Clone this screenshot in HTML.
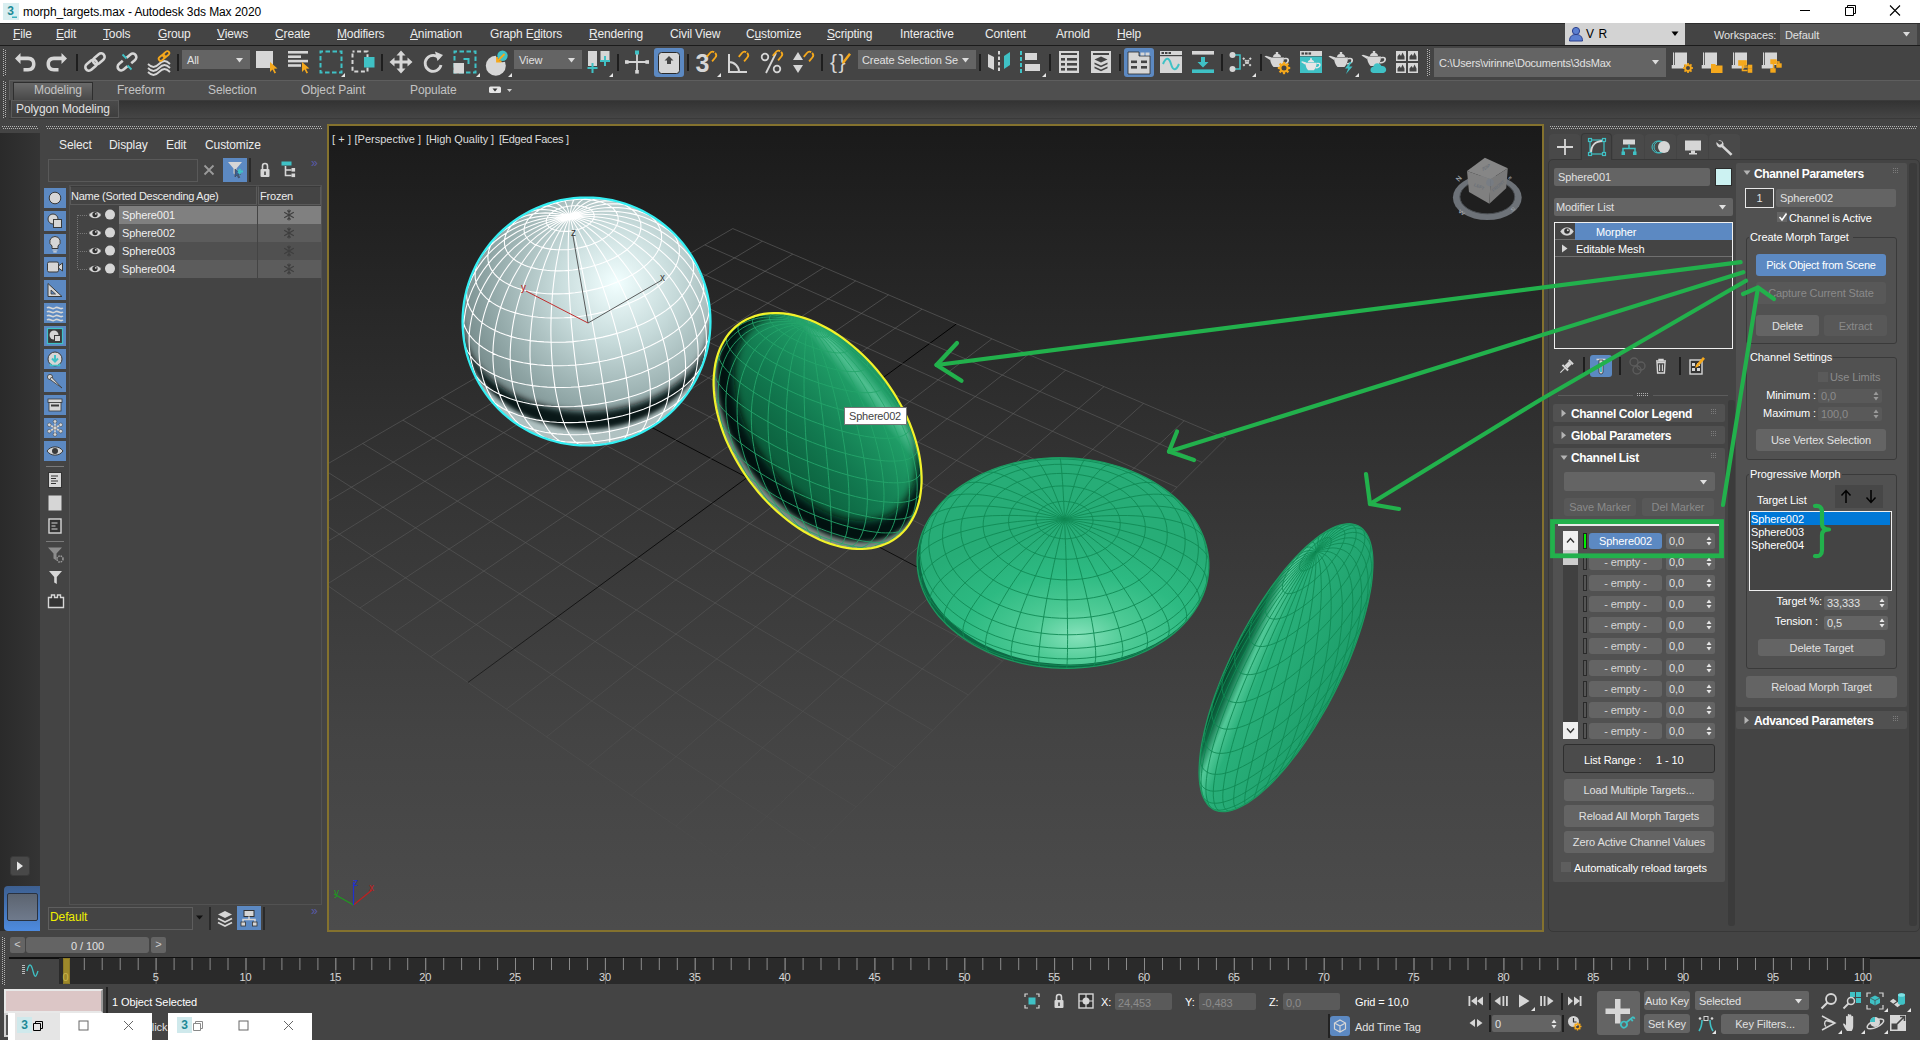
<!DOCTYPE html>
<html><head><meta charset="utf-8"><title>morph_targets.max - Autodesk 3ds Max 2020</title><style>
html,body{margin:0;padding:0;}
body{width:1920px;height:1040px;overflow:hidden;background:#444444;position:relative;font-family:"Liberation Sans",sans-serif;font-size:11px;color:#e1e1e1;letter-spacing:-0.1px;}
div,svg{position:absolute;box-sizing:border-box;}
svg{overflow:visible;}
svg text{font-family:"Liberation Sans",sans-serif;}
.btn{background:#646464;border-radius:3px;text-align:center;color:#e1e1e1;white-space:nowrap;}
.dis{color:#8c8c8c;}
.fld{background:#646464;border-radius:2px;}
.ro{background:#515151;border-radius:2px;}
</style></head><body>
<div style="left:0px;top:0px;width:1920px;height:23px;background:#ffffff;"></div>
<svg style="left:3px;top:3px;" width="16" height="17" viewBox="0 0 16 17"><rect x="0" y="0" width="16" height="17" fill="#d9eef0"/><text x="7.5" y="12" font-size="12" font-weight="bold" fill="#1e8a96" text-anchor="middle">3</text><rect x="9" y="13.5" width="5" height="1.5" fill="#3fb1bd"/></svg>
<div style="left:23px;top:3.5px;height:16px;line-height:16px;font-size:12px;color:#000;white-space:nowrap;letter-spacing:-0.1px;">morph_targets.max - Autodesk 3ds Max 2020</div>
<svg style="left:1795px;top:2px;" width="110" height="17" viewBox="0 0 110 17"><path d="M5 8.5H15" stroke="#000" stroke-width="1" fill="none"/><path d="M50.5 5.5h8v8h-8z M52.5 5.5v-2h8v8h-2" stroke="#000" stroke-width="1" fill="none"/><path d="M95 3.5l10 10M105 3.5l-10 10" stroke="#000" stroke-width="1.1" fill="none"/></svg>
<div style="left:0px;top:23px;width:1920px;height:23px;background:#444444;border-top:1px solid #2e2e2e;border-bottom:1.5px solid #1c1c1c;"></div>
<div style="left:13px;top:25.5px;height:16px;line-height:16px;font-size:12px;color:#ececec;white-space:nowrap;letter-spacing:-0.15px;"><u>F</u>ile</div>
<div style="left:56px;top:25.5px;height:16px;line-height:16px;font-size:12px;color:#ececec;white-space:nowrap;letter-spacing:-0.15px;"><u>E</u>dit</div>
<div style="left:103px;top:25.5px;height:16px;line-height:16px;font-size:12px;color:#ececec;white-space:nowrap;letter-spacing:-0.15px;"><u>T</u>ools</div>
<div style="left:158px;top:25.5px;height:16px;line-height:16px;font-size:12px;color:#ececec;white-space:nowrap;letter-spacing:-0.15px;"><u>G</u>roup</div>
<div style="left:217px;top:25.5px;height:16px;line-height:16px;font-size:12px;color:#ececec;white-space:nowrap;letter-spacing:-0.15px;"><u>V</u>iews</div>
<div style="left:275px;top:25.5px;height:16px;line-height:16px;font-size:12px;color:#ececec;white-space:nowrap;letter-spacing:-0.15px;"><u>C</u>reate</div>
<div style="left:337px;top:25.5px;height:16px;line-height:16px;font-size:12px;color:#ececec;white-space:nowrap;letter-spacing:-0.15px;"><u>M</u>odifiers</div>
<div style="left:410px;top:25.5px;height:16px;line-height:16px;font-size:12px;color:#ececec;white-space:nowrap;letter-spacing:-0.15px;"><u>A</u>nimation</div>
<div style="left:490px;top:25.5px;height:16px;line-height:16px;font-size:12px;color:#ececec;white-space:nowrap;letter-spacing:-0.15px;">Graph E<u>d</u>itors</div>
<div style="left:589px;top:25.5px;height:16px;line-height:16px;font-size:12px;color:#ececec;white-space:nowrap;letter-spacing:-0.15px;"><u>R</u>endering</div>
<div style="left:670px;top:25.5px;height:16px;line-height:16px;font-size:12px;color:#ececec;white-space:nowrap;letter-spacing:-0.15px;">Civil View</div>
<div style="left:746px;top:25.5px;height:16px;line-height:16px;font-size:12px;color:#ececec;white-space:nowrap;letter-spacing:-0.15px;">C<u>u</u>stomize</div>
<div style="left:827px;top:25.5px;height:16px;line-height:16px;font-size:12px;color:#ececec;white-space:nowrap;letter-spacing:-0.15px;"><u>S</u>cripting</div>
<div style="left:900px;top:25.5px;height:16px;line-height:16px;font-size:12px;color:#ececec;white-space:nowrap;letter-spacing:-0.15px;">Interactive</div>
<div style="left:985px;top:25.5px;height:16px;line-height:16px;font-size:12px;color:#ececec;white-space:nowrap;letter-spacing:-0.15px;">Content</div>
<div style="left:1056px;top:25.5px;height:16px;line-height:16px;font-size:12px;color:#ececec;white-space:nowrap;letter-spacing:-0.15px;">Arnold</div>
<div style="left:1117px;top:25.5px;height:16px;line-height:16px;font-size:12px;color:#ececec;white-space:nowrap;letter-spacing:-0.15px;"><u>H</u>elp</div>
<div style="left:1565px;top:23px;width:120px;height:22px;background:#d3d3d3;"></div>
<svg style="left:1568px;top:26px;" width="16" height="16" viewBox="0 0 16 16"><circle cx="8" cy="5" r="3.6" fill="#5b7fd0" stroke="#2b3f8c" stroke-width="1"/><path d="M1.5 15c0-5 3-6.5 6.5-6.5s6.5 1.5 6.5 6.5z" fill="#5b7fd0" stroke="#2b3f8c" stroke-width="1"/></svg>
<div style="left:1586px;top:26.0px;height:16px;line-height:16px;font-size:12px;color:#000;white-space:nowrap;letter-spacing:0.6px;">V R</div>
<svg style="left:1671px;top:31px;" width="8" height="6" viewBox="0 0 8 6"><path d="M0.5 0.5h7l-3.5 4.5z" fill="#000"/></svg>
<div style="left:1714px;top:26.5px;height:16px;line-height:16px;font-size:11px;color:#e1e1e1;white-space:nowrap;">Workspaces:</div>
<div style="left:1780px;top:24px;width:137px;height:21px;background:#5a5a5a;"></div>
<div style="left:1785px;top:26.5px;height:16px;line-height:16px;font-size:11px;color:#e1e1e1;white-space:nowrap;">Default</div>
<svg style="left:1903px;top:32px;" width="8" height="5" viewBox="0 0 8 5"><path d="M0 0h7l-3.5 4.5z" fill="#dcdcdc"/></svg>
<div style="left:3px;top:49px;width:3px;height:27px;background:linear-gradient(#b4b4b4 50%,transparent 50%) 0 0/1px 2px repeat-y,linear-gradient(#b4b4b4 50%,transparent 50%) 2px 1px/1px 2px repeat-y;"></div>
<svg style="left:11.0px;top:48.0px;" width="28" height="28" viewBox="-14.0 -14.0 28 28"><path d="M-10 -3.5 L-4.5 -9 V-5.5 H3 C8 -5.5 10.5 -2.5 10.5 2 C10.5 6.5 8 9.5 3 9.5 H-1.5 V6 H3 C5.5 6 7 4.5 7 2 C7 -0.5 5.5 -1.7 3 -1.7 H-4.5 V2 Z" fill="#d6d6d6"/></svg>
<svg style="left:43.0px;top:48.0px;" width="28" height="28" viewBox="-14.0 -14.0 28 28"><path d="M10 -3.5 L4.5 -9 V-5.5 H-3 C-8 -5.5 -10.5 -2.5 -10.5 2 C-10.5 6.5 -8 9.5 -3 9.5 H1.5 V6 H-3 C-5.5 6 -7 4.5 -7 2 C-7 -0.5 -5.5 -1.7 -3 -1.7 H4.5 V2 Z" fill="#d6d6d6"/></svg>
<div style="left:76px;top:54px;width:2px;height:17px;background:#1e1e1e;"></div>
<svg style="left:81.0px;top:48.0px;" width="28" height="28" viewBox="-14.0 -14.0 28 28"><g transform="rotate(-40)" fill="none" stroke="#d6d6d6" stroke-width="2.6"><rect x="-11.5" y="-3.6" width="13" height="7.2" rx="3.6"/><rect x="-1.5" y="-3.6" width="13" height="7.2" rx="3.6"/></g></svg>
<svg style="left:113.0px;top:48.0px;" width="28" height="28" viewBox="-14.0 -14.0 28 28"><g transform="rotate(-40)" fill="none" stroke="#d6d6d6" stroke-width="2.6"><path d="M-2.5 -3.6 H-7.5 a3.6 3.6 0 0 0 0 7.2 H-2.5"/><path d="M2.5 -3.6 H7.5 a3.6 3.6 0 0 1 0 7.2 H2.5"/></g><path d="M-4.5 -7.5l4 4M0.5 3.5l4 4" stroke="#3fc1c5" stroke-width="1.8"/></svg>
<svg style="left:145.0px;top:48.0px;" width="28" height="28" viewBox="-14.0 -14.0 28 28"><g fill="none" stroke="#d6d6d6" stroke-width="1.8"><path d="M-11 2c4 4 7 4 11 0s7 -4 11 0"/><path d="M-11 6c4 4 7 4 11 0s7 -4 11 0"/><path d="M-11 10c4 4 7 4 11 0s7 -4 11 0"/></g><g transform="translate(5,-6) scale(0.55)"><g transform="rotate(-40)" fill="none" stroke="#f5a81c" stroke-width="3.2"><rect x="-11.5" y="-3.6" width="13" height="7.2" rx="3.6"/><rect x="-1.5" y="-3.6" width="13" height="7.2" rx="3.6"/></g></g></svg>
<div style="left:177px;top:54px;width:2px;height:17px;background:#1e1e1e;"></div>
<div style="left:182px;top:50px;width:68px;height:19px;background:#646464;"></div>
<div style="left:187px;top:51.5px;height:16px;line-height:16px;font-size:11px;color:#e1e1e1;white-space:nowrap;">All</div>
<svg style="left:236px;top:57.5px;" width="8" height="5" viewBox="0 0 8 5"><path d="M0 0h7l-3.5 4.5z" fill="#dcdcdc"/></svg>
<svg style="left:252.0px;top:48.0px;" width="28" height="28" viewBox="-14.0 -14.0 28 28"><rect x="-10" y="-11" width="17" height="17" fill="#d6d6d6"/><path d="M4 0 L4 10 L6.5 7.5 L8.5 11.5 L10 10.7 L8 6.8 L11.5 6.5 Z" fill="#f5a81c"/></svg>
<svg style="left:284.0px;top:48.0px;" width="28" height="28" viewBox="-14.0 -14.0 28 28"><g fill="#d6d6d6"><rect x="-10" y="-11" width="20" height="2.6"/><rect x="-10" y="-6.6" width="13" height="2.6"/><rect x="-10" y="-2.2" width="20" height="2.6"/><rect x="-10" y="2.2" width="13" height="2.6"/></g><path d="M4 0 L4 10 L6.5 7.5 L8.5 11.5 L10 10.7 L8 6.8 L11.5 6.5 Z" fill="#f5a81c"/></svg>
<svg style="left:317.0px;top:48.0px;" width="28" height="28" viewBox="-14.0 -14.0 28 28"><rect x="-10.5" y="-10.5" width="21" height="21" fill="none" stroke="#3fc1c5" stroke-width="2" stroke-dasharray="4.5 2.5" stroke-dashoffset="2"/></svg>
<svg style="left:341px;top:73px;" width="4" height="4" viewBox="0 0 4 4"><path d="M4 0v4h-4z" fill="#e6e6e6"/></svg>
<svg style="left:349.0px;top:48.0px;" width="28" height="28" viewBox="-14.0 -14.0 28 28"><rect x="-10.5" y="-10.5" width="15" height="20" fill="none" stroke="#d6d6d6" stroke-width="2" stroke-dasharray="4 2.6" stroke-dashoffset="2"/><rect x="1" y="-5" width="10.5" height="10.5" fill="#3fc1c5"/></svg>
<div style="left:381px;top:54px;width:2px;height:17px;background:#1e1e1e;"></div>
<svg style="left:387.0px;top:48.0px;" width="28" height="28" viewBox="-14.0 -14.0 28 28"><path d="M0 -11.5l4.5 5h-3v5h5v-3l5 4.5l-5 4.5v-3h-5v5h3l-4.5 5l-4.5 -5h3v-5h-5v3l-5 -4.5l5 -4.5v3h5v-5h-3z" fill="#d6d6d6"/></svg>
<svg style="left:419.0px;top:48.0px;" width="28" height="28" viewBox="-14.0 -14.0 28 28"><path d="M6.5 -3.5A8 8 0 1 0 8 3" fill="none" stroke="#d6d6d6" stroke-width="2.8"/><path d="M2 -10.5l8 3.5l-5.5 6z" fill="#d6d6d6"/></svg>
<svg style="left:451.0px;top:48.0px;" width="28" height="28" viewBox="-14.0 -14.0 28 28"><rect x="-10.5" y="-10.5" width="21" height="21" fill="none" stroke="#3fc1c5" stroke-width="2" stroke-dasharray="4.5 2.5" stroke-dashoffset="2"/><rect x="-11.5" y="1" width="10.5" height="10.5" fill="#d6d6d6"/><path d="M-1.5 -3h5v5" fill="none" stroke="#3fc1c5" stroke-width="2"/></svg>
<svg style="left:476px;top:73px;" width="4" height="4" viewBox="0 0 4 4"><path d="M4 0v4h-4z" fill="#e6e6e6"/></svg>
<svg style="left:483.0px;top:48.0px;" width="28" height="28" viewBox="-14.0 -14.0 28 28"><circle cx="-1.200" cy="3.700" r="10" fill="#d6d6d6"/><circle cx="5.500" cy="-6.300" r="6.500" fill="#444"/><circle cx="5.500" cy="-6.300" r="5.200" fill="#3fc1c5"/><path d="M7.500 -8l-7.500 7.500m0 -4.500v4.500h4.500" stroke="#f5a81c" stroke-width="1.800" fill="none"/></svg>
<svg style="left:508px;top:73px;" width="4" height="4" viewBox="0 0 4 4"><path d="M4 0v4h-4z" fill="#e6e6e6"/></svg>
<div style="left:514px;top:50px;width:68px;height:19px;background:#646464;"></div>
<div style="left:519px;top:51.5px;height:16px;line-height:16px;font-size:11px;color:#e1e1e1;white-space:nowrap;">View</div>
<svg style="left:568px;top:57.5px;" width="8" height="5" viewBox="0 0 8 5"><path d="M0 0h7l-3.5 4.5z" fill="#dcdcdc"/></svg>
<svg style="left:585.0px;top:48.0px;" width="28" height="28" viewBox="-14.0 -14.0 28 28"><rect x="-11" y="-11" width="9" height="15" fill="#d6d6d6"/><rect x="1.5" y="-11" width="9" height="9" fill="#d6d6d6"/><path d="M-6.5 1v10M-11.5 6h10M6 -6v10M1 -1h10" stroke="#3fc1c5" stroke-width="2" fill="none"/></svg>
<svg style="left:609px;top:73px;" width="4" height="4" viewBox="0 0 4 4"><path d="M4 0v4h-4z" fill="#e6e6e6"/></svg>
<div style="left:617px;top:54px;width:2px;height:17px;background:#1e1e1e;"></div>
<svg style="left:623.0px;top:48.0px;" width="28" height="28" viewBox="-14.0 -14.0 28 28"><path d="M-11 0h22M0 -8v19" stroke="#d6d6d6" stroke-width="1.8"/><rect x="-2" y="-11.5" width="4" height="4" fill="#3fc1c5"/><rect x="-12" y="-1.8" width="3.6" height="3.6" fill="#d6d6d6"/><rect x="8.4" y="-1.8" width="3.6" height="3.6" fill="#d6d6d6"/><rect x="-1.8" y="8" width="3.6" height="3.6" fill="#d6d6d6"/></svg>
<div style="left:654px;top:48px;width:30px;height:29px;background:#5c89c2;border-radius:3px;"></div>
<svg style="left:655.0px;top:48.5px;" width="28" height="28" viewBox="-14.0 -14.0 28 28"><rect x="-10.5" y="-10.5" width="21" height="21" rx="3" fill="#d6d6d6" stroke="#2a2a2a" stroke-width="1"/><path d="M0 -7l4.5 4.5h-2.5v3.5h-4v-3.5h-2.5z" fill="#444"/></svg>
<div style="left:687px;top:54px;width:2px;height:17px;background:#1e1e1e;"></div>
<svg style="left:693.0px;top:48.0px;" width="28" height="28" viewBox="-14.0 -14.0 28 28"><text x="-4.5" y="9.5" font-size="25" font-weight="bold" fill="#d6d6d6" text-anchor="middle">3</text><g transform="translate(5,-6) rotate(40)" fill="none" stroke="#f5a81c" stroke-width="1.8"><path d="M-3.5 4v-5a3.5 3.5 0 0 1 7 0v5" stroke-dasharray="9.5 1.2 20"/></g></svg>
<svg style="left:717px;top:73px;" width="4" height="4" viewBox="0 0 4 4"><path d="M4 0v4h-4z" fill="#e6e6e6"/></svg>
<svg style="left:724.0px;top:48.0px;" width="28" height="28" viewBox="-14.0 -14.0 28 28"><path d="M-9 -8v18h18M-9 0a10 10 0 0 1 10 10" fill="none" stroke="#d6d6d6" stroke-width="2"/><g transform="translate(6,-6) rotate(40)" fill="none" stroke="#f5a81c" stroke-width="1.8"><path d="M-3.5 4v-5a3.5 3.5 0 0 1 7 0v5" stroke-dasharray="9.5 1.2 20"/></g></svg>
<svg style="left:757.0px;top:48.0px;" width="28" height="28" viewBox="-14.0 -14.0 28 28"><circle cx="-6" cy="-5" r="3.3" fill="none" stroke="#d6d6d6" stroke-width="1.8"/><circle cx="6" cy="7" r="3.3" fill="none" stroke="#d6d6d6" stroke-width="1.8"/><path d="M5 -9l-10 20" stroke="#d6d6d6" stroke-width="1.8"/><g transform="translate(7,-7) rotate(40)" fill="none" stroke="#f5a81c" stroke-width="1.8"><path d="M-3.5 4v-5a3.5 3.5 0 0 1 7 0v5" stroke-dasharray="9.5 1.2 20"/></g></svg>
<svg style="left:788.0px;top:48.0px;" width="28" height="28" viewBox="-14.0 -14.0 28 28"><path d="M-9 -2l5 -8l5 8zM-9 3l5 8l5 -8z" fill="#d6d6d6"/><g transform="translate(7,-6) rotate(40)" fill="none" stroke="#f5a81c" stroke-width="1.8"><path d="M-3.5 4v-5a3.5 3.5 0 0 1 7 0v5" stroke-dasharray="9.5 1.2 20"/></g></svg>
<div style="left:821px;top:54px;width:2px;height:17px;background:#1e1e1e;"></div>
<svg style="left:827.0px;top:48.0px;" width="28" height="28" viewBox="-14.0 -14.0 28 28"><text x="-2.5" y="7" font-size="21" fill="#d6d6d6" text-anchor="middle" letter-spacing="1.5">{}</text><path d="M1.500 -0.500l6.500 -8.500l2 1.600l-6.500 8.500l-2.600 1z" fill="#f5a81c"/></svg>
<div style="left:858px;top:50px;width:118px;height:19px;background:#646464;"></div>
<div style="left:862px;top:51.5px;height:16px;line-height:16px;font-size:11px;color:#e1e1e1;white-space:nowrap;">Create Selection Se</div>
<svg style="left:962px;top:57.5px;" width="8" height="5" viewBox="0 0 8 5"><path d="M0 0h7l-3.5 4.5z" fill="#dcdcdc"/></svg>
<div style="left:979px;top:54px;width:2px;height:17px;background:#1e1e1e;"></div>
<svg style="left:985.0px;top:48.0px;" width="28" height="28" viewBox="-14.0 -14.0 28 28"><path d="M-11 -8l6 3v13l-6 -3z" fill="#d6d6d6"/><path d="M11 -10l-6 4v13l6 -4z" fill="#3fc1c5"/><path d="M0 -11v22" stroke="#d6d6d6" stroke-width="2" stroke-dasharray="3.5 2"/></svg>
<svg style="left:1016.0px;top:48.0px;" width="28" height="28" viewBox="-14.0 -14.0 28 28"><path d="M-9 -11v22" stroke="#3fc1c5" stroke-width="2" stroke-dasharray="4 2"/><rect x="-5" y="-9" width="12" height="7" fill="#d6d6d6"/><rect x="-5" y="2" width="15" height="7" fill="#d6d6d6"/></svg>
<svg style="left:1042px;top:73px;" width="4" height="4" viewBox="0 0 4 4"><path d="M4 0v4h-4z" fill="#e6e6e6"/></svg>
<div style="left:1049px;top:54px;width:2px;height:17px;background:#1e1e1e;"></div>
<svg style="left:1055.0px;top:48.0px;" width="28" height="28" viewBox="-14.0 -14.0 28 28"><rect x="-10" y="-11" width="20" height="22" fill="#d6d6d6"/><g fill="#444"><rect x="-8" y="-9" width="16" height="2"/><rect x="-8" y="-4" width="4" height="2.6"/><rect x="-2" y="-4" width="10" height="2.6"/><rect x="-8" y="1" width="4" height="2.6"/><rect x="-2" y="1" width="10" height="2.6"/><rect x="-8" y="6" width="4" height="2.6"/><rect x="-2" y="6" width="10" height="2.6"/></g></svg>
<svg style="left:1087.0px;top:48.0px;" width="28" height="28" viewBox="-14.0 -14.0 28 28"><rect x="-10" y="-11" width="20" height="22" fill="#d6d6d6"/><g fill="#444"><rect x="-8" y="-9" width="16" height="2"/><path d="M0 -5.5l6.5 3l-6.5 3l-6.5 -3z"/><path d="M-6.5 0.5l6.5 3l6.5 -3l0 1.8l-6.5 3l-6.5 -3z"/><path d="M-6.5 4.5l6.5 3l6.5 -3l0 1.8l-6.5 3l-6.5 -3z"/></g></svg>
<div style="left:1119px;top:54px;width:2px;height:17px;background:#1e1e1e;"></div>
<div style="left:1124px;top:48px;width:30px;height:29px;background:#5c89c2;border-radius:3px;"></div>
<svg style="left:1125.0px;top:48.5px;" width="28" height="28" viewBox="-14.0 -14.0 28 28"><path d="M-11 -11h11v4h11v18h-22z" fill="#d6d6d6" stroke="#2a2a2a" stroke-width="0.8"/><rect x="1.5" y="-10.5" width="4" height="3" fill="#d6d6d6"/><rect x="6.5" y="-10.5" width="4" height="3" fill="#d6d6d6"/><g fill="#444"><rect x="-8" y="-2.5" width="6" height="2.6"/><rect x="2" y="-2.5" width="6" height="2.6"/><rect x="-8" y="3" width="6" height="2.6"/><rect x="2" y="3" width="6" height="2.6"/></g></svg>
<svg style="left:1157.0px;top:48.0px;" width="28" height="28" viewBox="-14.0 -14.0 28 28"><rect x="-11" y="-11" width="22" height="22" fill="#d6d6d6"/><rect x="-11" y="-7" width="22" height="1.2" fill="#444"/><g fill="#444"><rect x="-9.5" y="-10" width="2.5" height="2"/><rect x="-6" y="-10" width="2.5" height="2"/><rect x="-2.5" y="-10" width="2.5" height="2"/></g><path d="M-8 2c3 -7 6 -7 8 0s5 7 8 0" fill="none" stroke="#3fc1c5" stroke-width="2"/></svg>
<svg style="left:1189.0px;top:48.0px;" width="28" height="28" viewBox="-14.0 -14.0 28 28"><rect x="-11" y="-11" width="22" height="3.6" fill="#d6d6d6"/><rect x="-11" y="7.4" width="22" height="3.6" fill="#3fc1c5"/><path d="M-2 -5h4v5h3.5l-5.5 5.5l-5.5 -5.5h3.5z" fill="#3fc1c5"/></svg>
<div style="left:1221px;top:54px;width:2px;height:17px;background:#1e1e1e;"></div>
<svg style="left:1227.0px;top:48.0px;" width="28" height="28" viewBox="-14.0 -14.0 28 28"><g fill="none" stroke="#3fc1c5" stroke-width="1.6"><path d="M-6 -7h5v14h-5"/></g><path d="M2 -4l8 8M10 -4l-8 8" stroke="#d6d6d6" stroke-width="2" stroke-dasharray="2 1"/><circle cx="-8.5" cy="-7" r="3" fill="#d6d6d6"/><circle cx="-8.5" cy="7" r="3" fill="#d6d6d6"/></svg>
<svg style="left:1252px;top:73px;" width="4" height="4" viewBox="0 0 4 4"><path d="M4 0v4h-4z" fill="#e6e6e6"/></svg>
<div style="left:1260px;top:54px;width:2px;height:17px;background:#1e1e1e;"></div>
<svg style="left:1265.0px;top:48.0px;" width="28" height="28" viewBox="-14.0 -14.0 28 28"><g transform="translate(-2,-1) scale(1)" fill="#d6d6d6"><path d="M-7 -3.5h14c0 4 -1.5 7.5 -3.5 9.5h-7c-2 -2 -3.5 -5.5 -3.5 -9.5z"/><path d="M-4 -4c0 -2 2 -3.2 4 -3.2s4 1.2 4 3.2z"/><rect x="-1.2" y="-9" width="2.4" height="2"/><path d="M-7 -1l-5.5 -3.5l1.5 -0.8l5 1.5z"/><path d="M7 -3c4 -1 5.5 0.5 5 3s-3.5 4 -6.5 3.5l0.5 -1.6c2 0.2 4 -0.6 4.2 -2.2s-1 -1.8 -3.2 -1.2z"/></g><g transform="translate(5,6)"><g fill="#f5a81c"><circle r="3.6" fill="none" stroke="#f5a81c" stroke-width="2.2"/><rect x="-1.1" y="-6.2" width="2.2" height="2.6" transform="rotate(0)"/><rect x="-1.1" y="-6.2" width="2.2" height="2.6" transform="rotate(45)"/><rect x="-1.1" y="-6.2" width="2.2" height="2.6" transform="rotate(90)"/><rect x="-1.1" y="-6.2" width="2.2" height="2.6" transform="rotate(135)"/><rect x="-1.1" y="-6.2" width="2.2" height="2.6" transform="rotate(180)"/><rect x="-1.1" y="-6.2" width="2.2" height="2.6" transform="rotate(225)"/><rect x="-1.1" y="-6.2" width="2.2" height="2.6" transform="rotate(270)"/><rect x="-1.1" y="-6.2" width="2.2" height="2.6" transform="rotate(315)"/></g></g></svg>
<svg style="left:1297.0px;top:48.0px;" width="28" height="28" viewBox="-14.0 -14.0 28 28"><rect x="-11" y="-11" width="22" height="5" fill="#d6d6d6"/><g fill="#444"><rect x="-9.5" y="-9.6" width="2.6" height="2.2"/><rect x="-6" y="-9.6" width="2.6" height="2.2"/><rect x="-2.5" y="-9.6" width="2.6" height="2.2"/></g><rect x="-11" y="-5.5" width="22" height="16.5" fill="#3fc1c5"/><g transform="translate(0,3.5) scale(0.8)" fill="#e6e6e6"><path d="M-7 -3.5h14c0 4 -1.5 7.5 -3.5 9.5h-7c-2 -2 -3.5 -5.5 -3.5 -9.5z"/><path d="M-4 -4c0 -2 2 -3.2 4 -3.2s4 1.2 4 3.2z"/><rect x="-1.2" y="-9" width="2.4" height="2"/><path d="M-7 -1l-5.5 -3.5l1.5 -0.8l5 1.5z"/><path d="M7 -3c4 -1 5.5 0.5 5 3s-3.5 4 -6.5 3.5l0.5 -1.6c2 0.2 4 -0.6 4.2 -2.2s-1 -1.8 -3.2 -1.2z"/></g></svg>
<svg style="left:1329.0px;top:48.0px;" width="28" height="28" viewBox="-14.0 -14.0 28 28"><g transform="translate(-2,-1) scale(1)" fill="#d6d6d6"><path d="M-7 -3.5h14c0 4 -1.5 7.5 -3.5 9.5h-7c-2 -2 -3.5 -5.5 -3.5 -9.5z"/><path d="M-4 -4c0 -2 2 -3.2 4 -3.2s4 1.2 4 3.2z"/><rect x="-1.2" y="-9" width="2.4" height="2"/><path d="M-7 -1l-5.5 -3.5l1.5 -0.8l5 1.5z"/><path d="M7 -3c4 -1 5.5 0.5 5 3s-3.5 4 -6.5 3.5l0.5 -1.6c2 0.2 4 -0.6 4.2 -2.2s-1 -1.8 -3.2 -1.2z"/></g><path d="M7 0l-5 6.5h3.2l-2.2 5.5l6.5 -7.5h-3.4l2.6 -4.5z" fill="#3fc1c5"/></svg>
<svg style="left:1355px;top:73px;" width="4" height="4" viewBox="0 0 4 4"><path d="M4 0v4h-4z" fill="#e6e6e6"/></svg>
<svg style="left:1361.0px;top:48.0px;" width="28" height="28" viewBox="-14.0 -14.0 28 28"><g transform="translate(-1,-2) scale(1)" fill="#d6d6d6"><path d="M-7 -3.5h14c0 4 -1.5 7.5 -3.5 9.5h-7c-2 -2 -3.5 -5.5 -3.5 -9.5z"/><path d="M-4 -4c0 -2 2 -3.2 4 -3.2s4 1.2 4 3.2z"/><rect x="-1.2" y="-9" width="2.4" height="2"/><path d="M-7 -1l-5.5 -3.5l1.5 -0.8l5 1.5z"/><path d="M7 -3c4 -1 5.5 0.5 5 3s-3.5 4 -6.5 3.5l0.5 -1.6c2 0.2 4 -0.6 4.2 -2.2s-1 -1.8 -3.2 -1.2z"/></g><path d="M-2 11a3.2 3.2 0 0 1 0.3 -6.3a4.3 4.3 0 0 1 8.2 -0.6a3.5 3.5 0 0 1 2 6.9z" fill="#3fc1c5"/></svg>
<svg style="left:1393.0px;top:48.0px;" width="28" height="28" viewBox="-14.0 -14.0 28 28"><rect x="-11" y="-11" width="10" height="10" fill="#d6d6d6"/><path d="M-9.5 -2.5v-3l2 -2.5l1.5 2l1.5 -3.5l2 4v3z" fill="#444"/><rect x="-11" y="1" width="10" height="10" fill="#d6d6d6"/><path d="M-9.5 9.5v-3l2 -2.5l1.5 2l1.5 -3.5l2 4v3z" fill="#444"/><rect x="1" y="-11" width="10" height="10" fill="#d6d6d6"/><path d="M2.5 -2.5v-3l2 -2.5l1.5 2l1.5 -3.5l2 4v3z" fill="#444"/><rect x="1" y="1" width="10" height="10" fill="#d6d6d6"/><path d="M2.5 9.5v-3l2 -2.5l1.5 2l1.5 -3.5l2 4v3z" fill="#444"/></svg>
<div style="left:1427px;top:49px;width:3px;height:27px;background:linear-gradient(#b4b4b4 50%,transparent 50%) 0 0/1px 2px repeat-y,linear-gradient(#b4b4b4 50%,transparent 50%) 2px 1px/1px 2px repeat-y;"></div>
<div style="left:1434px;top:48px;width:232px;height:29px;background:#646464;"></div>
<div style="left:1439px;top:55.0px;height:16px;line-height:16px;font-size:11px;color:#e1e1e1;white-space:nowrap;letter-spacing:-0.2px;">C:\Users\virinne\Documents\3dsMax</div>
<svg style="left:1652px;top:60px;" width="8" height="5" viewBox="0 0 8 5"><path d="M0 0h7l-3.5 4.5z" fill="#dcdcdc"/></svg>
<svg style="left:1668.0px;top:48.0px;" width="28" height="28" viewBox="-14.0 -14.0 28 28"><path d="M-9 -9c0 -1 1 -1 1.2 0v12h10v3.5h-12.5v-3.5h1.3z" fill="#d6d6d6"/><path d="M-7 -9.5h12v12.5h-12z" fill="#d6d6d6"/><g transform="translate(6,6) scale(0.8)"><g fill="#f5a81c"><circle r="3.6" fill="none" stroke="#f5a81c" stroke-width="2.2"/><rect x="-1.1" y="-6.2" width="2.2" height="2.6" transform="rotate(0)"/><rect x="-1.1" y="-6.2" width="2.2" height="2.6" transform="rotate(45)"/><rect x="-1.1" y="-6.2" width="2.2" height="2.6" transform="rotate(90)"/><rect x="-1.1" y="-6.2" width="2.2" height="2.6" transform="rotate(135)"/><rect x="-1.1" y="-6.2" width="2.2" height="2.6" transform="rotate(180)"/><rect x="-1.1" y="-6.2" width="2.2" height="2.6" transform="rotate(225)"/><rect x="-1.1" y="-6.2" width="2.2" height="2.6" transform="rotate(270)"/><rect x="-1.1" y="-6.2" width="2.2" height="2.6" transform="rotate(315)"/></g></g></svg>
<svg style="left:1698.0px;top:48.0px;" width="28" height="28" viewBox="-14.0 -14.0 28 28"><path d="M-9 -9c0 -1 1 -1 1.2 0v12h10v3.5h-12.5v-3.5h1.3z" fill="#d6d6d6"/><path d="M-7 -9.5h12v12.5h-12z" fill="#d6d6d6"/><path d="M-1 2h4l1.5 1.5h6v7.5h-11.5z" fill="#f5a81c"/></svg>
<svg style="left:1728.0px;top:48.0px;" width="28" height="28" viewBox="-14.0 -14.0 28 28"><path d="M-9 -9c0 -1 1 -1 1.2 0v12h10v3.5h-12.5v-3.5h1.3z" fill="#d6d6d6"/><path d="M-7 -9.5h12v12.5h-12z" fill="#d6d6d6"/><g fill="none" stroke="#f5a81c" stroke-width="1.6"><rect x="-3" y="-1" width="7" height="4" fill="#f5a81c"/><path d="M0.5 3v5.5h5M0.5 5h5"/><rect x="6.5" y="3.5" width="3" height="2.5" fill="#f5a81c"/><rect x="6.5" y="7.5" width="3" height="2.5" fill="#f5a81c"/></g></svg>
<svg style="left:1758.0px;top:48.0px;" width="28" height="28" viewBox="-14.0 -14.0 28 28"><path d="M-9 -9c0 -1 1 -1 1.2 0v12h10v3.5h-12.5v-3.5h1.3z" fill="#d6d6d6"/><path d="M-7 -9.5h12v12.5h-12z" fill="#d6d6d6"/><g fill="#f5a81c" stroke="#f5a81c" stroke-width="1.4"><rect x="-1" y="-2" width="5" height="3.5"/><rect x="5" y="2" width="4" height="3"/><rect x="-1" y="7" width="4" height="3"/><path d="M1.5 1.5v5.5M4 0h3v2" fill="none"/></g></svg>
<div style="left:0px;top:79px;width:1920px;height:40px;background:#444;"></div>
<div style="left:3px;top:81px;width:3px;height:37px;background:linear-gradient(#b4b4b4 50%,transparent 50%) 0 0/1px 2px repeat-y,linear-gradient(#b4b4b4 50%,transparent 50%) 2px 1px/1px 2px repeat-y;"></div>
<div style="left:9px;top:80px;width:1911px;height:20px;background:#4f4f4f;border-top:1px solid #5e5e5e;border-left:1px solid #5e5e5e;"></div>
<div style="left:9px;top:100px;width:1911px;height:19px;background:linear-gradient(#333333,#454545);border-top:1px solid #3a3a3a;border-bottom:1px solid #3a3a3a;"></div>
<div style="left:13px;top:82px;width:80px;height:18px;background:linear-gradient(#6a6a6a,#484848);border:1px solid #2e2e2e;border-bottom:none;"></div>
<div style="left:34px;top:82.0px;height:16px;line-height:16px;font-size:12px;color:#c3c3c3;white-space:nowrap;letter-spacing:-0.1px;">Modeling</div>
<div style="left:117px;top:82.0px;height:16px;line-height:16px;font-size:12px;color:#c3c3c3;white-space:nowrap;letter-spacing:-0.1px;">Freeform</div>
<div style="left:208px;top:82.0px;height:16px;line-height:16px;font-size:12px;color:#c3c3c3;white-space:nowrap;letter-spacing:-0.1px;">Selection</div>
<div style="left:301px;top:82.0px;height:16px;line-height:16px;font-size:12px;color:#c3c3c3;white-space:nowrap;letter-spacing:-0.1px;">Object Paint</div>
<div style="left:410px;top:82.0px;height:16px;line-height:16px;font-size:12px;color:#c3c3c3;white-space:nowrap;letter-spacing:-0.1px;">Populate</div>
<svg style="left:489px;top:86px;" width="24" height="8" viewBox="0 0 24 8"><rect x="0" y="0.5" width="12" height="6.5" rx="1.5" fill="#e6e6e6"/><path d="M3.5 2.5h5l-2.5 3z" fill="#333"/><path d="M18 3h5l-2.5 3z" fill="#cfcfcf"/></svg>
<div style="left:11px;top:100px;width:108px;height:18px;background:linear-gradient(#4a4a4a,#3e3e3e);border:1px solid #5a5a5a;"></div>
<div style="left:16px;top:100.5px;height:16px;line-height:16px;font-size:12px;color:#e1e1e1;white-space:nowrap;letter-spacing:-0.1px;">Polygon Modeling</div>
<div style="left:2px;top:126px;width:36px;height:3px;background:linear-gradient(90deg,#b4b4b4 50%,transparent 50%) 0 0/2px 1px repeat-x,linear-gradient(90deg,#b4b4b4 50%,transparent 50%) 1px 2px/2px 1px repeat-x;"></div>
<div style="left:46px;top:126px;width:276px;height:3px;background:linear-gradient(90deg,#b4b4b4 50%,transparent 50%) 0 0/2px 1px repeat-x,linear-gradient(90deg,#b4b4b4 50%,transparent 50%) 1px 2px/2px 1px repeat-x;"></div>
<div style="left:1550px;top:126px;width:367px;height:3px;background:linear-gradient(90deg,#b4b4b4 50%,transparent 50%) 0 0/2px 1px repeat-x,linear-gradient(90deg,#b4b4b4 50%,transparent 50%) 1px 2px/2px 1px repeat-x;"></div>
<div style="left:0px;top:133px;width:40px;height:798px;background:linear-gradient(90deg,#2a2a2a,#343434);"></div>
<div style="left:10px;top:856px;width:20px;height:20px;background:#484848;border-radius:3px;border:1px solid #3a3a3a;"></div>
<svg style="left:16px;top:861px;" width="8" height="10" viewBox="0 0 8 10"><path d="M1 0.5l6 4.5l-6 4.5z" fill="#e6e6e6"/></svg>
<div style="left:4px;top:886px;width:36px;height:45px;background:linear-gradient(#3d5f90,#4d8be0);border-radius:4px 0 0 4px;"></div>
<div style="left:7px;top:893px;width:31px;height:28px;background:linear-gradient(#5c6470,#6f7a8c);border:1.5px solid #2a3240;border-radius:2px;"></div>
<div style="left:40px;top:133px;width:283px;height:804px;background:#444444;"></div>
<div style="left:59px;top:137.0px;height:16px;line-height:16px;font-size:12px;color:#ececec;white-space:nowrap;letter-spacing:-0.1px;">Select</div>
<div style="left:109px;top:137.0px;height:16px;line-height:16px;font-size:12px;color:#ececec;white-space:nowrap;letter-spacing:-0.1px;">Display</div>
<div style="left:166px;top:137.0px;height:16px;line-height:16px;font-size:12px;color:#ececec;white-space:nowrap;letter-spacing:-0.1px;">Edit</div>
<div style="left:205px;top:137.0px;height:16px;line-height:16px;font-size:12px;color:#ececec;white-space:nowrap;letter-spacing:-0.1px;">Customize</div>
<div style="left:48px;top:159px;width:150px;height:23px;border:1px solid #595959;background:#444;"></div>
<svg style="left:203px;top:164px;" width="12" height="12" viewBox="0 0 12 12"><path d="M1.5 1.5l9 9M10.5 1.5l-9 9" stroke="#9a9a9a" stroke-width="1.8"/></svg>
<div style="left:223px;top:158px;width:24px;height:24px;background:#5c89c2;"></div>
<svg style="left:226px;top:160px;" width="20" height="20" viewBox="0 0 20 20"><path d="M2 2h14l-5.5 6.5v7l-3 -2v-5z" fill="#d6d6d6"/><path d="M9 9l0 8l2 -2l1.5 3l1.2 -0.6l-1.4 -3l2.7 -0.2z" fill="#3b5f94" stroke="#444" stroke-width="0.6"/><path d="M17 11.5h-5m0 0l2.5 -2.5m-2.5 2.5l2.5 2.5" stroke="#3fc1c5" stroke-width="1.8" fill="none"/></svg>
<div style="left:249px;top:158px;width:2px;height:24px;background:#2a2a2a;"></div>
<svg style="left:259px;top:161px;" width="12" height="18" viewBox="0 0 12 18"><rect x="1.5" y="8" width="9" height="8" rx="1" fill="#d6d6d6"/><path d="M3.5 8v-3a2.5 2.5 0 0 1 5 0v3" fill="none" stroke="#d6d6d6" stroke-width="1.6"/><rect x="5.2" y="10.5" width="1.6" height="3.5" fill="#444"/></svg>
<svg style="left:281px;top:160px;" width="16" height="18" viewBox="0 0 16 18"><rect x="0.5" y="1.5" width="10" height="4" fill="#3fc1c5"/><path d="M4.5 6v9.5h6M4.5 10h6" stroke="#d6d6d6" stroke-width="1.6" fill="none"/><rect x="10.5" y="8" width="3.6" height="3.6" fill="#d6d6d6"/><rect x="10.5" y="13.5" width="3.6" height="3.6" fill="#d6d6d6"/></svg>
<div style="left:311px;top:154.5px;height:16px;line-height:16px;font-size:12px;color:#5a5aa8;white-space:nowrap;">»</div>
<div style="left:44px;top:188px;width:22px;height:20px;background:#5c89c2;"></div>
<div style="left:44px;top:211px;width:22px;height:20px;background:#5c89c2;"></div>
<div style="left:44px;top:234px;width:22px;height:20px;background:#5c89c2;"></div>
<div style="left:44px;top:257px;width:22px;height:20px;background:#5c89c2;"></div>
<div style="left:44px;top:280px;width:22px;height:20px;background:#5c89c2;"></div>
<div style="left:44px;top:303px;width:22px;height:20px;background:#5c89c2;"></div>
<div style="left:44px;top:326px;width:22px;height:20px;background:#5c89c2;"></div>
<div style="left:44px;top:349px;width:22px;height:20px;background:#5c89c2;"></div>
<div style="left:44px;top:372px;width:22px;height:20px;background:#5c89c2;"></div>
<div style="left:44px;top:395px;width:22px;height:20px;background:#5c89c2;"></div>
<div style="left:44px;top:418px;width:22px;height:20px;background:#5c89c2;"></div>
<div style="left:44px;top:441px;width:22px;height:20px;background:#5c89c2;"></div>
<svg style="left:44px;top:188px;" width="22" height="20" viewBox="0 0 22 20"><circle cx="11" cy="10" r="5.8" fill="#d6d6d6" stroke="#3a3a3a" stroke-width="1"/></svg>
<svg style="left:44px;top:211px;" width="22" height="20" viewBox="0 0 22 20"><circle cx="9" cy="8" r="5" fill="#d6d6d6" stroke="#3a3a3a" stroke-width="1"/><rect x="9.5" y="8.5" width="8" height="8" fill="#d6d6d6" stroke="#3a3a3a" stroke-width="1"/></svg>
<svg style="left:44px;top:234px;" width="22" height="20" viewBox="0 0 22 20"><path d="M11 2.5a5.2 5.2 0 0 1 3 9.5v2.5h-6v-2.5a5.2 5.2 0 0 1 3 -9.5z" fill="#d6d6d6" stroke="#3a3a3a" stroke-width="1"/><path d="M8.5 16h5M9.3 17.8h3.4" stroke="#d6d6d6" stroke-width="1.2"/></svg>
<svg style="left:44px;top:257px;" width="22" height="20" viewBox="0 0 22 20"><rect x="3.5" y="5" width="11" height="10" rx="1.5" fill="#d6d6d6" stroke="#3a3a3a" stroke-width="1"/><path d="M14.5 9l4 -3v8l-4 -3z" fill="#d6d6d6" stroke="#3a3a3a" stroke-width="1"/></svg>
<svg style="left:44px;top:280px;" width="22" height="20" viewBox="0 0 22 20"><path d="M4 3.5v13h14z" fill="#d6d6d6" stroke="#3a3a3a" stroke-width="1"/><path d="M7 10v4h4.5z" fill="#5c89c2" stroke="#3a3a3a" stroke-width="0.8"/></svg>
<svg style="left:44px;top:303px;" width="22" height="20" viewBox="0 0 22 20"><g fill="none" stroke="#d6d6d6" stroke-width="1.6"><path d="M3 5c3 -2.5 5 2.5 8 0s5 2.500 8 0"/><path d="M3 9c3 -2.5 5 2.5 8 0s5 2.500 8 0"/><path d="M3 13c3 -2.5 5 2.5 8 0s5 2.500 8 0"/><path d="M3 17c3 -2.5 5 2.5 8 0s5 2.500 8 0"/></g></svg>
<svg style="left:44px;top:326px;" width="22" height="20" viewBox="0 0 22 20"><rect x="3.5" y="2.500" width="15" height="15" fill="#3a3a3a" stroke="#3fc1c5" stroke-width="1.2"/><circle cx="10" cy="9" r="4.500" fill="#d6d6d6"/><rect x="10.5" y="9.500" width="6" height="6" fill="#d6d6d6" stroke="#3a3a3a" stroke-width="1"/></svg>
<svg style="left:44px;top:349px;" width="22" height="20" viewBox="0 0 22 20"><circle cx="11" cy="10" r="7" fill="#d6d6d6" stroke="#3a3a3a" stroke-width="1"/><path d="M11 6v6m-3 -2.500l3 3l3 -3" stroke="#3fc1c5" stroke-width="2" fill="none"/><path d="M6.500 14.500v2h9v-2" stroke="#3fc1c5" stroke-width="1.6" fill="none"/></svg>
<svg style="left:44px;top:372px;" width="22" height="20" viewBox="0 0 22 20"><circle cx="6" cy="5" r="2.600" fill="#d6d6d6" stroke="#3a3a3a" stroke-width="0.8"/><path d="M7.500 5l10.500 11l-12 -8.500z" fill="#d6d6d6" stroke="#3a3a3a" stroke-width="0.8"/></svg>
<svg style="left:44px;top:395px;" width="22" height="20" viewBox="0 0 22 20"><rect x="4" y="4" width="14" height="3.500" fill="#d6d6d6" stroke="#3a3a3a" stroke-width="0.8"/><rect x="5" y="7.500" width="12" height="8.500" fill="#d6d6d6" stroke="#3a3a3a" stroke-width="0.8"/><rect x="7" y="9.500" width="8" height="2" fill="#3a3a3a"/></svg>
<svg style="left:44px;top:418px;" width="22" height="20" viewBox="0 0 22 20"><g stroke="#d6d6d6" stroke-width="1.600"><path d="M11 3v14M5 6.500l12 7M17 6.500l-12 7"/></g><g fill="#d6d6d6" stroke="#3a3a3a" stroke-width="0.5"><circle cx="11" cy="3.500" r="1.800"/><circle cx="11" cy="16.500" r="1.800"/><circle cx="5.300" cy="6.800" r="1.800"/><circle cx="16.700" cy="6.800" r="1.800"/><circle cx="5.300" cy="13.200" r="1.800"/><circle cx="16.700" cy="13.200" r="1.800"/><circle cx="11" cy="10" r="2"/></g></svg>
<svg style="left:44px;top:441px;" width="22" height="20" viewBox="0 0 22 20"><path d="M3 10c3.500 -5.500 12.500 -5.500 16 0c-3.500 5.500 -12.500 5.500 -16 0z" fill="#d6d6d6" stroke="#3a3a3a" stroke-width="1"/><circle cx="11" cy="10" r="3" fill="#3a3a3a"/></svg>
<div style="left:46px;top:466px;width:18px;height:1px;background:#7a7a7a;"></div>
<svg style="left:48px;top:472px;" width="14" height="16" viewBox="0 0 14 16"><rect x="0.500" y="0.500" width="13" height="15" fill="#d6d6d6" stroke="#333" stroke-width="1"/><path d="M3 4h7M3 6.500h5M3 9h7M3 11.500h5" stroke="#333" stroke-width="1.200"/></svg>
<svg style="left:48px;top:495px;" width="14" height="16" viewBox="0 0 14 16"><rect x="0.500" y="0.500" width="13" height="15" fill="#d6d6d6"/></svg>
<svg style="left:48px;top:518px;" width="14" height="16" viewBox="0 0 14 16"><rect x="1" y="1" width="12" height="14" fill="#333" stroke="#d6d6d6" stroke-width="1.400"/><path d="M3.500 5h6M3.500 8h4M3.500 11h6" stroke="#d6d6d6" stroke-width="1.200"/></svg>
<div style="left:46px;top:541px;width:18px;height:1px;background:#7a7a7a;"></div>
<svg style="left:47px;top:546px;" width="18" height="18" viewBox="0 0 18 18"><path d="M1 1.500h14l-5.500 6v7l-3 -2v-5z" fill="#8c8c8c"/><circle cx="13" cy="13" r="3" fill="none" stroke="#9a9a9a" stroke-width="1.500" stroke-dasharray="1.5 0.9"/></svg>
<svg style="left:47px;top:569px;" width="18" height="18" viewBox="0 0 18 18"><path d="M2 2h13l-5.200 6v7l-2.600 -1.500v-5.500z" fill="#d6d6d6"/></svg>
<svg style="left:47px;top:593px;" width="18" height="16" viewBox="0 0 18 16"><path d="M1.500 14.500v-10h3v-2.500h3v2.500h3v-2.500h3v2.500h3v10z" fill="#333" stroke="#d6d6d6" stroke-width="1.400"/></svg>
<div style="left:69px;top:185px;width:253px;height:720px;border:1px solid #525252;background:#444;"></div>
<div style="left:70px;top:186px;width:187px;height:19px;border:1px solid #5a5a5a;border-top-color:#3a3a3a;background:#444;"></div>
<div style="left:258px;top:186px;width:63px;height:19px;border:1px solid #5a5a5a;border-top-color:#3a3a3a;background:#444;"></div>
<div style="left:71px;top:187.5px;height:16px;line-height:16px;font-size:11px;color:#ececec;white-space:nowrap;letter-spacing:-0.28px;">Name (Sorted Descending Age)</div>
<div style="left:260px;top:187.5px;height:16px;line-height:16px;font-size:11px;color:#ececec;white-space:nowrap;letter-spacing:-0.2px;">Frozen</div>
<div style="left:77px;top:215px;width:1px;height:54px;background-image:linear-gradient(#777 50%,transparent 50%);background-size:1px 2px;"></div>
<div style="left:119px;top:206px;width:138px;height:18px;background:#808080;"></div>
<div style="left:258px;top:206px;width:63px;height:18px;background:#808080;"></div>
<div style="left:78px;top:215px;width:9px;height:1px;background-image:linear-gradient(90deg,#777 50%,transparent 50%);background-size:2px 1px;"></div>
<svg style="left:88px;top:210px;" width="14" height="10" viewBox="0 0 14 10"><path d="M0.500 5c3 -5 10 -5 13 0c-3 5 -10 5 -13 0z" fill="#d6d6d6" stroke="#2e2e2e" stroke-width="0.800"/><circle cx="7" cy="4.600" r="2.600" fill="#2e2e2e"/><circle cx="7.800" cy="3.800" r="0.900" fill="#d6d6d6"/></svg>
<svg style="left:104px;top:209px;" width="12" height="12" viewBox="0 0 12 12"><circle cx="6" cy="5.600" r="5" fill="#d6d6d6"/></svg>
<div style="left:122px;top:207.0px;height:16px;line-height:16px;font-size:11px;color:#f0f0f0;white-space:nowrap;letter-spacing:-0.1px;">Sphere001</div>
<svg style="left:283px;top:209px;" width="12" height="12" viewBox="0 0 12 12"><g stroke="#3e3e3e" stroke-width="1.100"><path d="M6 0.500v11M1.200 3.200l9.600 5.600M10.800 3.200l-9.600 5.600"/><path d="M4.300 1.500l1.700 1.500l1.700 -1.500M4.300 10.500l1.700 -1.500l1.700 1.500" fill="none"/></g></svg>
<div style="left:119px;top:224px;width:138px;height:18px;background:#5c5c5c;"></div>
<div style="left:258px;top:224px;width:63px;height:18px;background:#5c5c5c;"></div>
<div style="left:78px;top:233px;width:9px;height:1px;background-image:linear-gradient(90deg,#777 50%,transparent 50%);background-size:2px 1px;"></div>
<svg style="left:88px;top:228px;" width="14" height="10" viewBox="0 0 14 10"><path d="M0.500 5c3 -5 10 -5 13 0c-3 5 -10 5 -13 0z" fill="#d6d6d6" stroke="#2e2e2e" stroke-width="0.800"/><circle cx="7" cy="4.600" r="2.600" fill="#2e2e2e"/><circle cx="7.800" cy="3.800" r="0.900" fill="#d6d6d6"/></svg>
<svg style="left:104px;top:227px;" width="12" height="12" viewBox="0 0 12 12"><circle cx="6" cy="5.600" r="5" fill="#d6d6d6"/></svg>
<div style="left:122px;top:225.0px;height:16px;line-height:16px;font-size:11px;color:#f0f0f0;white-space:nowrap;letter-spacing:-0.1px;">Sphere002</div>
<svg style="left:283px;top:227px;" width="12" height="12" viewBox="0 0 12 12"><g stroke="#3e3e3e" stroke-width="1.100"><path d="M6 0.500v11M1.200 3.200l9.600 5.600M10.800 3.200l-9.600 5.600"/><path d="M4.300 1.500l1.700 1.500l1.700 -1.500M4.300 10.500l1.700 -1.500l1.700 1.500" fill="none"/></g></svg>
<div style="left:119px;top:242px;width:138px;height:18px;background:#505050;"></div>
<div style="left:258px;top:242px;width:63px;height:18px;background:#505050;"></div>
<div style="left:78px;top:251px;width:9px;height:1px;background-image:linear-gradient(90deg,#777 50%,transparent 50%);background-size:2px 1px;"></div>
<svg style="left:88px;top:246px;" width="14" height="10" viewBox="0 0 14 10"><path d="M0.500 5c3 -5 10 -5 13 0c-3 5 -10 5 -13 0z" fill="#d6d6d6" stroke="#2e2e2e" stroke-width="0.800"/><circle cx="7" cy="4.600" r="2.600" fill="#2e2e2e"/><circle cx="7.800" cy="3.800" r="0.900" fill="#d6d6d6"/></svg>
<svg style="left:104px;top:245px;" width="12" height="12" viewBox="0 0 12 12"><circle cx="6" cy="5.600" r="5" fill="#d6d6d6"/></svg>
<div style="left:122px;top:243.0px;height:16px;line-height:16px;font-size:11px;color:#f0f0f0;white-space:nowrap;letter-spacing:-0.1px;">Sphere003</div>
<svg style="left:283px;top:245px;" width="12" height="12" viewBox="0 0 12 12"><g stroke="#3e3e3e" stroke-width="1.100"><path d="M6 0.500v11M1.200 3.200l9.600 5.600M10.800 3.200l-9.600 5.600"/><path d="M4.300 1.500l1.700 1.500l1.700 -1.500M4.300 10.500l1.700 -1.500l1.700 1.500" fill="none"/></g></svg>
<div style="left:119px;top:260px;width:138px;height:18px;background:#5c5c5c;"></div>
<div style="left:258px;top:260px;width:63px;height:18px;background:#5c5c5c;"></div>
<div style="left:78px;top:269px;width:9px;height:1px;background-image:linear-gradient(90deg,#777 50%,transparent 50%);background-size:2px 1px;"></div>
<svg style="left:88px;top:264px;" width="14" height="10" viewBox="0 0 14 10"><path d="M0.500 5c3 -5 10 -5 13 0c-3 5 -10 5 -13 0z" fill="#d6d6d6" stroke="#2e2e2e" stroke-width="0.800"/><circle cx="7" cy="4.600" r="2.600" fill="#2e2e2e"/><circle cx="7.800" cy="3.800" r="0.900" fill="#d6d6d6"/></svg>
<svg style="left:104px;top:263px;" width="12" height="12" viewBox="0 0 12 12"><circle cx="6" cy="5.600" r="5" fill="#d6d6d6"/></svg>
<div style="left:122px;top:261.0px;height:16px;line-height:16px;font-size:11px;color:#f0f0f0;white-space:nowrap;letter-spacing:-0.1px;">Sphere004</div>
<svg style="left:283px;top:263px;" width="12" height="12" viewBox="0 0 12 12"><g stroke="#3e3e3e" stroke-width="1.100"><path d="M6 0.500v11M1.200 3.200l9.600 5.600M10.800 3.200l-9.600 5.600"/><path d="M4.300 1.500l1.700 1.500l1.700 -1.500M4.300 10.500l1.700 -1.500l1.700 1.500" fill="none"/></g></svg>
<div style="left:48px;top:907px;width:145px;height:23px;border:1px solid #5e5e5e;background:#444;"></div>
<div style="left:50px;top:909.0px;height:16px;line-height:16px;font-size:12px;color:#f0f000;white-space:nowrap;">Default</div>
<svg style="left:196px;top:915px;" width="8" height="5" viewBox="0 0 8 5"><path d="M0 0.500h7l-3.500 4z" fill="#111"/></svg>
<div style="left:209px;top:907px;width:2px;height:23px;background:#2a2a2a;"></div>
<svg style="left:216px;top:909px;" width="18" height="20" viewBox="0 0 18 20"><path d="M9 2l7 3.500l-7 3.500l-7 -3.500z" fill="#d6d6d6"/><path d="M2 9.500l7 3.500l7 -3.500M2 13.500l7 3.500l7 -3.500" fill="none" stroke="#d6d6d6" stroke-width="1.800"/></svg>
<div style="left:237px;top:906px;width:24px;height:24px;background:#5c89c2;"></div>
<svg style="left:239px;top:908px;" width="20" height="20" viewBox="0 0 20 20"><rect x="5" y="2.500" width="10" height="6" fill="#d6d6d6" stroke="#333" stroke-width="1"/><path d="M10 8.500v3M4 15v-3.500h12v3.500" fill="none" stroke="#d6d6d6" stroke-width="1.600"/><rect x="2" y="14" width="4.500" height="4" fill="#d6d6d6" stroke="#333" stroke-width="0.800"/><rect x="13.500" y="14" width="4.500" height="4" fill="#d6d6d6" stroke="#333" stroke-width="0.800"/></svg>
<div style="left:263px;top:907px;width:2px;height:23px;background:#2a2a2a;"></div>
<div style="left:311px;top:903.0px;height:16px;line-height:16px;font-size:12px;color:#5a5aa8;white-space:nowrap;">»</div>
<svg style="left:0px;top:0px;z-index:1;" width="1920" height="1040" viewBox="0 0 1920 1040"><defs>
<linearGradient id="vbg" x1="0" y1="0" x2="0" y2="1"><stop offset="0" stop-color="#1a1a1a"/><stop offset="0.25" stop-color="#292929"/><stop offset="0.515" stop-color="#383838"/><stop offset="0.764" stop-color="#444444"/><stop offset="1" stop-color="#4c4c4c"/></linearGradient>
<radialGradient id="g1" gradientUnits="userSpaceOnUse" cx="616" cy="283" r="215"><stop offset="0" stop-color="#f2ffff"/><stop offset="0.28" stop-color="#c6dada"/><stop offset="0.6" stop-color="#8fa5a5"/><stop offset="1" stop-color="#4c5e5e"/></radialGradient>
<radialGradient id="g1b" gradientUnits="userSpaceOnUse" cx="0" cy="0" r="160" gradientTransform="translate(586 310) scale(1 0.9)"><stop offset="0.6" stop-color="#0a1010" stop-opacity="0"/><stop offset="0.7" stop-color="#0a1010" stop-opacity="0.55"/><stop offset="0.785" stop-color="#050a0a" stop-opacity="0.95"/><stop offset="0.835" stop-color="#050a0a" stop-opacity="0.9"/><stop offset="0.875" stop-color="#b4c6c6" stop-opacity="0.9"/><stop offset="1" stop-color="#b4c6c6" stop-opacity="0.9"/></radialGradient>
<linearGradient id="g2" gradientUnits="userSpaceOnUse" x1="877" y1="381" x2="758" y2="481"><stop offset="0" stop-color="#1f9c66"/><stop offset="0.07" stop-color="#4fbf90"/><stop offset="0.15" stop-color="#1f9c66"/><stop offset="0.5" stop-color="#127a50"/><stop offset="0.85" stop-color="#0b5e3c"/><stop offset="1" stop-color="#084a2f"/></linearGradient>
<radialGradient id="g3" gradientUnits="userSpaceOnUse" cx="1075" cy="640" r="190" gradientTransform="translate(0 288) scale(1 0.55)"><stop offset="0" stop-color="#86e2bb"/><stop offset="0.25" stop-color="#4fcb96"/><stop offset="0.6" stop-color="#2dba82"/><stop offset="1" stop-color="#27ad77"/></radialGradient>
<linearGradient id="g4" gradientUnits="userSpaceOnUse" x1="1238" y1="647" x2="1334" y2="688"><stop offset="0" stop-color="#084a2e"/><stop offset="0.07" stop-color="#0e6a44"/><stop offset="0.17" stop-color="#52c998"/><stop offset="0.3" stop-color="#29b07a"/><stop offset="1" stop-color="#1e9f6b"/></linearGradient>
<linearGradient id="gfade" gradientUnits="userSpaceOnUse" x1="0" y1="300" x2="0" y2="900"><stop offset="0" stop-color="#fff"/><stop offset="0.45" stop-color="#bbb"/><stop offset="1" stop-color="#000"/></linearGradient><mask id="gmask" maskUnits="userSpaceOnUse" x="300" y="100" width="1300" height="900"><rect x="300" y="100" width="1300" height="900" fill="url(#gfade)"/></mask>
<filter id="bl3" x="-20%" y="-20%" width="140%" height="140%"><feGaussianBlur stdDeviation="3"/></filter><filter id="bl4" x="-20%" y="-20%" width="140%" height="140%"><feGaussianBlur stdDeviation="4.5"/></filter><filter id="bl2" x="-20%" y="-20%" width="140%" height="140%"><feGaussianBlur stdDeviation="2"/></filter>
</defs><rect x="327" y="124" width="1217" height="808" fill="#84722e"/><rect x="329" y="126" width="1213" height="804" fill="url(#vbg)"/><clipPath id="vclip"><rect x="329" y="126" width="1213" height="804"/></clipPath><g clip-path="url(#vclip)"><g stroke-width="1" mask="url(#gmask)"><line x1="770.9" y1="891.6" x2="231.8" y2="519.5" stroke="#6a6a6a" stroke-opacity="0.55"/><line x1="770.9" y1="891.6" x2="1226.0" y2="438.5" stroke="#6a6a6a" stroke-opacity="0.55"/><line x1="814.6" y1="848.1" x2="277.2" y2="493.1" stroke="#6a6a6a" stroke-opacity="0.55"/><line x1="722.5" y1="858.2" x2="1184.2" y2="420.7" stroke="#6a6a6a" stroke-opacity="0.55"/><line x1="856.0" y1="806.9" x2="320.8" y2="467.8" stroke="#6a6a6a" stroke-opacity="0.55"/><line x1="675.9" y1="826.1" x2="1143.5" y2="403.4" stroke="#6a6a6a" stroke-opacity="0.55"/><line x1="895.4" y1="767.7" x2="362.7" y2="443.5" stroke="#6a6a6a" stroke-opacity="0.55"/><line x1="631.2" y1="795.2" x2="1104.0" y2="386.6" stroke="#6a6a6a" stroke-opacity="0.55"/><line x1="932.8" y1="730.4" x2="402.9" y2="420.2" stroke="#6a6a6a" stroke-opacity="0.55"/><line x1="588.1" y1="765.4" x2="1065.6" y2="370.3" stroke="#6a6a6a" stroke-opacity="0.55"/><line x1="968.5" y1="695.0" x2="441.6" y2="397.7" stroke="#6a6a6a" stroke-opacity="0.55"/><line x1="546.5" y1="736.8" x2="1028.3" y2="354.4" stroke="#6a6a6a" stroke-opacity="0.55"/><line x1="1002.4" y1="661.1" x2="478.8" y2="376.1" stroke="#6a6a6a" stroke-opacity="0.55"/><line x1="506.5" y1="709.1" x2="991.9" y2="338.9" stroke="#6a6a6a" stroke-opacity="0.55"/><line x1="1034.8" y1="628.9" x2="514.7" y2="355.3" stroke="#000000" stroke-opacity="1"/><line x1="467.9" y1="682.5" x2="956.5" y2="323.8" stroke="#000000" stroke-opacity="1"/><line x1="1065.8" y1="598.0" x2="549.2" y2="335.2" stroke="#6a6a6a" stroke-opacity="0.55"/><line x1="430.7" y1="656.8" x2="922.0" y2="309.2" stroke="#6a6a6a" stroke-opacity="0.55"/><line x1="1095.4" y1="568.5" x2="582.6" y2="315.9" stroke="#6a6a6a" stroke-opacity="0.55"/><line x1="394.7" y1="631.9" x2="888.5" y2="294.9" stroke="#6a6a6a" stroke-opacity="0.55"/><line x1="1123.8" y1="540.3" x2="614.7" y2="297.2" stroke="#6a6a6a" stroke-opacity="0.55"/><line x1="359.9" y1="607.9" x2="855.7" y2="280.9" stroke="#6a6a6a" stroke-opacity="0.55"/><line x1="1150.9" y1="513.3" x2="645.8" y2="279.2" stroke="#6a6a6a" stroke-opacity="0.55"/><line x1="326.3" y1="584.7" x2="823.9" y2="267.4" stroke="#6a6a6a" stroke-opacity="0.55"/><line x1="1177.0" y1="487.3" x2="675.8" y2="261.8" stroke="#6a6a6a" stroke-opacity="0.55"/><line x1="293.8" y1="562.3" x2="792.8" y2="254.1" stroke="#6a6a6a" stroke-opacity="0.55"/><line x1="1202.0" y1="462.4" x2="704.8" y2="244.9" stroke="#6a6a6a" stroke-opacity="0.55"/><line x1="262.3" y1="540.5" x2="762.4" y2="241.2" stroke="#6a6a6a" stroke-opacity="0.55"/><line x1="1226.0" y1="438.5" x2="732.8" y2="228.6" stroke="#6a6a6a" stroke-opacity="0.55"/><line x1="231.8" y1="519.5" x2="732.8" y2="228.6" stroke="#6a6a6a" stroke-opacity="0.55"/></g><clipPath id="cp1"><path d="M586.5 197.5L593.0 197.7L599.5 198.2L605.9 199.0L612.3 200.2L618.6 201.7L624.8 203.6L630.9 205.7L636.9 208.2L642.8 211.0L648.5 214.1L654.0 217.5L659.4 221.2L664.5 225.1L669.5 229.4L674.2 233.8L678.6 238.5L682.9 243.5L686.8 248.6L690.5 254.0L693.9 259.5L697.0 265.2L699.8 271.1L702.3 277.1L704.4 283.2L706.3 289.4L707.8 295.7L709.0 302.1L709.8 308.5L710.3 315.0L710.5 321.5L710.3 328.0L709.8 334.5L709.0 340.9L707.8 347.3L706.3 353.6L704.4 359.8L702.3 365.9L699.8 371.9L697.0 377.8L693.9 383.5L690.5 389.0L686.8 394.4L682.9 399.5L678.6 404.5L674.2 409.2L669.5 413.6L664.5 417.9L659.4 421.8L654.0 425.5L648.5 428.9L642.8 432.0L636.9 434.8L630.9 437.3L624.8 439.4L618.6 441.3L612.3 442.8L605.9 444.0L599.5 444.8L593.0 445.3L586.5 445.5L580.0 445.3L573.5 444.8L567.1 444.0L560.7 442.8L554.4 441.3L548.2 439.4L542.1 437.3L536.1 434.8L530.2 432.0L524.5 428.9L519.0 425.5L513.6 421.8L508.5 417.9L503.5 413.6L498.8 409.2L494.4 404.5L490.1 399.5L486.2 394.4L482.5 389.0L479.1 383.5L476.0 377.8L473.2 371.9L470.7 365.9L468.6 359.8L466.7 353.6L465.2 347.3L464.0 340.9L463.2 334.5L462.7 328.0L462.5 321.5L462.7 315.0L463.2 308.5L464.0 302.1L465.2 295.7L466.7 289.4L468.6 283.2L470.7 277.1L473.2 271.1L476.0 265.2L479.1 259.5L482.5 254.0L486.2 248.6L490.1 243.5L494.4 238.5L498.8 233.8L503.5 229.4L508.5 225.1L513.6 221.2L519.0 217.5L524.5 214.1L530.2 211.0L536.1 208.2L542.1 205.7L548.2 203.6L554.4 201.7L560.7 200.2L567.1 199.0L573.5 198.2L580.0 197.7Z"/></clipPath><path d="M586.5 197.5L593.0 197.7L599.5 198.2L605.9 199.0L612.3 200.2L618.6 201.7L624.8 203.6L630.9 205.7L636.9 208.2L642.8 211.0L648.5 214.1L654.0 217.5L659.4 221.2L664.5 225.1L669.5 229.4L674.2 233.8L678.6 238.5L682.9 243.5L686.8 248.6L690.5 254.0L693.9 259.5L697.0 265.2L699.8 271.1L702.3 277.1L704.4 283.2L706.3 289.4L707.8 295.7L709.0 302.1L709.8 308.5L710.3 315.0L710.5 321.5L710.3 328.0L709.8 334.5L709.0 340.9L707.8 347.3L706.3 353.6L704.4 359.8L702.3 365.9L699.8 371.9L697.0 377.8L693.9 383.5L690.5 389.0L686.8 394.4L682.9 399.5L678.6 404.5L674.2 409.2L669.5 413.6L664.5 417.9L659.4 421.8L654.0 425.5L648.5 428.9L642.8 432.0L636.9 434.8L630.9 437.3L624.8 439.4L618.6 441.3L612.3 442.8L605.9 444.0L599.5 444.8L593.0 445.3L586.5 445.5L580.0 445.3L573.5 444.8L567.1 444.0L560.7 442.8L554.4 441.3L548.2 439.4L542.1 437.3L536.1 434.8L530.2 432.0L524.5 428.9L519.0 425.5L513.6 421.8L508.5 417.9L503.5 413.6L498.8 409.2L494.4 404.5L490.1 399.5L486.2 394.4L482.5 389.0L479.1 383.5L476.0 377.8L473.2 371.9L470.7 365.9L468.6 359.8L466.7 353.6L465.2 347.3L464.0 340.9L463.2 334.5L462.7 328.0L462.5 321.5L462.7 315.0L463.2 308.5L464.0 302.1L465.2 295.7L466.7 289.4L468.6 283.2L470.7 277.1L473.2 271.1L476.0 265.2L479.1 259.5L482.5 254.0L486.2 248.6L490.1 243.5L494.4 238.5L498.8 233.8L503.5 229.4L508.5 225.1L513.6 221.2L519.0 217.5L524.5 214.1L530.2 211.0L536.1 208.2L542.1 205.7L548.2 203.6L554.4 201.7L560.7 200.2L567.1 199.0L573.5 198.2L580.0 197.7Z" fill="url(#g1)"/><g clip-path="url(#cp1)"><g filter="url(#bl3)"><path fill="#060c0c" fill-opacity="0.93" d="M462 321.500A124.500 90 0 0 0 711 321.500L750 321.500V480H430V321.500Z"/></g><g filter="url(#bl2)"><path fill="#b8caca" fill-opacity="0.95" d="M460 321.500A126.500 108 0 0 0 713 321.500L750 321.500V480H430V321.500Z"/></g></g><path d="M569.9 216.5L574.8 212.8L579.7 209.6L584.7 206.9L589.7 204.6L594.7 202.9L599.7 201.6L604.5 200.9L609.4 200.7L614.1 201.0L618.7 201.8M569.9 216.5L573.4 212.6L577.1 209.0L580.7 206.0L584.4 203.5L588.1 201.5L591.8 200.0L595.5 199.0L599.1 198.5L602.7 198.6M569.9 216.5L572.0 212.4L574.1 208.8L576.3 205.7L578.6 203.0L580.9 200.9L583.2 199.3L585.5 198.2L587.8 197.6M569.9 216.5L570.4 212.5L571.0 208.9L571.7 205.8L572.4 203.2L573.2 201.1L574.1 199.6L575.0 198.5L575.9 198.0M569.9 216.5L568.8 212.7L567.9 209.3L567.0 206.4L566.2 204.1L565.5 202.2L564.9 200.8L564.3 199.9L563.9 199.6M569.9 216.5L567.3 213.1L564.8 210.1L562.4 207.5L560.1 205.5L558.0 204.0L555.9 202.9L554.0 202.4L552.2 202.4M569.9 216.5L565.9 213.6L562.0 211.1L558.1 209.1L554.5 207.5L550.9 206.5L547.5 205.9L544.3 205.9L541.2 206.3M569.9 216.5L564.6 214.2L559.4 212.3L554.3 210.9L549.4 210.0L544.6 209.6L540.0 209.6L535.6 210.1L531.5 211.1L527.5 212.6M569.9 216.5L563.5 214.9L557.3 213.8L551.1 213.1L545.2 212.9L539.4 213.2L533.8 213.9L528.4 215.1L523.3 216.7L518.4 218.8L513.8 221.3L509.6 224.2M569.9 216.5L562.7 215.7L555.6 215.4L548.7 215.5L541.9 216.1L535.3 217.1L528.9 218.5L522.8 220.5L516.9 222.8L511.4 225.6L506.1 228.7L501.2 232.3L496.7 236.3L492.6 240.6M569.9 216.5L562.1 216.6L554.5 217.1L547.0 218.0L539.7 219.4L532.6 221.2L525.7 223.5L519.1 226.1L512.7 229.2L506.7 232.7L501.0 236.5L495.7 240.7L490.8 245.3L486.2 250.2L482.1 255.4L478.5 260.9L475.3 266.6M569.9 216.5L561.9 217.4L554.0 218.7L546.3 220.5L538.7 222.7L531.3 225.4L524.2 228.4L517.3 231.8L510.8 235.7L504.5 239.8L498.7 244.4L493.1 249.3L488.0 254.4L483.3 259.9L479.1 265.6L475.3 271.6L472.0 277.8L469.2 284.2L466.8 290.7L465.0 297.4L463.7 304.1M569.9 216.5L561.9 218.2L554.1 220.4L546.4 223.0L538.9 226.0L531.6 229.4L524.5 233.2L517.7 237.4L511.2 241.9L505.0 246.8L499.2 252.0L493.7 257.5L488.6 263.3L484.0 269.3L479.8 275.6L476.0 282.0L472.7 288.6L469.9 295.4L467.6 302.3L465.8 309.2L464.6 316.2L463.8 323.3L463.6 330.3L463.9 337.3L464.7 344.2L466.1 351.0M569.9 216.5L562.3 219.0L554.8 221.9L547.5 225.2L540.4 229.0L533.4 233.1L526.7 237.6L520.2 242.5L514.0 247.7L508.1 253.3L502.5 259.1L497.4 265.2L492.5 271.5L488.1 278.1L484.2 284.8L480.6 291.7L477.5 298.7L474.9 305.9L472.7 313.0L471.1 320.3L469.9 327.5L469.2 334.7L469.1 341.8L469.4 348.9L470.3 355.8L471.6 362.6L473.4 369.2L475.7 375.6L478.5 381.8L481.8 387.8M569.9 216.5L563.0 219.7L556.1 223.2L549.5 227.3L542.9 231.7L536.6 236.4L530.5 241.6L524.6 247.1L519.0 252.9L513.7 259.0L508.6 265.4L503.9 272.0L499.6 278.9L495.7 285.9L492.1 293.0L488.9 300.3L486.2 307.7L483.9 315.1L482.0 322.6L480.6 330.0L479.6 337.5L479.1 344.8L479.0 352.1L479.4 359.2L480.3 366.2L481.6 372.9L483.3 379.5L485.5 385.8L488.2 391.8L491.2 397.5L494.7 402.9L498.6 408.0L502.8 412.7L507.4 417.0M569.9 216.5L563.9 220.2L558.0 224.4L552.2 228.9L546.6 233.9L541.1 239.2L535.9 244.9L530.8 250.9L526.0 257.2L521.5 263.8L517.2 270.7L513.2 277.7L509.6 284.9L506.3 292.3L503.3 299.9L500.6 307.5L498.4 315.2L496.5 322.9L495.0 330.6L493.9 338.2L493.2 345.8L492.9 353.3L493.0 360.6L493.5 367.8L494.3 374.8L495.6 381.5L497.3 388.0L499.4 394.2L501.8 400.1L504.6 405.7L507.7 410.9L511.2 415.7L515.0 420.1L519.1 424.1L523.5 427.7L528.2 430.8M569.9 216.5L565.0 220.7L560.3 225.2L555.7 230.2L551.2 235.6L546.8 241.3L542.6 247.4L538.6 253.8L534.8 260.5L531.3 267.5L527.9 274.7L524.9 282.0L522.0 289.6L519.5 297.3L517.3 305.1L515.3 312.9L513.6 320.8L512.3 328.8L511.3 336.6L510.6 344.4L510.2 352.1L510.2 359.7L510.4 367.1L511.0 374.4L512.0 381.4L513.2 388.1L514.8 394.5L516.6 400.7L518.8 406.5L521.3 411.9L524.0 417.0L527.0 421.6L530.3 425.8L533.8 429.6L537.5 432.9L541.4 435.7L545.6 438.1L549.9 439.9M569.9 216.5L566.4 220.9L563.0 225.8L559.7 231.0L556.5 236.7L553.4 242.7L550.5 249.1L547.7 255.7L545.1 262.6L542.7 269.8L540.4 277.3L538.4 284.9L536.5 292.6L534.9 300.5L533.5 308.5L532.3 316.5L531.4 324.5L530.7 332.6L530.2 340.6L530.0 348.5L530.0 356.3L530.3 363.9L530.8 371.4L531.5 378.6L532.5 385.6L533.7 392.4L535.1 398.8L536.7 404.9L538.6 410.6L540.7 416.0L542.9 420.9L545.4 425.4L548.0 429.5L550.8 433.1L553.8 436.3L556.8 438.9L560.0 441.1L563.4 442.7L566.8 443.8M569.9 216.5L567.9 221.1L565.9 226.0L564.1 231.4L562.3 237.2L560.6 243.3L559.1 249.7L557.7 256.5L556.4 263.6L555.2 270.8L554.2 278.4L553.3 286.0L552.5 293.9L551.9 301.9L551.4 309.9L551.1 318.0L550.9 326.1L550.9 334.2L551.1 342.2L551.4 350.2L551.8 358.0L552.4 365.7L553.1 373.2L554.0 380.4L555.0 387.4L556.2 394.2L557.5 400.6L558.9 406.6L560.4 412.4L562.0 417.7L563.8 422.6L565.6 427.1L567.6 431.1L569.6 434.6L571.7 437.7L573.8 440.3L576.0 442.4L578.3 443.9L580.5 444.9L582.8 445.4M569.9 216.5L569.4 221.0L569.0 225.9L568.7 231.3L568.4 237.0L568.3 243.1L568.2 249.5L568.2 256.2L568.3 263.2L568.4 270.4L568.6 277.9L568.9 285.6L569.3 293.4L569.8 301.3L570.3 309.3L570.9 317.4L571.5 325.5L572.3 333.6L573.0 341.6L573.9 349.5L574.8 357.3L575.7 365.0L576.7 372.4L577.7 379.7L578.8 386.7L579.9 393.4L581.0 399.9L582.2 405.9L583.4 411.7L584.6 417.0L585.8 421.9L587.0 426.4L588.2 430.5L589.3 434.0L590.5 437.1L591.7 439.7L592.8 441.8L593.9 443.4L595.0 444.5L596.1 445.0M569.9 216.5L571.0 220.8L572.2 225.5L573.4 230.6L574.7 236.1L576.0 242.0L577.4 248.2L578.8 254.8L580.3 261.6L581.8 268.6L583.3 275.9L584.8 283.4L586.3 291.1L587.9 298.9L589.4 306.8L590.9 314.7L592.4 322.7L593.8 330.7L595.3 338.6L596.7 346.4L598.0 354.2L599.3 361.8L600.6 369.2L601.8 376.5L602.9 383.5L603.9 390.2L604.9 396.6L605.8 402.8L606.6 408.5L607.4 413.9L608.0 418.9L608.6 423.5L609.0 427.7L609.4 431.4L609.6 434.6L609.8 437.3L609.8 439.6L609.8 441.3L609.7 442.5L609.4 443.2M569.9 216.5L572.5 220.4L575.2 224.8L578.0 229.5L580.7 234.7L583.6 240.2L586.4 246.1L589.2 252.3L592.0 258.8L594.8 265.5L597.6 272.5L600.3 279.7L602.9 287.1L605.5 294.7L608.0 302.3L610.4 310.0L612.7 317.8L614.9 325.6L616.9 333.4L618.9 341.1L620.7 348.8L622.3 356.3L623.8 363.7L625.2 370.9L626.3 377.9L627.3 384.6L628.2 391.1L628.8 397.3L629.3 403.1L629.6 408.6L629.7 413.7L629.6 418.5L629.3 422.8L628.9 426.7L628.2 430.1L627.4 433.1L626.4 435.6L625.3 437.6L623.9 439.1L622.5 440.1M569.9 216.5L573.9 219.9L578.1 223.8L582.2 228.0L586.4 232.7L590.6 237.7L594.8 243.1L598.9 248.8L603.0 254.9L607.0 261.2L610.9 267.8L614.7 274.6L618.4 281.6L622.0 288.8L625.4 296.1L628.6 303.6L631.7 311.1L634.5 318.6L637.2 326.2L639.6 333.8L641.8 341.3L643.8 348.7L645.5 356.0L647.0 363.1L648.2 370.1L649.2 376.8L649.9 383.4L650.3 389.6L650.4 395.6L650.3 401.2L649.9 406.6L649.2 411.5L648.3 416.1L647.1 420.2L645.6 424.0L643.9 427.2L641.9 430.1L639.7 432.5L637.3 434.4L634.6 435.8M569.9 216.5L575.2 219.3L580.6 222.5L586.0 226.1L591.5 230.2L596.9 234.6L602.2 239.4L607.5 244.6L612.7 250.1L617.8 255.8L622.8 261.9L627.6 268.2L632.2 274.8L636.6 281.6L640.9 288.5L644.8 295.5L648.6 302.7L652.0 310.0L655.2 317.3L658.1 324.6L660.7 331.9L663.0 339.2L664.9 346.4L666.5 353.5L667.8 360.4L668.7 367.2L669.3 373.8L669.5 380.2L669.3 386.3L668.8 392.1L668.0 397.6L666.8 402.9L665.2 407.7L663.3 412.2L661.1 416.3L658.6 420.0L655.7 423.3L652.6 426.1L649.2 428.5M569.9 216.5L576.3 218.6L582.8 221.0L589.3 224.0L595.7 227.3L602.2 231.0L608.5 235.1L614.8 239.6L621.0 244.5L627.0 249.7L632.8 255.1L638.4 260.9L643.8 266.9L649.0 273.2L653.9 279.6L658.5 286.3L662.8 293.1L666.8 300.0L670.4 307.0L673.7 314.1L676.6 321.2L679.1 328.3L681.2 335.4L682.9 342.4L684.2 349.3L685.1 356.1L685.5 362.8L685.6 369.2L685.2 375.5L684.4 381.6L683.1 387.4L681.5 392.9L679.4 398.1L677.0 402.9L674.1 407.5L670.9 411.6L667.3 415.4M569.9 216.5L577.1 217.8L584.4 219.5L591.7 221.6L599.0 224.1L606.2 227.1L613.4 230.5L620.4 234.2L627.3 238.4L634.0 242.9L640.5 247.7L646.8 252.8L652.8 258.3L658.5 264.0L663.9 270.0L669.0 276.1L673.8 282.5L678.1 289.0L682.1 295.7L685.7 302.5L688.8 309.4L691.5 316.3L693.7 323.2L695.5 330.2L696.9 337.1L697.7 343.9L698.1 350.7L698.0 357.3L697.4 363.7L696.4 370.0L694.8 376.1L692.8 381.9L690.4 387.5L687.5 392.8L684.2 397.8M569.9 216.5L577.7 216.9L585.5 217.8L593.4 219.1L601.2 220.8L608.9 223.0L616.6 225.6L624.1 228.6L631.5 232.0L638.7 235.8L645.6 239.9L652.3 244.4L658.7 249.2L664.8 254.4L670.6 259.8L676.0 265.5L681.1 271.4L685.7 277.6L689.9 283.9L693.6 290.4L696.9 297.0L699.8 303.7L702.1 310.5L703.9 317.4L705.3 324.3L706.1 331.1L706.4 337.9L706.2 344.7L705.5 351.3L704.3 357.9L702.6 364.2L700.4 370.4M569.9 216.5L577.9 216.1L586.0 216.1L594.1 216.6L602.2 217.5L610.2 218.8L618.1 220.6L625.8 222.9L633.4 225.5L640.8 228.6L648.0 232.0L654.9 235.9L661.5 240.1L667.7 244.7L673.7 249.5L679.2 254.7L684.4 260.2L689.1 266.0L693.4 272.0L697.3 278.1L700.7 284.5L703.5 291.1L705.9 297.7L707.8 304.5L709.1 311.4L710.0 318.2L710.3 325.1L710.0 332.0M569.9 216.5L577.9 215.3L585.9 214.5L594.0 214.1L602.0 214.2L609.9 214.8L617.7 215.8L625.5 217.3L633.0 219.2L640.3 221.6L647.4 224.4L654.3 227.6L660.9 231.2L667.1 235.2L673.0 239.6L678.5 244.3L683.7 249.4L688.4 254.7L692.6 260.4L696.5 266.3L699.8 272.4L702.7 278.8L705.1 285.3M569.9 216.5L577.5 214.5L585.2 212.9L592.9 211.8L600.5 211.2L608.1 211.1L615.6 211.4L623.0 212.2L630.2 213.4L637.3 215.1L644.1 217.3L650.6 219.9L656.9 223.0L662.9 226.5L668.6 230.4L673.9 234.6L678.9 239.3L683.4 244.3L687.5 249.6M569.9 216.5L576.9 213.8L583.9 211.6L590.9 209.8L597.9 208.5L604.9 207.7L611.8 207.4L618.6 207.6L625.2 208.3L631.7 209.4L638.0 211.0L644.0 213.1L649.9 215.7L655.4 218.7L660.7 222.2M569.9 216.5L575.9 213.3L582.0 210.5L588.2 208.1L594.3 206.3L600.4 205.0L606.4 204.1L612.3 203.8L618.2 203.9L623.9 204.6L629.4 205.8L634.8 207.4L639.9 209.6M584.7 206.9L583.5 206.5L582.1 206.3L580.7 206.0L579.3 205.9L577.8 205.7L576.3 205.7L574.8 205.7L573.3 205.7L571.7 205.8L570.1 206.0L568.6 206.2L567.0 206.4L565.4 206.8L563.9 207.1L562.4 207.5L561.0 208.0L559.5 208.5L558.1 209.1L556.8 209.6L555.5 210.3L554.3 210.9L553.2 211.6L552.1 212.4L551.1 213.1L550.2 213.9L549.4 214.7L548.7 215.5L548.0 216.3L547.5 217.2L547.0 218.0L546.7 218.8L546.4 219.7L546.3 220.5L546.2 221.3L546.3 222.2L546.4 223.0L546.7 223.7L547.1 224.5L547.5 225.2L548.1 225.9L548.7 226.6L549.5 227.3L550.3 227.9L551.2 228.4L552.2 228.9L553.3 229.4L554.4 229.8L555.7 230.2L556.9 230.5L558.3 230.8L559.7 231.0L561.1 231.2L562.6 231.3L564.1 231.4L565.6 231.4L567.1 231.4L568.7 231.3L570.3 231.1L571.8 230.9L573.4 230.6L574.9 230.3L576.5 229.9L578.0 229.5L579.4 229.1L580.9 228.6L582.2 228.0L583.6 227.4L584.8 226.8L586.0 226.1L587.2 225.4L588.3 224.7L589.3 224.0L590.2 223.2L591.0 222.4L591.7 221.6L592.4 220.8L592.9 219.9L593.4 219.1L593.7 218.2L594.0 217.4L594.1 216.6L594.2 215.7L594.1 214.9L594.0 214.1L593.7 213.3L593.3 212.6L592.9 211.8L592.3 211.1L591.7 210.5L590.9 209.8L590.1 209.2L589.2 208.7L588.2 208.1L587.1 207.7L585.9 207.2L584.7 206.9M599.7 201.6L597.2 201.0L594.5 200.4L591.8 200.0L589.0 199.6L586.1 199.4L583.2 199.3L580.2 199.3L577.1 199.4L574.1 199.6L571.0 199.9L567.9 200.3L564.9 200.8L561.8 201.4L558.8 202.1L555.9 202.9L553.0 203.8L550.2 204.8L547.5 205.9L544.9 207.1L542.4 208.3L540.0 209.6L537.8 211.0L535.7 212.4L533.8 213.9L532.0 215.4L530.3 217.0L528.9 218.5L527.6 220.2L526.6 221.8L525.7 223.5L525.0 225.1L524.5 226.8L524.2 228.4L524.1 230.0L524.2 231.6L524.5 233.2L525.0 234.7L525.8 236.2L526.7 237.6L527.7 239.0L529.0 240.4L530.5 241.6L532.1 242.8L533.9 243.9L535.9 244.9L538.0 245.8L540.2 246.7L542.6 247.4L545.1 248.1L547.7 248.6L550.5 249.1L553.3 249.4L556.2 249.6L559.1 249.7L562.1 249.8L565.1 249.7L568.2 249.5L571.3 249.2L574.3 248.7L577.4 248.2L580.4 247.6L583.4 246.9L586.4 246.1L589.3 245.2L592.1 244.2L594.8 243.1L597.4 241.9L599.9 240.7L602.2 239.4L604.5 238.0L606.6 236.6L608.5 235.1L610.3 233.6L611.9 232.1L613.4 230.5L614.6 228.9L615.7 227.2L616.6 225.6L617.3 223.9L617.8 222.3L618.1 220.6L618.2 219.0L618.1 217.4L617.7 215.8L617.2 214.3L616.5 212.8L615.6 211.4L614.5 210.0L613.3 208.7L611.8 207.4L610.2 206.2L608.4 205.1L606.4 204.1L604.3 203.2L602.0 202.3L599.7 201.6M614.1 201.0L610.4 200.0L606.6 199.2L602.7 198.6L598.6 198.1M534.6 208.9L531.0 210.7L527.5 212.6L524.3 214.6L521.2 216.6L518.4 218.8L515.8 221.0L513.5 223.2L511.4 225.6L509.5 227.9L508.0 230.3L506.7 232.7L505.7 235.1L505.0 237.5L504.5 239.8L504.4 242.2L504.6 244.5L505.0 246.8L505.8 249.0L506.8 251.2L508.1 253.3L509.7 255.3L511.5 257.2L513.7 259.0L516.0 260.7L518.6 262.3L521.5 263.8L524.5 265.2L527.8 266.4L531.3 267.5L534.9 268.4L538.7 269.2L542.7 269.8L546.7 270.3L550.9 270.7L555.2 270.8L559.5 270.9L564.0 270.7L568.4 270.4L572.9 270.0L577.3 269.4L581.8 268.6L586.2 267.7L590.5 266.7L594.8 265.5L599.0 264.2L603.0 262.8L607.0 261.2L610.8 259.5L614.4 257.7L617.8 255.8L621.1 253.9L624.1 251.8L627.0 249.7L629.5 247.4L631.9 245.2L634.0 242.9L635.8 240.5L637.4 238.1L638.7 235.8L639.7 233.4L640.4 231.0L640.8 228.6L640.9 226.2L640.8 223.9L640.3 221.6L639.6 219.4L638.6 217.2L637.3 215.1L635.7 213.1L633.8 211.2L631.7 209.4L629.3 207.7L626.7 206.1L623.9 204.6L620.8 203.3L617.5 202.0L614.1 201.0M499.4 233.3L496.7 236.3L494.4 239.2L492.4 242.3L490.8 245.3L489.5 248.4L488.6 251.4L488.0 254.4L487.9 257.4L488.1 260.4L488.6 263.3L489.6 266.1L490.9 268.9L492.5 271.5L494.6 274.1L496.9 276.5L499.6 278.9L502.6 281.0L506.0 283.1L509.6 284.9L513.5 286.7L517.6 288.2L522.0 289.6L526.7 290.8L531.5 291.8L536.5 292.6L541.7 293.2L547.0 293.7L552.5 293.9L558.0 293.9L563.6 293.7L569.3 293.4L575.0 292.8L580.7 292.0L586.3 291.1L591.9 289.9L597.5 288.6L602.9 287.1L608.2 285.4L613.4 283.6L618.4 281.6L623.2 279.5L627.8 277.2L632.2 274.8L636.4 272.3L640.2 269.6L643.8 266.9L647.1 264.1L650.1 261.2L652.8 258.3L655.1 255.3L657.1 252.3L658.7 249.2L660.0 246.2L660.9 243.1L661.5 240.1L661.6 237.1L661.4 234.1L660.9 231.2L659.9 228.4L658.6 225.7L656.9 223.0L654.9 220.4L652.6 218.0L649.9 215.7L646.9 213.5L643.5 211.5L639.9 209.6M480.4 257.3L478.5 260.9L477.0 264.5L475.9 268.0L475.3 271.6L475.1 275.1L475.3 278.6L476.0 282.0L477.1 285.4L478.6 288.6L480.6 291.7L483.0 294.7L485.8 297.6L488.9 300.3L492.5 302.9L496.4 305.3L500.6 307.5L505.2 309.5L510.1 311.3L515.3 312.9L520.7 314.3L526.4 315.5L532.3 316.5L538.4 317.2L544.7 317.7L551.1 318.0L557.6 318.0L564.2 317.8L570.9 317.4L577.6 316.7L584.2 315.8L590.9 314.7L597.5 313.4L604.0 311.8L610.4 310.0L616.6 308.1L622.7 305.9L628.6 303.6L634.3 301.1L639.7 298.4L644.8 295.5L649.7 292.6L654.3 289.5L658.5 286.3L662.4 283.0L665.9 279.6L669.0 276.1L671.8 272.6L674.1 269.1L676.0 265.5L677.5 261.9L678.6 258.3L679.2 254.7L679.4 251.2L679.2 247.7L678.5 244.3L677.4 241.0L675.9 237.8L673.9 234.6L671.5 231.6L668.8 228.8M467.5 286.7L466.8 290.7L466.6 294.6L466.9 298.5L467.6 302.3L468.9 306.0L470.6 309.6L472.7 313.0L475.4 316.4L478.5 319.6L482.0 322.6L485.9 325.4L490.3 328.1L495.0 330.6L500.1 332.8L505.5 334.8L511.3 336.6L517.3 338.2L523.7 339.5L530.2 340.6L537.0 341.4L544.0 341.9L551.1 342.2L558.3 342.3L565.6 342.1L573.0 341.6L580.5 340.8L587.9 339.8L595.3 338.6L602.6 337.1L609.8 335.4L616.9 333.4L623.9 331.2L630.6 328.8L637.2 326.2L643.5 323.4L649.5 320.4L655.2 317.3L660.6 314.0L665.7 310.6L670.4 307.0L674.7 303.3L678.6 299.6L682.1 295.7L685.1 291.8L687.7 287.9L689.9 283.9L691.5 279.9L692.7 275.9L693.4 272.0L693.7 268.0L693.4 264.2L692.6 260.4L691.4 256.7L689.7 253.1L687.5 249.6M462.7 315.1L463.0 319.2L463.8 323.3L465.1 327.2L466.9 331.0L469.2 334.7L472.0 338.2L475.3 341.6L479.1 344.8L483.2 347.8L487.9 350.7L492.9 353.3L498.3 355.7L504.1 357.8L510.2 359.7L516.6 361.4L523.3 362.8L530.3 363.9L537.5 364.8L544.8 365.4L552.4 365.7L560.1 365.7L567.9 365.5L575.7 365.0L583.6 364.2L591.5 363.1L599.3 361.8L607.1 360.2L614.8 358.4L622.3 356.3L629.7 354.0L636.9 351.4L643.8 348.7L650.5 345.7L656.9 342.5L663.0 339.2L668.7 335.7L674.1 332.1L679.1 328.3L683.7 324.4L687.8 320.4L691.5 316.3L694.7 312.2L697.5 308.0L699.8 303.7L701.5 299.5L702.8 295.3L703.5 291.1L703.8 286.9L703.5 282.8L702.7 278.8L701.4 274.9M464.7 344.2L466.0 348.2L467.9 352.1L470.3 355.8L473.1 359.4L476.4 362.9L480.3 366.2L484.5 369.2L489.2 372.1L494.3 374.8L499.9 377.2L505.7 379.4L512.0 381.4L518.5 383.0L525.4 384.5L532.5 385.6L539.8 386.5L547.3 387.1L555.0 387.4L562.9 387.5L570.8 387.2L578.8 386.7L586.9 385.9L594.9 384.8L602.9 383.5L610.8 381.9L618.6 380.0L626.3 377.9L633.8 375.5L641.2 372.9L648.2 370.1L655.1 367.1L661.6 363.8L667.8 360.4L673.6 356.9L679.1 353.1L684.2 349.3L688.9 345.3L693.1 341.2L696.9 337.1L700.2 332.9L703.0 328.6L705.3 324.3L707.1 320.0L708.4 315.6L709.1 311.4L709.4 307.1L709.1 302.9M473.4 372.0L475.7 375.6L478.5 379.2L481.8 382.6L485.5 385.8L489.7 388.8L494.3 391.6L499.4 394.2L504.8 396.6L510.5 398.8L516.6 400.7L523.1 402.3L529.8 403.7L536.7 404.9L543.9 405.7L551.3 406.3L558.9 406.6L566.6 406.7L574.4 406.5L582.2 405.9L590.1 405.1L598.0 404.1L605.8 402.8L613.6 401.2L621.3 399.3L628.8 397.3L636.2 394.9L643.4 392.4L650.3 389.6L657.0 386.7L663.4 383.5L669.5 380.2L675.2 376.7L680.6 373.0L685.6 369.2L690.1 365.3L694.3 361.3L698.0 357.3L701.2 353.1L704.0 348.9L706.2 344.7L708.0 340.5L709.3 336.2L710.0 332.0M488.1 396.7L491.2 399.9L494.7 402.9L498.6 405.8L503.0 408.4L507.7 410.9L512.8 413.1L518.3 415.2L524.0 417.0L530.1 418.5L536.4 419.9L542.9 420.9L549.7 421.7L556.7 422.3L563.8 422.6L571.0 422.6L578.4 422.4L585.8 421.9L593.2 421.2L600.6 420.2L608.0 418.9L615.3 417.4L622.6 415.7L629.7 413.7L636.6 411.6L643.4 409.2L649.9 406.6L656.2 403.8L662.2 400.8L668.0 397.6L673.4 394.3L678.4 390.9L683.1 387.4L687.4 383.7L691.3 379.9L694.8 376.1L697.9 372.2L700.5 368.2L702.6 364.2L704.3 360.2M507.4 417.0L510.9 419.5L514.9 421.9L519.1 424.1L523.7 426.2L528.6 428.0L533.8 429.6L539.2 431.0L544.9 432.2L550.8 433.1L556.9 433.9L563.2 434.4L569.6 434.6L576.1 434.7L582.7 434.5L589.3 434.0L596.0 433.4L602.7 432.5L609.4 431.4L616.0 430.0L622.5 428.5L628.9 426.7L635.1 424.7L641.2 422.6L647.1 420.2L652.7 417.7L658.2 415.0L663.3 412.2L668.2 409.2L672.7 406.1L677.0 402.9L680.9 399.6L684.4 396.2L687.5 392.8L690.2 389.3M537.0 435.1L541.2 436.7L545.6 438.1L550.2 439.3L555.0 440.3L560.0 441.1L565.2 441.7L570.6 442.1L576.0 442.4L581.5 442.4L587.2 442.2L592.8 441.8L598.5 441.3L604.2 440.5L609.8 439.6L615.5 438.4L621.0 437.1L626.4 435.6L631.7 433.9L636.9 432.1L641.9 430.1L646.7 427.9L651.3 425.7L655.7 423.3L659.9 420.7L663.7 418.1L667.3 415.4L670.6 412.6M578.6 445.2L582.8 445.4L587.2 445.4L591.6 445.3L596.1 445.0L600.5 444.6L605.0 444.0L609.4 443.2L613.8 442.3L618.2 441.3L622.5 440.1L626.6 438.8L630.7 437.3L634.6 435.8" fill="none" stroke="#ffffff" stroke-width="1.1" clip-path="url(#cp1)"/><path d="M586.5 197.5L593.0 197.7L599.5 198.2L605.9 199.0L612.3 200.2L618.6 201.7L624.8 203.6L630.9 205.7L636.9 208.2L642.8 211.0L648.5 214.1L654.0 217.5L659.4 221.2L664.5 225.1L669.5 229.4L674.2 233.8L678.6 238.5L682.9 243.5L686.8 248.6L690.5 254.0L693.9 259.5L697.0 265.2L699.8 271.1L702.3 277.1L704.4 283.2L706.3 289.4L707.8 295.7L709.0 302.1L709.8 308.5L710.3 315.0L710.5 321.5L710.3 328.0L709.8 334.5L709.0 340.9L707.8 347.3L706.3 353.6L704.4 359.8L702.3 365.9L699.8 371.9L697.0 377.8L693.9 383.5L690.5 389.0L686.8 394.4L682.9 399.5L678.6 404.5L674.2 409.2L669.5 413.6L664.5 417.9L659.4 421.8L654.0 425.5L648.5 428.9L642.8 432.0L636.9 434.8L630.9 437.3L624.8 439.4L618.6 441.3L612.3 442.8L605.9 444.0L599.5 444.8L593.0 445.3L586.5 445.5L580.0 445.3L573.5 444.8L567.1 444.0L560.7 442.8L554.4 441.3L548.2 439.4L542.1 437.3L536.1 434.8L530.2 432.0L524.5 428.9L519.0 425.5L513.6 421.8L508.5 417.9L503.5 413.6L498.8 409.2L494.4 404.5L490.1 399.5L486.2 394.4L482.5 389.0L479.1 383.5L476.0 377.8L473.2 371.9L470.7 365.9L468.6 359.8L466.7 353.6L465.2 347.3L464.0 340.9L463.2 334.5L462.7 328.0L462.5 321.5L462.7 315.0L463.2 308.5L464.0 302.1L465.2 295.7L466.7 289.4L468.6 283.2L470.7 277.1L473.2 271.1L476.0 265.2L479.1 259.5L482.5 254.0L486.2 248.6L490.1 243.5L494.4 238.5L498.8 233.8L503.5 229.4L508.5 225.1L513.6 221.2L519.0 217.5L524.5 214.1L530.2 211.0L536.1 208.2L542.1 205.7L548.2 203.6L554.4 201.7L560.7 200.2L567.1 199.0L573.5 198.2L580.0 197.7Z" fill="none" stroke="#33eef2" stroke-width="2.2"/><g stroke-width="0.9" fill="none"><path d="M588 323L573 236" stroke="#4a4a4a"/><path d="M588 323L662 280" stroke="#4a4a4a"/><path d="M588 323L526 291" stroke="#c01818"/></g><text x="571" y="236" font-size="10" fill="#333">z</text><text x="660" y="281" font-size="10" fill="#444">x</text><text x="521" y="291" font-size="10" fill="#c01818">y</text><clipPath id="cp2"><path d="M749.6 481.1L745.6 475.4L741.8 469.6L738.2 463.8L734.8 457.8L731.6 451.7L728.6 445.6L725.9 439.5L723.5 433.3L721.3 427.1L719.4 421.0L717.7 414.8L716.3 408.7L715.2 402.7L714.4 396.7L713.9 390.9L713.6 385.1L713.6 379.5L714.0 374.0L714.6 368.7L715.4 363.5L716.6 358.6L718.0 353.8L719.7 349.2L721.7 344.9L724.0 340.8L726.5 336.9L729.2 333.3L732.2 330.0L735.4 326.9L738.9 324.2L742.5 321.7L746.4 319.5L750.5 317.7L754.7 316.1L759.1 314.9L763.7 313.9L768.5 313.3L773.3 313.0L778.3 313.1L783.4 313.4L788.6 314.1L793.9 315.1L799.2 316.5L804.6 318.1L810.0 320.0L815.4 322.3L820.9 324.9L826.3 327.7L831.7 330.8L837.1 334.2L842.4 337.9L847.7 341.8L852.8 346.0L857.9 350.4L862.9 355.0L867.7 359.8L872.4 364.8L877.0 370.0L881.3 375.4L885.6 380.9L889.6 386.6L893.4 392.4L897.0 398.2L900.4 404.2L903.6 410.3L906.6 416.4L909.3 422.5L911.7 428.7L913.9 434.9L915.8 441.0L917.5 447.2L918.9 453.3L920.0 459.3L920.8 465.3L921.3 471.1L921.6 476.9L921.6 482.5L921.2 488.0L920.6 493.3L919.8 498.5L918.6 503.4L917.2 508.2L915.5 512.8L913.5 517.1L911.2 521.2L908.7 525.1L906.0 528.7L903.0 532.0L899.8 535.1L896.3 537.8L892.7 540.3L888.8 542.5L884.7 544.3L880.5 545.9L876.1 547.1L871.5 548.1L866.7 548.7L861.9 549.0L856.9 548.9L851.8 548.6L846.6 547.9L841.3 546.9L836.0 545.5L830.6 543.9L825.2 542.0L819.8 539.7L814.3 537.1L808.9 534.3L803.5 531.2L798.1 527.8L792.8 524.1L787.5 520.2L782.4 516.0L777.3 511.6L772.3 507.0L767.5 502.2L762.8 497.2L758.2 492.0L753.9 486.6Z"/></clipPath><path d="M749.6 481.1L745.6 475.4L741.8 469.6L738.2 463.8L734.8 457.8L731.6 451.7L728.6 445.6L725.9 439.5L723.5 433.3L721.3 427.1L719.4 421.0L717.7 414.8L716.3 408.7L715.2 402.7L714.4 396.7L713.9 390.9L713.6 385.1L713.6 379.5L714.0 374.0L714.6 368.7L715.4 363.5L716.6 358.6L718.0 353.8L719.7 349.2L721.7 344.9L724.0 340.8L726.5 336.9L729.2 333.3L732.2 330.0L735.4 326.9L738.9 324.2L742.5 321.7L746.4 319.5L750.5 317.7L754.7 316.1L759.1 314.9L763.7 313.9L768.5 313.3L773.3 313.0L778.3 313.1L783.4 313.4L788.6 314.1L793.9 315.1L799.2 316.5L804.6 318.1L810.0 320.0L815.4 322.3L820.9 324.9L826.3 327.7L831.7 330.8L837.1 334.2L842.4 337.9L847.7 341.8L852.8 346.0L857.9 350.4L862.9 355.0L867.7 359.8L872.4 364.8L877.0 370.0L881.3 375.4L885.6 380.9L889.6 386.6L893.4 392.4L897.0 398.2L900.4 404.2L903.6 410.3L906.6 416.4L909.3 422.5L911.7 428.7L913.9 434.9L915.8 441.0L917.5 447.2L918.9 453.3L920.0 459.3L920.8 465.3L921.3 471.1L921.6 476.9L921.6 482.5L921.2 488.0L920.6 493.3L919.8 498.5L918.6 503.4L917.2 508.2L915.5 512.8L913.5 517.1L911.2 521.2L908.7 525.1L906.0 528.7L903.0 532.0L899.8 535.1L896.3 537.8L892.7 540.3L888.8 542.5L884.7 544.3L880.5 545.9L876.1 547.1L871.5 548.1L866.7 548.7L861.9 549.0L856.9 548.9L851.8 548.6L846.6 547.9L841.3 546.9L836.0 545.5L830.6 543.9L825.2 542.0L819.8 539.7L814.3 537.1L808.9 534.3L803.5 531.2L798.1 527.8L792.8 524.1L787.5 520.2L782.4 516.0L777.3 511.6L772.3 507.0L767.5 502.2L762.8 497.2L758.2 492.0L753.9 486.6Z" fill="url(#g2)"/><g clip-path="url(#cp2)"><g filter="url(#bl4)"><path fill-rule="evenodd" fill="#020c07" fill-opacity="0.95" d="M417.6 31H1217.6V831H417.6ZM765.8 461.1L762.3 456.1L758.9 451.0L755.7 445.8L752.7 440.6L749.9 435.2L747.3 429.9L744.9 424.5L742.8 419.0L740.9 413.6L739.2 408.2L737.7 402.8L736.5 397.4L735.5 392.1L734.8 386.9L734.3 381.7L734.1 376.6L734.1 371.7L734.4 366.9L734.9 362.2L735.7 357.6L736.7 353.3L738.0 349.0L739.5 345.0L741.2 341.2L743.2 337.6L745.4 334.2L747.8 331.0L750.4 328.1L753.3 325.4L756.3 323.0L759.5 320.8L763.0 318.9L766.5 317.3L770.3 315.9L774.2 314.8L778.2 314.0L782.4 313.4L786.6 313.2L791.0 313.2L795.5 313.6L800.1 314.2L804.7 315.0L809.4 316.2L814.1 317.6L818.9 319.4L823.7 321.3L828.5 323.6L833.3 326.1L838.0 328.8L842.8 331.8L847.4 335.1L852.1 338.5L856.6 342.2L861.1 346.0L865.4 350.1L869.7 354.3L873.8 358.8L877.8 363.3L881.7 368.1L885.4 372.9L888.9 377.9L892.3 383.0L895.5 388.2L898.5 393.4L901.3 398.8L903.9 404.1L906.3 409.5L908.4 415.0L910.3 420.4L912.0 425.8L913.5 431.2L914.7 436.6L915.7 441.9L916.4 447.1L916.9 452.3L917.1 457.4L917.1 462.3L916.8 467.1L916.3 471.8L915.5 476.4L914.5 480.7L913.2 485.0L911.7 489.0L910.0 492.8L908.0 496.4L905.8 499.8L903.4 503.0L900.8 505.9L897.9 508.6L894.9 511.0L891.7 513.2L888.2 515.1L884.7 516.7L880.9 518.1L877.0 519.2L873.0 520.0L868.8 520.6L864.6 520.8L860.2 520.8L855.7 520.4L851.1 519.8L846.5 519.0L841.8 517.8L837.1 516.4L832.3 514.6L827.5 512.7L822.7 510.4L817.9 507.9L813.2 505.2L808.4 502.2L803.8 498.9L799.1 495.5L794.6 491.8L790.1 488.0L785.8 483.9L781.5 479.7L777.4 475.2L773.4 470.7L769.5 465.9Z"/></g><g filter="url(#bl2)"><path fill-rule="evenodd" fill="#8c9c94" fill-opacity="0.9" d="M417.6 31H1217.6V831H417.6ZM752.6 474.1L748.6 468.4L744.8 462.6L741.2 456.8L737.8 450.8L734.6 444.7L731.6 438.6L728.9 432.5L726.5 426.3L724.3 420.1L722.4 414.0L720.7 407.8L719.3 401.7L718.2 395.7L717.4 389.7L716.9 383.9L716.6 378.1L716.6 372.5L717.0 367.0L717.6 361.7L718.4 356.5L719.6 351.6L721.0 346.8L722.7 342.2L724.7 337.9L727.0 333.8L729.5 329.9L732.2 326.3L735.2 323.0L738.4 319.9L741.9 317.2L745.5 314.7L749.4 312.5L753.5 310.7L757.7 309.1L762.1 307.9L766.7 306.9L771.5 306.3L776.3 306.0L781.3 306.1L786.4 306.4L791.6 307.1L796.9 308.1L802.2 309.5L807.6 311.1L813.0 313.0L818.4 315.3L823.9 317.9L829.3 320.7L834.7 323.8L840.1 327.2L845.4 330.9L850.7 334.8L855.8 339.0L860.9 343.4L865.9 348.0L870.7 352.8L875.4 357.8L880.0 363.0L884.3 368.4L888.6 373.9L892.6 379.6L896.4 385.4L900.0 391.2L903.4 397.2L906.6 403.3L909.6 409.4L912.3 415.5L914.7 421.7L916.9 427.9L918.8 434.0L920.5 440.2L921.9 446.3L923.0 452.3L923.8 458.3L924.3 464.1L924.6 469.9L924.6 475.5L924.2 481.0L923.6 486.3L922.8 491.5L921.6 496.4L920.2 501.2L918.5 505.8L916.5 510.1L914.2 514.2L911.7 518.1L909.0 521.7L906.0 525.0L902.8 528.1L899.3 530.8L895.7 533.3L891.8 535.5L887.7 537.3L883.5 538.9L879.1 540.1L874.5 541.1L869.7 541.7L864.9 542.0L859.9 541.9L854.8 541.6L849.6 540.9L844.3 539.9L839.0 538.5L833.6 536.9L828.2 535.0L822.8 532.7L817.3 530.1L811.9 527.3L806.5 524.2L801.1 520.8L795.8 517.1L790.5 513.2L785.4 509.0L780.3 504.6L775.3 500.0L770.5 495.2L765.8 490.2L761.2 485.0L756.9 479.6Z"/></g></g><path d="M808.5 325.0L810.5 323.8L812.5 323.1L814.5 322.9L816.6 323.1L818.6 323.8M808.5 325.0L809.2 323.3L809.9 322.0L810.6 321.2L811.4 320.8M808.5 325.0L807.9 322.8L807.3 321.0L806.7 319.7L806.2 318.8M808.5 325.0L806.6 322.4L804.7 320.2L802.8 318.5L801.0 317.2L799.3 316.5M808.5 325.0L805.3 322.1L802.2 319.6L799.1 317.6L796.2 316.1L793.3 315.0M808.5 325.0L804.2 321.9L800.0 319.2L795.9 317.1L791.8 315.4L787.8 314.2L784.0 313.5M808.5 325.0L803.3 321.8L798.1 319.2L793.1 316.9L788.1 315.2L783.2 314.0L778.5 313.3L774.0 313.0M808.5 325.0L802.6 321.9L796.7 319.3L790.9 317.2L785.2 315.6L779.6 314.4L774.2 313.8L769.0 313.6L764.0 314.0L759.3 314.8M808.5 325.0L802.0 322.1L795.6 319.7L789.3 317.8L783.2 316.4L777.1 315.5L771.3 315.0L765.6 315.1L760.1 315.6L754.9 316.6L750.0 318.2L745.4 320.2L741.0 322.7M808.5 325.0L801.8 322.5L795.1 320.4L788.6 318.8L782.1 317.7L775.8 317.1L769.7 316.9L763.8 317.3L758.2 318.1L752.8 319.5L747.6 321.2L742.8 323.5L738.3 326.2L734.1 329.4L730.3 333.0L726.8 337.1L723.8 341.5L721.1 346.3L718.9 351.5M808.5 325.0L801.8 322.9L795.1 321.3L788.6 320.1L782.1 319.4L775.9 319.2L769.8 319.5L763.9 320.3L758.2 321.5L752.8 323.2L747.6 325.3L742.8 327.9L738.3 331.0L734.1 334.5L730.3 338.3L726.8 342.6L723.8 347.3L721.1 352.3L718.9 357.7L717.1 363.4L715.7 369.3L714.7 375.5L714.2 382.0L714.1 388.7L714.5 395.5L715.3 402.6L716.6 409.7L718.3 416.9M808.5 325.0L802.0 323.4L795.7 322.3L789.4 321.7L783.2 321.5L777.1 321.8L771.3 322.6L765.6 323.8L760.2 325.5L755.0 327.6L750.1 330.2L745.4 333.2L741.1 336.7L737.1 340.5L733.4 344.7L730.1 349.3L727.2 354.3L724.7 359.5L722.6 365.1L720.8 371.0L719.5 377.1L718.6 383.4L718.1 390.0L718.1 396.7L718.5 403.6L719.3 410.6L720.5 417.7L722.2 424.8L724.2 432.0L726.7 439.1L729.5 446.2L732.7 453.3L736.3 460.3L740.2 467.1L744.5 473.8M808.5 325.0L802.6 324.0L796.7 323.5L790.9 323.5L785.2 323.9L779.6 324.7L774.3 326.1L769.1 327.8L764.1 330.1L759.3 332.7L754.8 335.8L750.6 339.2L746.6 343.1L742.9 347.4L739.6 352.0L736.6 356.9L734.0 362.2L731.7 367.7L729.7 373.5L728.2 379.6L727.0 385.9L726.3 392.4L725.9 399.0L725.9 405.8L726.3 412.7L727.1 419.7L728.2 426.7L729.8 433.7L731.7 440.8L734.0 447.7L736.7 454.7L739.7 461.5L743.1 468.1L746.7 474.7L750.7 481.0L754.9 487.1L759.4 493.0L764.2 498.6L769.2 504.0M808.5 325.0L803.3 324.7L798.1 324.8L793.1 325.4L788.1 326.4L783.3 327.9L778.6 329.8L774.1 332.2L769.7 335.0L765.6 338.1L761.7 341.7L758.0 345.7L754.6 350.0L751.4 354.7L748.6 359.7L746.0 365.0L743.8 370.6L741.8 376.5L740.2 382.6L738.9 388.9L737.9 395.4L737.3 402.0L737.1 408.7L737.2 415.6L737.6 422.5L738.3 429.5L739.4 436.4L740.9 443.3L742.7 450.2L744.7 457.0L747.1 463.7L749.8 470.3L752.8 476.6L756.1 482.8L759.6 488.8L763.4 494.5L767.4 499.9L771.7 505.1L776.1 509.9L780.7 514.4L785.5 518.5M808.5 325.0L804.2 325.3L800.0 326.1L795.9 327.4L791.8 329.0L787.9 331.2L784.1 333.7L780.4 336.7L776.9 340.0L773.6 343.8L770.4 347.9L767.5 352.4L764.8 357.2L762.3 362.3L760.0 367.8L758.0 373.5L756.2 379.4L754.7 385.6L753.5 392.0L752.5 398.5L751.8 405.2L751.4 411.9L751.3 418.8L751.5 425.7L751.9 432.6L752.7 439.6L753.7 446.5L755.0 453.3L756.5 460.0L758.4 466.6L760.4 473.1L762.7 479.4L765.3 485.4L768.1 491.3L771.0 496.8L774.2 502.1L777.6 507.1L781.1 511.8L784.8 516.1L788.7 520.0L792.6 523.6L796.7 526.8M808.5 325.0L805.3 326.0L802.2 327.4L799.2 329.3L796.2 331.6L793.3 334.4L790.5 337.6L787.9 341.1L785.4 345.1L783.0 349.4L780.7 354.0L778.6 359.0L776.7 364.3L775.0 369.9L773.4 375.8L772.0 381.8L770.8 388.1L769.9 394.6L769.1 401.3L768.5 408.0L768.2 414.9L768.0 421.8L768.1 428.8L768.4 435.8L768.8 442.7L769.5 449.6L770.5 456.4L771.6 463.2L772.9 469.7L774.4 476.2L776.0 482.4L777.9 488.4L779.9 494.1L782.1 499.6L784.5 504.8L786.9 509.7L789.6 514.2L792.3 518.4L795.1 522.2L798.1 525.6L801.1 528.7L804.2 531.2L807.3 533.4M808.5 325.0L806.6 326.6L804.7 328.7L802.8 331.2L801.1 334.1L799.4 337.5L797.7 341.2L796.2 345.4L794.7 349.9L793.4 354.7L792.1 359.9L791.0 365.4L790.0 371.1L789.1 377.2L788.3 383.4L787.6 389.8L787.1 396.5L786.7 403.3L786.4 410.1L786.3 417.1L786.3 424.2L786.4 431.2L786.7 438.3L787.1 445.4L787.6 452.3L788.3 459.2L789.1 466.0L790.0 472.6L791.0 479.0L792.1 485.3L793.4 491.3L794.7 497.0L796.2 502.5L797.7 507.6L799.3 512.5L801.1 516.9L802.8 521.0L804.7 524.8L806.6 528.1L808.5 531.0L810.5 533.5L812.5 535.5L814.5 537.1M808.5 325.0L807.9 327.2L807.3 329.8L806.7 332.9L806.2 336.4L805.8 340.3L805.4 344.6L805.0 349.3L804.7 354.3L804.5 359.6L804.3 365.3L804.1 371.2L804.1 377.4L804.0 383.8L804.1 390.4L804.2 397.2L804.3 404.1L804.6 411.1L804.8 418.3L805.2 425.5L805.5 432.7L806.0 439.9L806.4 447.0L807.0 454.1L807.5 461.1L808.2 468.0L808.8 474.7L809.5 481.2L810.2 487.5L811.0 493.6L811.8 499.4L812.6 504.9L813.4 510.1L814.3 514.9L815.2 519.4L816.0 523.5L816.9 527.3L817.8 530.6L818.7 533.4L819.6 535.9L820.4 537.9L821.3 539.4L822.1 540.5L823.0 541.1M808.5 325.0L809.2 327.7L809.9 330.8L810.7 334.4L811.5 338.4L812.3 342.8L813.1 347.5L814.0 352.6L814.9 358.1L815.7 363.9L816.6 369.9L817.5 376.2L818.4 382.8L819.3 389.5L820.2 396.4L821.1 403.5L821.9 410.7L822.8 418.0L823.6 425.3L824.4 432.7L825.2 440.1L825.9 447.4L826.6 454.6L827.2 461.8L827.9 468.8L828.4 475.6L829.0 482.3L829.4 488.7L829.9 494.9L830.2 500.8L830.5 506.5L830.8 511.8L831.0 516.7L831.2 521.3L831.3 525.5L831.3 529.3L831.3 532.7L831.2 535.6L831.1 538.1L830.9 540.1L830.6 541.7L830.3 542.8L829.9 543.4L829.5 543.5M808.5 325.0L810.5 328.1L812.5 331.6L814.6 335.6L816.6 340.0L818.7 344.8L820.7 349.9L822.8 355.4L824.8 361.2L826.8 367.3L828.8 373.7L830.7 380.3L832.5 387.1L834.3 394.2L836.0 401.4L837.6 408.7L839.2 416.1L840.6 423.6L842.0 431.1L843.2 438.6L844.4 446.0L845.4 453.4L846.3 460.8L847.1 467.9L847.8 475.0L848.3 481.8L848.7 488.4L849.0 494.8L849.1 500.9L849.1 506.7L848.9 512.2L848.7 517.3L848.3 522.1L847.7 526.4L847.1 530.4L846.3 533.9L845.4 537.0L844.3 539.7L843.2 541.9L841.9 543.6L840.6 544.8L839.1 545.5L837.5 545.8M808.5 325.0L811.7 328.4L815.0 332.2L818.2 336.5L821.5 341.2L824.7 346.2L827.9 351.6L831.1 357.4L834.2 363.4L837.2 369.8L840.2 376.4L843.0 383.3L845.8 390.3L848.4 397.6L850.9 404.9L853.2 412.4L855.4 420.0L857.5 427.6L859.3 435.2L861.0 442.8L862.5 450.4L863.8 457.9L864.9 465.2L865.8 472.4L866.5 479.5L867.0 486.3L867.3 492.9L867.4 499.2L867.2 505.3L866.8 511.0L866.3 516.3L865.5 521.4L864.5 526.0L863.3 530.2L861.9 534.0L860.4 537.3L858.6 540.2L856.7 542.7L854.6 544.6L852.3 546.1L849.9 547.0L847.4 547.5L844.7 547.5M808.5 325.0L812.8 328.6L817.2 332.6L821.5 337.0L825.9 341.8L830.1 347.1L834.4 352.6L838.6 358.5L842.6 364.8L846.6 371.3L850.4 378.0L854.2 385.0L857.7 392.2L861.1 399.5L864.3 407.0L867.3 414.6L870.0 422.3L872.6 430.0L874.9 437.7L877.0 445.3L878.8 452.9L880.4 460.4L881.7 467.8L882.7 475.1L883.4 482.1L883.9 488.9L884.0 495.5L883.9 501.8L883.5 507.8L882.8 513.5L881.9 518.8L880.6 523.7L879.1 528.3L877.4 532.4L875.3 536.1L873.1 539.3L870.6 542.1L867.8 544.4L864.9 546.2L861.7 547.5L858.4 548.4L854.9 548.7M808.5 325.0L813.8 328.6L819.1 332.7L824.3 337.1L829.6 342.0L834.8 347.3L839.9 352.9L844.9 358.8L849.8 365.1L854.6 371.6L859.2 378.4L863.6 385.5L867.8 392.7L871.9 400.0L875.7 407.6L879.2 415.2L882.5 422.8L885.5 430.6L888.2 438.3L890.6 446.0L892.7 453.6L894.4 461.1L895.9 468.5L897.0 475.7L897.7 482.8L898.2 489.6L898.2 496.2L898.0 502.5L897.4 508.5L896.4 514.1L895.1 519.4L893.5 524.3L891.6 528.8L889.3 532.9L886.7 536.6L883.9 539.8L880.7 542.6L877.3 544.8L873.6 546.6L869.7 547.9L865.5 548.7M808.5 325.0L814.5 328.5L820.5 332.5L826.5 336.9L832.5 341.7L838.4 346.9L844.2 352.4L849.9 358.3L855.4 364.4L860.8 370.9L866.0 377.6L871.0 384.6L875.8 391.7L880.3 399.1L884.6 406.5L888.6 414.1L892.2 421.7L895.6 429.4L898.6 437.1L901.2 444.7L903.5 452.3L905.5 459.8L907.0 467.2L908.2 474.4L909.0 481.5L909.4 488.3L909.4 494.9L909.0 501.2L908.3 507.2L907.1 512.9L905.5 518.2L903.6 523.1L901.3 527.7L898.7 531.9L895.7 535.6L892.3 538.8L888.7 541.6L884.7 544.0L880.5 545.8M808.5 325.0L815.0 328.3L821.5 332.1L828.0 336.3L834.5 340.8L840.9 345.8L847.2 351.1L853.3 356.8L859.3 362.8L865.1 369.1L870.8 375.6L876.2 382.4L881.3 389.4L886.2 396.6L890.7 403.9L895.0 411.4L898.9 418.9L902.5 426.5L905.7 434.1L908.6 441.6L911.0 449.2L913.1 456.6L914.7 464.0L916.0 471.2L916.8 478.2L917.2 485.0L917.1 491.6L916.6 498.0L915.7 504.0L914.4 509.8L912.7 515.2L910.6 520.2L908.0 524.9L905.1 529.1L901.8 533.0L898.2 536.4M808.5 325.0L815.3 328.0L822.0 331.4L828.8 335.3L835.5 339.5L842.1 344.2L848.7 349.2L855.1 354.6L861.3 360.3L867.3 366.3L873.2 372.6L878.8 379.1L884.1 385.9L889.1 392.8L893.9 399.9L898.3 407.2L902.4 414.5L906.1 421.9L909.4 429.4L912.3 436.8L914.8 444.3L917.0 451.7L918.6 459.0L919.9 466.1L920.7 473.1L921.1 480.0L921.0 486.6L920.5 493.0L919.6 499.1L918.2 505.0M808.5 325.0L815.3 327.5L822.0 330.5L828.8 334.0L835.5 337.8L842.1 342.0L848.7 346.6L855.0 351.6L861.3 356.9L867.3 362.6L873.2 368.5L878.7 374.7L884.1 381.1L889.1 387.8L893.9 394.6L898.3 401.6L902.3 408.7L906.0 415.9L909.4 423.2L912.3 430.5L914.8 437.8M808.5 325.0L815.0 327.0L821.5 329.5L828.0 332.4L834.5 335.7L840.9 339.4L847.1 343.6L853.3 348.1L859.3 352.9L865.1 358.1L870.7 363.6L876.1 369.4L881.3 375.4L886.1 381.7M808.5 325.0L814.5 326.4L820.5 328.3L826.5 330.6L832.5 333.4L838.4 336.5L844.2 340.1L849.8 344.0L855.4 348.4L860.8 353.0M808.5 325.0L813.8 325.8L819.0 327.0L824.3 328.7L829.5 330.8L834.7 333.4L839.8 336.3L844.8 339.7M808.5 325.0L812.8 325.1L817.2 325.7L821.5 326.7L825.8 328.2L830.1 330.1L834.3 332.4M808.5 325.0L811.7 324.5L815.0 324.4L818.2 324.8L821.4 325.6L824.7 326.9M814.5 322.9L813.3 322.3L812.0 321.7L810.6 321.2L809.3 320.6L808.0 320.1L806.7 319.7L805.4 319.2L804.1 318.8L802.8 318.5L801.5 318.1L800.3 317.8L799.1 317.6L798.0 317.4L796.9 317.2L795.9 317.1L794.9 317.0L793.9 316.9L793.1 316.9L792.2 317.0L791.5 317.1L790.9 317.2L790.3 317.4L789.8 317.6L789.3 317.8L789.0 318.1L788.7 318.5L788.6 318.8L788.5 319.2L788.5 319.7L788.6 320.1L788.7 320.6L789.0 321.1L789.4 321.7L789.8 322.3L790.3 322.9L790.9 323.5L791.5 324.1L792.3 324.7L793.1 325.4L793.9 326.0L794.9 326.7L795.9 327.4L796.9 328.0L798.0 328.7L799.2 329.3L800.4 330.0L801.6 330.6L802.8 331.2L804.1 331.8L805.4 332.4L806.7 332.9L808.0 333.4L809.4 333.9L810.7 334.4L812.0 334.8L813.3 335.2L814.6 335.6L815.8 335.9L817.0 336.2L818.2 336.5L819.4 336.7L820.5 336.9L821.5 337.0L822.5 337.1L823.5 337.1L824.3 337.1L825.1 337.1L825.9 337.0L826.5 336.9L827.1 336.7L827.6 336.5L828.0 336.3L828.4 336.0L828.6 335.6L828.8 335.3L828.9 334.9L828.9 334.4L828.8 334.0L828.6 333.5L828.4 332.9L828.0 332.4L827.6 331.8L827.1 331.2L826.5 330.6L825.8 330.0L825.1 329.3L824.3 328.7L823.4 328.0L822.5 327.4L821.5 326.7L820.4 326.1L819.3 325.4L818.2 324.8L817.0 324.1L815.8 323.5L814.5 322.9M784.0 313.5L782.1 313.3L780.2 313.3L778.5 313.3L777.0 313.3L775.5 313.5L774.2 313.8L773.1 314.1L772.1 314.5L771.3 315.0L770.6 315.6L770.1 316.2L769.7 316.9L769.6 317.7L769.6 318.6L769.8 319.5L770.1 320.5L770.6 321.5L771.3 322.6L772.1 323.7L773.1 324.9L774.3 326.1L775.6 327.3L777.0 328.5L778.6 329.8L780.3 331.1L782.1 332.4L784.1 333.7L786.1 335.0L788.3 336.3L790.5 337.6L792.9 338.8L795.3 340.0L797.7 341.2L800.2 342.4L802.8 343.5L805.4 344.6L807.9 345.6L810.5 346.6L813.1 347.5L815.7 348.4L818.2 349.2L820.7 349.9L823.2 350.5L825.6 351.1L827.9 351.6L830.2 352.0L832.3 352.4L834.4 352.6L836.3 352.8L838.2 352.9L839.9 352.9L841.5 352.8L842.9 352.6L844.2 352.4L845.3 352.1L846.3 351.6L847.2 351.1L847.8 350.6L848.3 349.9L848.7 349.2L848.8 348.4L848.8 347.6L848.7 346.6L848.3 345.7L847.8 344.6L847.1 343.6L846.3 342.4L845.3 341.3L844.2 340.1L842.9 338.8L841.4 337.6L839.8 336.3L838.1 335.0L836.3 333.7L834.3 332.4L832.3 331.1M759.3 314.8L757.6 315.3L756.2 315.9L754.9 316.6L754.0 317.5L753.2 318.4L752.8 319.5L752.5 320.6L752.5 321.8L752.8 323.2L753.3 324.6L754.0 326.1L755.0 327.6L756.2 329.3L757.6 331.0L759.3 332.7L761.2 334.5L763.3 336.3L765.6 338.1L768.1 340.0L770.7 341.9L773.6 343.8L776.6 345.7L779.7 347.5L783.0 349.4L786.3 351.2L789.8 353.0L793.4 354.7L797.0 356.4L800.7 358.0L804.5 359.6L808.2 361.1L812.0 362.5L815.7 363.9L819.5 365.1L823.2 366.2L826.8 367.3L830.4 368.2L833.8 369.1L837.2 369.8L840.5 370.4L843.6 370.9L846.6 371.3L849.4 371.5L852.1 371.6L854.6 371.6L856.9 371.5L859.0 371.3L860.8 370.9L862.5 370.4L863.9 369.8L865.1 369.1L866.1 368.3L866.8 367.3L867.3 366.3L867.6 365.1L867.6 363.9L867.3 362.6L866.8 361.2L866.1 359.7L865.1 358.1L863.9 356.5L862.5 354.8L860.8 353.0M741.0 322.7L739.8 323.7L738.9 324.9L738.3 326.2L738.0 327.7L738.0 329.3L738.3 331.0L738.9 332.8L739.8 334.7L741.1 336.7L742.6 338.7L744.5 340.9L746.6 343.1L749.0 345.4L751.7 347.7L754.6 350.0L757.8 352.4L761.1 354.8L764.8 357.2L768.6 359.6L772.5 362.0L776.7 364.3L781.0 366.6L785.4 368.9L790.0 371.1L794.6 373.3L799.3 375.4L804.1 377.4L808.8 379.3L813.6 381.1L818.4 382.8L823.2 384.3L827.9 385.8L832.5 387.1L837.0 388.3L841.5 389.4L845.8 390.3L849.9 391.1L853.9 391.7L857.7 392.2L861.3 392.5L864.7 392.7L867.8 392.7L870.8 392.5L873.4 392.2L875.8 391.7L877.9 391.1L879.8 390.4L881.3 389.4L882.5 388.4L883.5 387.2L884.1 385.9L884.4 384.4L884.4 382.8L884.1 381.1L883.4 379.3L882.5 377.4L881.3 375.4L879.7 373.4M727.5 335.5L726.8 337.1L726.5 338.8L726.5 340.6L726.8 342.6L727.6 344.7L728.7 347.0L730.1 349.3L732.0 351.8L734.1 354.3L736.6 356.9L739.4 359.6L742.6 362.3L746.0 365.0L749.7 367.8L753.7 370.7L758.0 373.5L762.4 376.3L767.1 379.1L772.0 381.8L777.1 384.6L782.3 387.2L787.6 389.8L793.1 392.4L798.6 394.8L804.2 397.2L809.8 399.4L815.5 401.5L821.1 403.5L826.7 405.4L832.2 407.1L837.6 408.7L843.0 410.1L848.2 411.3L853.2 412.4L858.1 413.3L862.8 414.1L867.3 414.6L871.5 415.0L875.5 415.2L879.2 415.2L882.6 415.0L885.7 414.6L888.6 414.1L891.1 413.3L893.2 412.4L895.0 411.4L896.5 410.1L897.6 408.7L898.3 407.2L898.7 405.4L898.6 403.6L898.3 401.6L897.5 399.5L896.4 397.2M718.9 351.5L718.5 353.4L718.5 355.5L718.9 357.7L719.7 360.0L720.9 362.5L722.6 365.1L724.6 367.8L727.0 370.6L729.7 373.5L732.9 376.5L736.4 379.5L740.2 382.6L744.3 385.7L748.8 388.8L753.5 392.0L758.4 395.1L763.7 398.2L769.1 401.3L774.7 404.3L780.5 407.3L786.4 410.1L792.5 413.0L798.6 415.7L804.8 418.3L811.1 420.8L817.3 423.1L823.6 425.3L829.8 427.4L835.9 429.3L842.0 431.1L847.9 432.6L853.7 434.0L859.3 435.2L864.7 436.2L869.9 437.0L874.9 437.7L879.6 438.1L884.0 438.3L888.2 438.3L892.0 438.1L895.5 437.7L898.6 437.1L901.3 436.3L903.7 435.3L905.7 434.1L907.4 432.7L908.6 431.1L909.4 429.4L909.8 427.5L909.8 425.4L909.4 423.2L908.5 420.8M714.3 371.0L714.3 373.2L714.7 375.5L715.6 378.0L716.9 380.7L718.6 383.4L720.8 386.3L723.3 389.3L726.3 392.4L729.6 395.5L733.3 398.7L737.3 402.0L741.7 405.3L746.4 408.6L751.4 411.9L756.7 415.2L762.2 418.5L768.0 421.8L774.0 425.0L780.1 428.2L786.4 431.2L792.8 434.2L799.4 437.1L806.0 439.9L812.6 442.5L819.2 445.0L825.9 447.4L832.5 449.6L839.0 451.6L845.4 453.4L851.7 455.1L857.9 456.6L863.8 457.9L869.6 458.9L875.1 459.8L880.4 460.4L885.4 460.9L890.1 461.1L894.4 461.1L898.5 460.9L902.2 460.5L905.5 459.8L908.4 459.0L911.0 457.9L913.1 456.6L914.8 455.2L916.1 453.5L917.0 451.7L917.4 449.6L917.4 447.4M714.1 393.1L714.5 395.5L715.4 398.1L716.7 400.8L718.5 403.6L720.7 406.5L723.3 409.6L726.3 412.7L729.7 415.9L733.4 419.2L737.6 422.5L742.1 425.9L746.8 429.3L751.9 432.6L757.3 436.0L763.0 439.4L768.8 442.7L774.9 446.0L781.2 449.2L787.6 452.3L794.2 455.4L800.8 458.3L807.5 461.1L814.3 463.8L821.1 466.4L827.9 468.8L834.6 471.0L841.2 473.1L847.8 475.0L854.2 476.7L860.4 478.2L866.5 479.5L872.4 480.6L878.0 481.4L883.4 482.1L888.5 482.6L893.3 482.8L897.7 482.8L901.9 482.6L905.6 482.1L909.0 481.5L912.0 480.6L914.6 479.5L916.8 478.2L918.5 476.7L919.8 475.0L920.7 473.1L921.2 471.1M718.3 416.9L719.1 419.4L720.4 422.0L722.2 424.8L724.3 427.7L726.9 430.7L729.8 433.7L733.1 436.9L736.8 440.1L740.9 443.3L745.3 446.6L750.0 450.0L755.0 453.3L760.3 456.6L765.8 459.9L771.6 463.2L777.5 466.4L783.7 469.5L790.0 472.6L796.4 475.6L802.9 478.5L809.5 481.2L816.1 483.9L822.8 486.4L829.4 488.7L836.0 490.9L842.5 493.0L849.0 494.8L855.3 496.5L861.4 497.9L867.4 499.2L873.1 500.3L878.6 501.2L883.9 501.8L888.9 502.2L893.6 502.5L898.0 502.5L902.0 502.3L905.7 501.8L909.0 501.2L912.0 500.3L914.5 499.3L916.6 498.0L918.4 496.5L919.6 494.9L920.5 493.0M727.9 443.6L729.5 446.2L731.5 449.0L733.9 451.8L736.7 454.7L739.8 457.6L743.3 460.6L747.1 463.7L751.3 466.8L755.7 469.9L760.4 473.1L765.4 476.2L770.6 479.3L776.0 482.4L781.7 485.4L787.4 488.4L793.4 491.3L799.4 494.1L805.6 496.8L811.8 499.4L818.0 501.9L824.3 504.2L830.5 506.5L836.8 508.5L842.9 510.4L848.9 512.2L854.9 513.8L860.7 515.1L866.3 516.3L871.7 517.4L876.9 518.2L881.9 518.8L886.6 519.2L891.0 519.4L895.1 519.4L898.9 519.2L902.4 518.8L905.5 518.2L908.3 517.4L910.7 516.4L912.7 515.2L914.3 513.8L915.5 512.2M740.2 467.1L742.1 469.5L744.2 472.1L746.7 474.7L749.5 477.3L752.7 480.1L756.1 482.8L759.8 485.6L763.8 488.4L768.1 491.3L772.5 494.1L777.2 496.9L782.1 499.6L787.2 502.4L792.4 505.0L797.7 507.6L803.2 510.2L808.7 512.6L814.3 514.9L819.9 517.2L825.5 519.3L831.2 521.3L836.8 523.2L842.3 524.9L847.7 526.4L853.1 527.9L858.3 529.1L863.3 530.2L868.2 531.1L872.9 531.8L877.4 532.4L881.6 532.8L885.6 532.9L889.3 532.9L892.7 532.8L895.8 532.4L898.7 531.9L901.1 531.1L903.3 530.2L905.1 529.1L906.6 527.9M757.3 490.8L759.4 493.0L761.9 495.3L764.5 497.6L767.4 499.9L770.6 502.3L774.0 504.7L777.6 507.1L781.4 509.5L785.4 511.9L789.6 514.2L793.9 516.5L798.3 518.8L802.8 521.0L807.5 523.2L812.2 525.3L816.9 527.3L821.7 529.2L826.5 531.0L831.3 532.7L836.0 534.2L840.7 535.7L845.4 537.0L849.9 538.2L854.3 539.3L858.6 540.2L862.8 541.0L866.8 541.6L870.6 542.1L874.2 542.4L877.5 542.6L880.7 542.6L883.6 542.4L886.3 542.1L888.7 541.6L890.8 541.0L892.6 540.3M776.3 510.7L778.4 512.6L780.7 514.4L783.2 516.3L785.8 518.2L788.7 520.0L791.7 521.9L794.8 523.8L798.1 525.6L801.5 527.5L804.9 529.2L808.5 531.0L812.1 532.7L815.8 534.3L819.6 535.9L823.3 537.4L827.1 538.8L830.9 540.1L834.6 541.4L838.3 542.5L841.9 543.6L845.5 544.5L849.0 545.3L852.3 546.1L855.6 546.7L858.7 547.2L861.7 547.5L864.5 547.8L867.2 547.9L869.7 547.9L872.0 547.8L874.1 547.5M805.1 532.1L807.3 533.4L809.7 534.7L812.1 535.9L814.5 537.1L817.0 538.3L819.6 539.4L822.1 540.5L824.7 541.5L827.3 542.5L829.9 543.4L832.5 544.2L835.0 545.0L837.5 545.8L840.0 546.4L842.4 547.0L844.7 547.5L847.0 547.9L849.1 548.2" fill="none" stroke="#25a56b" stroke-width="0.9" clip-path="url(#cp2)"/><path d="M749.6 481.1L745.6 475.4L741.8 469.6L738.2 463.8L734.8 457.8L731.6 451.7L728.6 445.6L725.9 439.5L723.5 433.3L721.3 427.1L719.4 421.0L717.7 414.8L716.3 408.7L715.2 402.7L714.4 396.7L713.9 390.9L713.6 385.1L713.6 379.5L714.0 374.0L714.6 368.7L715.4 363.5L716.6 358.6L718.0 353.8L719.7 349.2L721.7 344.9L724.0 340.8L726.5 336.9L729.2 333.3L732.2 330.0L735.4 326.9L738.9 324.2L742.5 321.7L746.4 319.5L750.5 317.7L754.7 316.1L759.1 314.9L763.7 313.9L768.5 313.3L773.3 313.0L778.3 313.1L783.4 313.4L788.6 314.1L793.9 315.1L799.2 316.5L804.6 318.1L810.0 320.0L815.4 322.3L820.9 324.9L826.3 327.7L831.7 330.8L837.1 334.2L842.4 337.9L847.7 341.8L852.8 346.0L857.9 350.4L862.9 355.0L867.7 359.8L872.4 364.8L877.0 370.0L881.3 375.4L885.6 380.9L889.6 386.6L893.4 392.4L897.0 398.2L900.4 404.2L903.6 410.3L906.6 416.4L909.3 422.5L911.7 428.7L913.9 434.9L915.8 441.0L917.5 447.2L918.9 453.3L920.0 459.3L920.8 465.3L921.3 471.1L921.6 476.9L921.6 482.5L921.2 488.0L920.6 493.3L919.8 498.5L918.6 503.4L917.2 508.2L915.5 512.8L913.5 517.1L911.2 521.2L908.7 525.1L906.0 528.7L903.0 532.0L899.8 535.1L896.3 537.8L892.7 540.3L888.8 542.5L884.7 544.3L880.5 545.9L876.1 547.1L871.5 548.1L866.7 548.7L861.9 549.0L856.9 548.9L851.8 548.6L846.6 547.9L841.3 546.9L836.0 545.5L830.6 543.9L825.2 542.0L819.8 539.7L814.3 537.1L808.9 534.3L803.5 531.2L798.1 527.8L792.8 524.1L787.5 520.2L782.4 516.0L777.3 511.6L772.3 507.0L767.5 502.2L762.8 497.2L758.2 492.0L753.9 486.6Z" fill="none" stroke="#f2f22a" stroke-width="2.2"/><clipPath id="cp3"><path d="M1059.3 668.2L1051.7 667.8L1044.1 667.1L1036.5 666.2L1029.1 664.9L1021.7 663.3L1014.4 661.5L1007.3 659.4L1000.3 657.1L993.5 654.5L986.9 651.6L980.4 648.5L974.3 645.2L968.3 641.6L962.6 637.8L957.2 633.8L952.1 629.6L947.3 625.3L942.8 620.7L938.6 616.0L934.8 611.2L931.3 606.2L928.2 601.2L925.5 596.0L923.1 590.7L921.1 585.3L919.5 579.9L918.3 574.4L917.5 568.9L917.1 563.4L917.1 557.9L917.5 552.4L918.3 546.9L919.5 541.5L921.0 536.1L923.0 530.8L925.4 525.6L928.1 520.5L931.2 515.5L934.7 510.7L938.5 506.0L942.6 501.4L947.1 497.0L951.9 492.8L957.0 488.8L962.4 485.0L968.1 481.4L974.0 478.0L980.2 474.9L986.6 472.0L993.2 469.3L1000.0 466.9L1007.0 464.8L1014.1 462.9L1021.4 461.3L1028.8 460.0L1036.3 459.0L1043.8 458.3L1051.4 457.8L1059.0 457.6L1066.7 457.8L1074.3 458.2L1081.9 458.9L1089.5 459.8L1096.9 461.1L1104.3 462.7L1111.6 464.5L1118.7 466.6L1125.7 468.9L1132.5 471.5L1139.1 474.4L1145.6 477.5L1151.7 480.8L1157.7 484.4L1163.4 488.2L1168.8 492.2L1173.9 496.4L1178.7 500.7L1183.2 505.3L1187.4 510.0L1191.2 514.8L1194.7 519.8L1197.8 524.8L1200.5 530.0L1202.9 535.3L1204.9 540.7L1206.5 546.1L1207.7 551.6L1208.5 557.1L1208.9 562.6L1208.9 568.1L1208.5 573.6L1207.7 579.1L1206.5 584.5L1205.0 589.9L1203.0 595.2L1200.6 600.4L1197.9 605.5L1194.8 610.5L1191.3 615.3L1187.5 620.0L1183.4 624.6L1178.9 629.0L1174.1 633.2L1169.0 637.2L1163.6 641.0L1157.9 644.6L1152.0 648.0L1145.8 651.1L1139.4 654.0L1132.8 656.7L1126.0 659.1L1119.0 661.2L1111.9 663.1L1104.6 664.7L1097.2 666.0L1089.7 667.0L1082.2 667.7L1074.6 668.2L1067.0 668.4Z"/></clipPath><path d="M1059.3 668.2L1051.7 667.8L1044.1 667.1L1036.5 666.2L1029.1 664.9L1021.7 663.3L1014.4 661.5L1007.3 659.4L1000.3 657.1L993.5 654.5L986.9 651.6L980.4 648.5L974.3 645.2L968.3 641.6L962.6 637.8L957.2 633.8L952.1 629.6L947.3 625.3L942.8 620.7L938.6 616.0L934.8 611.2L931.3 606.2L928.2 601.2L925.5 596.0L923.1 590.7L921.1 585.3L919.5 579.9L918.3 574.4L917.5 568.9L917.1 563.4L917.1 557.9L917.5 552.4L918.3 546.9L919.5 541.5L921.0 536.1L923.0 530.8L925.4 525.6L928.1 520.5L931.2 515.5L934.7 510.7L938.5 506.0L942.6 501.4L947.1 497.0L951.9 492.8L957.0 488.8L962.4 485.0L968.1 481.4L974.0 478.0L980.2 474.9L986.6 472.0L993.2 469.3L1000.0 466.9L1007.0 464.8L1014.1 462.9L1021.4 461.3L1028.8 460.0L1036.3 459.0L1043.8 458.3L1051.4 457.8L1059.0 457.6L1066.7 457.8L1074.3 458.2L1081.9 458.9L1089.5 459.8L1096.9 461.1L1104.3 462.7L1111.6 464.5L1118.7 466.6L1125.7 468.9L1132.5 471.5L1139.1 474.4L1145.6 477.5L1151.7 480.8L1157.7 484.4L1163.4 488.2L1168.8 492.2L1173.9 496.4L1178.7 500.7L1183.2 505.3L1187.4 510.0L1191.2 514.8L1194.7 519.8L1197.8 524.8L1200.5 530.0L1202.9 535.3L1204.9 540.7L1206.5 546.1L1207.7 551.6L1208.5 557.1L1208.9 562.6L1208.9 568.1L1208.5 573.6L1207.7 579.1L1206.5 584.5L1205.0 589.9L1203.0 595.2L1200.6 600.4L1197.9 605.5L1194.8 610.5L1191.3 615.3L1187.5 620.0L1183.4 624.6L1178.9 629.0L1174.1 633.2L1169.0 637.2L1163.6 641.0L1157.9 644.6L1152.0 648.0L1145.8 651.1L1139.4 654.0L1132.8 656.7L1126.0 659.1L1119.0 661.2L1111.9 663.1L1104.6 664.7L1097.2 666.0L1089.7 667.0L1082.2 667.7L1074.6 668.2L1067.0 668.4Z" fill="#0c6a44"/><g clip-path="url(#cp3)"><path d="M1059.3 668.2L1051.7 667.8L1044.1 667.1L1036.5 666.2L1029.1 664.9L1021.7 663.3L1014.4 661.5L1007.3 659.4L1000.3 657.1L993.5 654.5L986.9 651.6L980.4 648.5L974.3 645.2L968.3 641.6L962.6 637.8L957.2 633.8L952.1 629.6L947.3 625.3L942.8 620.7L938.6 616.0L934.8 611.2L931.3 606.2L928.2 601.2L925.5 596.0L923.1 590.7L921.1 585.3L919.5 579.9L918.3 574.4L917.5 568.9L917.1 563.4L917.1 557.9L917.5 552.4L918.3 546.9L919.5 541.5L921.0 536.1L923.0 530.8L925.4 525.6L928.1 520.5L931.2 515.5L934.7 510.7L938.5 506.0L942.6 501.4L947.1 497.0L951.9 492.8L957.0 488.8L962.4 485.0L968.1 481.4L974.0 478.0L980.2 474.9L986.6 472.0L993.2 469.3L1000.0 466.9L1007.0 464.8L1014.1 462.9L1021.4 461.3L1028.8 460.0L1036.3 459.0L1043.8 458.3L1051.4 457.8L1059.0 457.6L1066.7 457.8L1074.3 458.2L1081.9 458.9L1089.5 459.8L1096.9 461.1L1104.3 462.7L1111.6 464.5L1118.7 466.6L1125.7 468.9L1132.5 471.5L1139.1 474.4L1145.6 477.5L1151.7 480.8L1157.7 484.4L1163.4 488.2L1168.8 492.2L1173.9 496.4L1178.7 500.7L1183.2 505.3L1187.4 510.0L1191.2 514.8L1194.7 519.8L1197.8 524.8L1200.5 530.0L1202.9 535.3L1204.9 540.7L1206.5 546.1L1207.7 551.6L1208.5 557.1L1208.9 562.6L1208.9 568.1L1208.5 573.6L1207.7 579.1L1206.5 584.5L1205.0 589.9L1203.0 595.2L1200.6 600.4L1197.9 605.5L1194.8 610.5L1191.3 615.3L1187.5 620.0L1183.4 624.6L1178.9 629.0L1174.1 633.2L1169.0 637.2L1163.6 641.0L1157.9 644.6L1152.0 648.0L1145.8 651.1L1139.4 654.0L1132.8 656.7L1126.0 659.1L1119.0 661.2L1111.9 663.1L1104.6 664.7L1097.2 666.0L1089.7 667.0L1082.2 667.7L1074.6 668.2L1067.0 668.4Z" fill="url(#g3)" transform="translate(3 -4)"/></g><path d="M1064.5 519.3L1071.1 514.9L1077.6 510.8L1084.0 506.9L1090.4 503.2L1096.6 499.8L1102.7 496.7L1108.7 493.8L1114.4 491.2L1119.9 489.0L1125.2 487.1L1130.2 485.5L1134.9 484.2L1139.3 483.2L1143.4 482.6L1147.1 482.4L1150.5 482.5L1153.5 482.9L1156.1 483.7M1064.5 519.3L1069.6 514.1L1074.6 509.2L1079.6 504.6L1084.5 500.1L1089.4 496.0L1094.1 492.1L1098.6 488.5L1103.1 485.3L1107.3 482.4L1111.4 479.8L1115.2 477.6L1118.9 475.7L1122.3 474.3L1125.4 473.2L1128.3 472.5L1130.9 472.1L1133.2 472.2L1135.2 472.7M1064.5 519.3L1067.9 513.6L1071.3 508.1L1074.6 502.8L1077.9 497.8L1081.1 493.1L1084.3 488.7L1087.3 484.6L1090.3 480.8L1093.1 477.4L1095.8 474.4L1098.3 471.7L1100.7 469.5L1103.0 467.6L1105.1 466.1L1107.0 465.1L1108.7 464.5L1110.2 464.2M1064.5 519.3L1066.1 513.2L1067.7 507.4L1069.2 501.8L1070.8 496.4L1072.2 491.4L1073.7 486.6L1075.1 482.2L1076.4 478.1L1077.7 474.4L1079.0 471.1L1080.1 468.1L1081.2 465.6L1082.2 463.5L1083.2 461.8L1084.0 460.5L1084.8 459.7L1085.4 459.3M1064.5 519.3L1064.2 513.1L1064.0 507.1L1063.7 501.4L1063.4 495.9L1063.1 490.8L1062.8 485.9L1062.5 481.4L1062.2 477.2L1061.9 473.4L1061.6 469.9L1061.3 466.9L1061.0 464.3L1060.8 462.1L1060.5 460.3L1060.3 459.0L1060.0 458.1L1059.8 457.7M1064.5 519.3L1062.4 513.2L1060.2 507.4L1058.1 501.7L1056.0 496.4L1053.9 491.3L1051.9 486.6L1049.9 482.2L1048.0 478.1L1046.1 474.4L1044.3 471.0L1042.6 468.1L1041.0 465.6L1039.4 463.5L1038.0 461.8L1036.7 460.5L1035.5 459.7L1034.4 459.3M1064.5 519.3L1060.6 513.6L1056.7 508.1L1052.8 502.8L1049.0 497.8L1045.2 493.1L1041.5 488.7L1037.9 484.6L1034.4 480.8L1031.0 477.4L1027.8 474.4L1024.7 471.7L1021.8 469.4L1019.0 467.5L1016.5 466.1L1014.1 465.0L1012.0 464.4L1010.0 464.2L1008.3 464.4M1064.5 519.3L1059.0 514.1L1053.5 509.2L1048.0 504.5L1042.6 500.1L1037.2 495.9L1032.0 492.1L1026.9 488.5L1022.0 485.2L1017.3 482.3L1012.7 479.7L1008.4 477.5L1004.2 475.7L1000.4 474.2L996.8 473.1L993.5 472.4L990.5 472.1L987.8 472.1L985.4 472.6M1064.5 519.3L1057.6 514.9L1050.7 510.8L1043.8 506.9L1037.0 503.2L1030.3 499.8L1023.8 496.6L1017.4 493.8L1011.2 491.2L1005.3 488.9L999.6 487.0L994.1 485.4L989.0 484.1L984.2 483.2L979.7 482.5L975.5 482.3L971.8 482.4L968.4 482.8L965.5 483.6L962.9 484.7M1064.5 519.3L1056.4 515.9L1048.4 512.7L1040.4 509.7L1032.5 506.9L1024.7 504.4L1017.1 502.2L1009.7 500.2L1002.5 498.5L995.6 497.0L988.9 495.8L982.6 495.0L976.6 494.4L971.0 494.1L965.8 494.1L961.0 494.4L956.6 494.9L952.7 495.8L949.3 497.0L946.4 498.4L943.9 500.2M1064.5 519.3L1055.6 516.9L1046.7 514.8L1037.9 512.9L1029.2 511.2L1020.6 509.8L1012.2 508.5L1004.0 507.5L996.1 506.7L988.5 506.2L981.2 505.9L974.2 505.9L967.6 506.1L961.4 506.5L955.7 507.2L950.4 508.1L945.6 509.3L941.3 510.7L937.5 512.3L934.3 514.1L931.6 516.2L929.5 518.4M1064.5 519.3L1055.1 518.1L1045.7 517.2L1036.4 516.4L1027.2 515.9L1018.2 515.5L1009.3 515.4L1000.7 515.5L992.4 515.7L984.3 516.2L976.6 516.9L969.3 517.7L962.3 518.8L955.8 520.0L949.7 521.5L944.2 523.1L939.1 524.9L934.6 526.8L930.6 528.9L927.2 531.2L924.4 533.5L922.1 536.0L920.5 538.7M1064.5 519.3L1055.0 519.3L1045.5 519.6L1036.0 520.1L1026.7 520.7L1017.6 521.5L1008.6 522.6L999.8 523.7L991.4 525.1L983.2 526.6L975.4 528.2L968.0 530.1L960.9 532.0L954.3 534.1L948.2 536.3L942.5 538.6L937.4 541.1L932.8 543.6L928.8 546.2L925.3 548.9L922.5 551.6L920.2 554.4L918.6 557.2L917.5 560.1L917.1 562.9M1064.5 519.3L1055.2 520.6L1045.9 522.1L1036.7 523.7L1027.7 525.6L1018.7 527.6L1010.0 529.7L1001.5 532.0L993.2 534.4L985.2 537.0L977.6 539.6L970.4 542.4L963.5 545.2L957.1 548.2L951.1 551.1L945.6 554.2L940.6 557.3L936.1 560.4L932.2 563.5L928.8 566.6L926.0 569.7L923.8 572.7L922.2 575.8L921.2 578.7L920.8 581.6L921.0 584.4M1064.5 519.3L1055.8 521.7L1047.1 524.4L1038.5 527.2L1030.0 530.2L1021.7 533.3L1013.5 536.6L1005.5 540.0L997.8 543.4L990.3 547.0L983.2 550.6L976.4 554.2L969.9 558.0L963.9 561.7L958.3 565.4L953.1 569.1L948.5 572.8L944.3 576.5L940.6 580.1L937.4 583.6L934.8 587.0L932.7 590.4L931.2 593.6L930.2 596.7L929.9 599.6L930.0 602.4L930.8 605.0M1064.5 519.3L1056.7 522.8L1049.0 526.6L1041.3 530.5L1033.7 534.5L1026.2 538.7L1018.9 542.9L1011.8 547.3L1004.9 551.7L998.2 556.2L991.8 560.7L985.7 565.2L980.0 569.7L974.6 574.1L969.6 578.6L965.0 582.9L960.8 587.2L957.0 591.4L953.7 595.4L950.9 599.3L948.5 603.1L946.7 606.6L945.3 610.0L944.4 613.2L944.1 616.2L944.2 618.9L944.9 621.4L946.1 623.7L947.7 625.7M1064.5 519.3L1058.0 523.8L1051.4 528.5L1045.0 533.3L1038.6 538.3L1032.3 543.3L1026.1 548.5L1020.1 553.7L1014.3 559.0L1008.6 564.3L1003.3 569.5L998.1 574.8L993.3 580.0L988.7 585.1L984.5 590.1L980.6 595.0L977.1 599.8L973.9 604.4L971.1 608.8L968.7 613.1L966.7 617.1L965.1 620.9L963.9 624.4L963.2 627.7L962.9 630.7L963.0 633.4L963.5 635.9L964.5 638.0L965.9 639.7L967.7 641.2M1064.5 519.3L1059.5 524.6L1054.4 530.0L1049.4 535.6L1044.4 541.4L1039.5 547.2L1034.8 553.1L1030.1 559.0L1025.6 564.9L1021.2 570.9L1017.0 576.8L1013.1 582.6L1009.3 588.4L1005.8 594.0L1002.5 599.6L999.4 604.9L996.7 610.1L994.2 615.1L992.0 619.9L990.1 624.4L988.6 628.6L987.3 632.6L986.4 636.3L985.8 639.6L985.5 642.7L985.6 645.4L986.0 647.7L986.7 649.7L987.8 651.3L989.1 652.5M1064.5 519.3L1061.1 525.1L1057.7 531.2L1054.4 537.4L1051.1 543.7L1047.8 550.0L1044.6 556.5L1041.4 562.9L1038.4 569.4L1035.5 575.8L1032.6 582.2L1030.0 588.5L1027.4 594.7L1025.0 600.7L1022.8 606.6L1020.7 612.3L1018.9 617.8L1017.2 623.1L1015.7 628.1L1014.4 632.8L1013.3 637.2L1012.4 641.3L1011.8 645.1L1011.4 648.5L1011.1 651.5L1011.2 654.2L1011.4 656.5L1011.8 658.4L1012.5 659.8L1013.4 660.9L1014.5 661.5M1064.5 519.3L1062.9 525.5L1061.3 531.9L1059.8 538.4L1058.2 545.1L1056.7 551.8L1055.1 558.6L1053.6 565.3L1052.2 572.1L1050.8 578.9L1049.5 585.5L1048.2 592.1L1046.9 598.5L1045.8 604.8L1044.7 610.9L1043.7 616.9L1042.8 622.5L1041.9 628.0L1041.2 633.1L1040.5 638.0L1040.0 642.5L1039.5 646.7L1039.2 650.5L1038.9 653.9L1038.8 657.0L1038.7 659.7L1038.8 661.9L1038.9 663.7L1039.2 665.1L1039.6 666.1L1040.0 666.6M1064.5 519.3L1064.8 525.6L1065.1 532.1L1065.3 538.8L1065.6 545.6L1065.8 552.4L1066.1 559.3L1066.3 566.2L1066.5 573.0L1066.7 579.9L1066.8 586.7L1067.0 593.3L1067.1 599.9L1067.2 606.2L1067.3 612.4L1067.4 618.4L1067.5 624.1L1067.5 629.6L1067.6 634.8L1067.6 639.7L1067.5 644.3L1067.5 648.5L1067.5 652.3L1067.4 655.8L1067.3 658.9L1067.2 661.5L1067.1 663.8L1066.9 665.6L1066.8 666.9L1066.6 667.8L1066.4 668.3M1064.5 519.3L1066.7 525.5L1068.8 531.9L1070.9 538.4L1072.9 545.1L1075.0 551.8L1076.9 558.6L1078.8 565.4L1080.7 572.1L1082.4 578.9L1084.1 585.5L1085.7 592.1L1087.2 598.6L1088.6 604.9L1089.9 611.0L1091.0 616.9L1092.1 622.6L1093.0 628.0L1093.8 633.1L1094.4 638.0L1095.0 642.5L1095.3 646.7L1095.6 650.5L1095.7 654.0L1095.7 657.0L1095.5 659.7L1095.2 661.9L1094.8 663.8L1094.2 665.2L1093.5 666.1L1092.6 666.6M1064.5 519.3L1068.4 525.1L1072.3 531.2L1076.2 537.4L1080.0 543.7L1083.7 550.1L1087.3 556.5L1090.8 562.9L1094.2 569.4L1097.5 575.8L1100.6 582.2L1103.6 588.5L1106.4 594.7L1109.0 600.8L1111.4 606.7L1113.6 612.4L1115.6 617.9L1117.3 623.1L1118.8 628.1L1120.1 632.8L1121.2 637.3L1121.9 641.4L1122.5 645.1L1122.8 648.5L1122.8 651.6L1122.6 654.3L1122.1 656.5L1121.4 658.4L1120.4 659.9L1119.1 661.0M1064.5 519.3L1070.1 524.6L1075.6 530.0L1081.0 535.7L1086.4 541.4L1091.6 547.2L1096.8 553.1L1101.8 559.0L1106.6 565.0L1111.3 570.9L1115.7 576.8L1119.9 582.7L1123.9 588.5L1127.6 594.1L1131.1 599.6L1134.2 605.0L1137.1 610.2L1139.6 615.2L1141.8 619.9L1143.6 624.5L1145.1 628.7L1146.3 632.7L1147.1 636.4L1147.5 639.7L1147.6 642.7L1147.3 645.4L1146.7 647.8L1145.7 649.8L1144.3 651.4L1142.6 652.6M1064.5 519.3L1071.5 523.8L1078.4 528.5L1085.2 533.3L1092.0 538.3L1098.6 543.4L1105.1 548.5L1111.3 553.8L1117.4 559.0L1123.3 564.3L1128.9 569.6L1134.2 574.8L1139.2 580.0L1143.8 585.2L1148.2 590.2L1152.1 595.1L1155.7 599.9L1158.9 604.5L1161.7 608.9L1164.1 613.2L1166.0 617.2L1167.5 621.0L1168.5 624.5L1169.1 627.8L1169.2 630.8L1168.9 633.6L1168.1 636.0L1166.9 638.1L1165.2 639.9M1064.5 519.3L1072.6 522.8L1080.7 526.6L1088.6 530.5L1096.5 534.5L1104.2 538.7L1111.7 543.0L1119.1 547.3L1126.2 551.8L1133.0 556.3L1139.5 560.8L1145.7 565.3L1151.5 569.8L1157.0 574.2L1162.1 578.7L1166.7 583.0L1170.9 587.3L1174.6 591.5L1177.9 595.5L1180.6 599.4L1182.9 603.2L1184.6 606.8L1185.8 610.2L1186.5 613.3L1186.7 616.3L1186.3 619.1L1185.4 621.6L1184.0 623.8M1064.5 519.3L1073.4 521.8L1082.3 524.4L1091.1 527.3L1099.8 530.3L1108.3 533.4L1116.6 536.6L1124.7 540.0L1132.5 543.5L1140.1 547.0L1147.3 550.7L1154.1 554.3L1160.5 558.1L1166.6 561.8L1172.2 565.5L1177.3 569.3L1181.9 573.0L1186.0 576.6L1189.6 580.2L1192.7 583.7L1195.2 587.2L1197.1 590.5L1198.5 593.7L1199.2 596.8L1199.4 599.8L1199.0 602.5L1198.1 605.2M1064.5 519.3L1073.9 520.6L1083.3 522.1L1092.6 523.8L1101.7 525.6L1110.7 527.6L1119.5 529.8L1128.0 532.1L1136.3 534.5L1144.2 537.1L1151.8 539.7L1159.0 542.5L1165.8 545.3L1172.2 548.3L1178.1 551.3L1183.5 554.3L1188.4 557.4L1192.8 560.5L1196.6 563.6L1199.8 566.7L1202.4 569.8L1204.5 572.9L1205.9 575.9L1206.7 578.9L1206.9 581.8L1206.5 584.6M1064.5 519.3L1074.1 519.4L1083.6 519.6L1093.0 520.1L1102.2 520.8L1111.3 521.6L1120.2 522.6L1128.9 523.8L1137.3 525.2L1145.3 526.7L1153.0 528.3L1160.3 530.2L1167.2 532.1L1173.7 534.2L1179.7 536.4L1185.1 538.8L1190.1 541.2L1194.5 543.7L1198.4 546.3L1201.6 549.0L1204.3 551.8L1206.4 554.5L1207.8 557.4L1208.7 560.2M1064.5 519.3L1073.8 518.1L1083.1 517.2L1092.2 516.5L1101.3 515.9L1110.2 515.6L1118.8 515.5L1127.3 515.5L1135.4 515.8L1143.3 516.3L1150.8 517.0L1157.9 517.8L1164.7 518.9L1171.0 520.2L1176.8 521.6L1182.1 523.2L1187.0 525.0L1191.3 526.9L1195.0 529.1L1198.2 531.3L1200.8 533.7L1202.8 536.2L1204.2 538.8M1064.5 519.3L1073.2 517.0L1081.9 514.8L1090.5 513.0L1098.9 511.3L1107.2 509.8L1115.4 508.6L1123.3 507.6L1130.9 506.8L1138.2 506.3L1145.3 506.0L1151.9 506.0L1158.2 506.2L1164.1 506.6L1169.6 507.3L1174.5 508.3L1179.1 509.4L1183.1 510.8L1186.6 512.4L1189.6 514.3L1192.0 516.3L1193.9 518.6M1064.5 519.3L1072.3 515.9L1080.0 512.7L1087.7 509.7L1095.3 507.0L1102.7 504.5L1109.9 502.2L1117.0 500.2L1123.8 498.5L1130.3 497.1L1136.6 495.9L1142.6 495.0L1148.2 494.5L1153.4 494.2L1158.3 494.2L1162.7 494.5L1166.7 495.1L1170.3 495.9L1173.4 497.1L1176.1 498.6M1084.0 506.9L1082.6 506.0L1081.2 505.3L1079.6 504.6L1078.0 503.9L1076.3 503.3L1074.6 502.8L1072.9 502.4L1071.1 502.0L1069.2 501.8L1067.4 501.6L1065.5 501.4L1063.7 501.4L1061.8 501.4L1060.0 501.6L1058.1 501.7L1056.3 502.0L1054.6 502.4L1052.8 502.8L1051.2 503.3L1049.5 503.9L1048.0 504.5L1046.5 505.2L1045.1 506.0L1043.8 506.9L1042.5 507.8L1041.4 508.7L1040.4 509.7L1039.4 510.7L1038.6 511.8L1037.9 512.9L1037.3 514.1L1036.8 515.2L1036.4 516.4L1036.2 517.6L1036.0 518.9L1036.0 520.1L1036.2 521.3L1036.4 522.5L1036.7 523.7L1037.2 524.9L1037.8 526.1L1038.5 527.2L1039.3 528.4L1040.3 529.4L1041.3 530.5L1042.4 531.5L1043.7 532.4L1045.0 533.3L1046.4 534.1L1047.8 534.9L1049.4 535.6L1051.0 536.3L1052.7 536.9L1054.4 537.4L1056.1 537.8L1057.9 538.2L1059.8 538.4L1061.6 538.6L1063.5 538.8L1065.3 538.8L1067.2 538.8L1069.0 538.6L1070.9 538.4L1072.7 538.2L1074.4 537.8L1076.2 537.4L1077.8 536.9L1079.5 536.3L1081.0 535.7L1082.5 534.9L1083.9 534.2L1085.2 533.3L1086.4 532.4L1087.6 531.5L1088.6 530.5L1089.6 529.5L1090.4 528.4L1091.1 527.3L1091.7 526.1L1092.2 524.9L1092.6 523.8L1092.8 522.6L1093.0 521.3L1093.0 520.1L1092.8 518.9L1092.6 517.7L1092.2 516.5L1091.8 515.3L1091.2 514.1L1090.5 513.0L1089.7 511.8L1088.7 510.8L1087.7 509.7L1086.6 508.7L1085.3 507.8L1084.0 506.9M1102.7 496.7L1100.0 495.0L1097.1 493.5L1094.1 492.1L1090.9 490.8L1087.6 489.7L1084.3 488.7L1080.8 487.9L1077.3 487.2L1073.7 486.6L1070.1 486.2L1066.4 486.0L1062.8 485.9L1059.1 486.0L1055.5 486.2L1051.9 486.6L1048.4 487.1L1044.9 487.8L1041.5 488.7L1038.2 489.7L1035.1 490.8L1032.0 492.1L1029.1 493.5L1026.4 495.0L1023.8 496.6L1021.4 498.4L1019.1 500.2L1017.1 502.2L1015.2 504.2L1013.6 506.3L1012.2 508.5L1011.0 510.8L1010.1 513.1L1009.3 515.4L1008.8 517.8L1008.6 520.2L1008.6 522.6L1008.8 525.0L1009.3 527.3L1010.0 529.7L1010.9 532.0L1012.1 534.3L1013.5 536.6L1015.1 538.8L1016.9 540.9L1018.9 542.9L1021.1 544.9L1023.5 546.7L1026.1 548.5L1028.8 550.1L1031.7 551.7L1034.8 553.1L1037.9 554.3L1041.2 555.5L1044.6 556.5L1048.0 557.3L1051.6 558.0L1055.1 558.6L1058.8 559.0L1062.4 559.2L1066.1 559.3L1069.7 559.2L1073.3 559.0L1076.9 558.6L1080.4 558.0L1083.9 557.3L1087.3 556.5L1090.6 555.5L1093.7 554.4L1096.8 553.1L1099.7 551.7L1102.5 550.2L1105.1 548.5L1107.5 546.8L1109.7 544.9L1111.7 543.0L1113.6 541.0L1115.2 538.8L1116.6 536.6L1117.8 534.4L1118.8 532.1L1119.5 529.8L1120.0 527.4L1120.2 525.0L1120.2 522.6L1120.0 520.2L1119.5 517.8L1118.8 515.5L1117.9 513.1L1116.7 510.8L1115.4 508.6L1113.8 506.4L1111.9 504.3L1109.9 502.2L1107.7 500.3L1105.3 498.4L1102.7 496.7M1119.9 489.0L1115.9 486.6L1111.7 484.4L1107.3 482.4L1102.7 480.5L1098.0 478.9L1093.1 477.4L1088.1 476.2L1082.9 475.2L1077.7 474.4L1072.5 473.8L1067.2 473.5L1061.9 473.4L1056.6 473.5L1051.3 473.8L1046.1 474.4L1041.0 475.2L1036.0 476.2L1031.0 477.4L1026.3 478.8L1021.7 480.5L1017.3 482.3L1013.0 484.3L1009.0 486.6L1005.3 488.9L1001.8 491.5L998.5 494.2L995.6 497.0L992.9 500.0L990.5 503.0L988.5 506.2L986.8 509.5L985.4 512.8L984.3 516.2L983.6 519.6L983.2 523.1L983.2 526.6L983.5 530.1L984.2 533.5L985.2 537.0L986.6 540.4L988.3 543.7L990.3 547.0L992.6 550.1L995.3 553.2L998.2 556.2L1001.4 559.0L1004.9 561.7L1008.6 564.3L1012.6 566.6L1016.8 568.9L1021.2 570.9L1025.8 572.7L1030.6 574.4L1035.5 575.8L1040.5 577.0L1045.6 578.1L1050.8 578.9L1056.1 579.4L1061.4 579.8L1066.7 579.9L1072.0 579.8L1077.2 579.4L1082.4 578.9L1087.6 578.1L1092.6 577.1L1097.5 575.8L1102.3 574.4L1106.9 572.8L1111.3 570.9L1115.5 568.9L1119.5 566.7L1123.3 564.3L1126.8 561.8L1130.0 559.1L1133.0 556.3L1135.7 553.3L1138.0 550.2L1140.1 547.0L1141.8 543.8L1143.2 540.5L1144.2 537.1L1144.9 533.6L1145.3 530.2L1145.3 526.7L1145.0 523.2L1144.3 519.7L1143.3 516.3L1141.9 512.9L1140.3 509.5L1138.2 506.3L1135.9 503.1L1133.3 500.0L1130.3 497.1L1127.1 494.2L1123.6 491.5L1119.9 489.0M1134.9 484.2L1129.8 481.1L1124.5 478.3L1118.9 475.7L1113.0 473.4L1107.0 471.3L1100.7 469.5L1094.4 467.9L1087.8 466.6L1081.2 465.6L1074.5 464.9L1067.8 464.4L1061.0 464.3L1054.3 464.4L1047.6 464.9L1041.0 465.6L1034.4 466.6L1028.0 467.9L1021.8 469.4L1015.7 471.2L1009.9 473.3L1004.2 475.7L998.9 478.3L993.8 481.1L989.0 484.1L984.5 487.3L980.4 490.8L976.6 494.4L973.2 498.1L970.2 502.0L967.6 506.1L965.4 510.2L963.7 514.5L962.3 518.8L961.4 523.2L960.9 527.6L960.9 532.0L961.3 536.4L962.2 540.9L963.5 545.2L965.2 549.6L967.4 553.8L969.9 558.0L972.9 562.0L976.3 565.9L980.0 569.7L984.1 573.3L988.5 576.7L993.3 580.0L998.3 583.0L1003.7 585.8L1009.3 588.4L1015.1 590.7L1021.2 592.8L1027.4 594.7L1033.8 596.2L1040.3 597.5L1046.9 598.5L1053.6 599.3L1060.4 599.7L1067.1 599.9L1073.9 599.7L1080.6 599.3L1087.2 598.6L1093.7 597.6L1100.1 596.3L1106.4 594.7L1112.4 592.9L1118.3 590.8L1123.9 588.5L1129.3 585.9L1134.4 583.1L1139.2 580.0L1143.6 576.8L1147.8 573.4L1151.5 569.8L1154.9 566.0L1157.9 562.1L1160.5 558.1L1162.7 553.9L1164.5 549.7L1165.8 545.3L1166.8 541.0L1167.2 536.6L1167.2 532.1L1166.8 527.7L1166.0 523.3L1164.7 518.9L1162.9 514.6L1160.8 510.3L1158.2 506.2L1155.3 502.1L1151.9 498.2L1148.2 494.5L1144.1 490.8L1139.6 487.4L1134.9 484.2M1147.1 482.4L1141.1 478.8L1134.9 475.5L1128.3 472.5L1121.4 469.7L1114.3 467.2L1107.0 465.1L1099.5 463.2L1091.8 461.7L1084.0 460.5L1076.1 459.7L1068.2 459.2L1060.3 459.0L1052.3 459.2L1044.5 459.7L1036.7 460.5L1029.0 461.7L1021.5 463.2L1014.1 465.0L1007.0 467.2L1000.1 469.6L993.5 472.4L987.2 475.4L981.2 478.7L975.5 482.3L970.3 486.1L965.4 490.1L961.0 494.4L957.0 498.8L953.5 503.4L950.4 508.1L947.8 513.0L945.8 518.0L944.2 523.1L943.1 528.2L942.6 533.4L942.5 538.6L943.0 543.8L944.1 549.0L945.6 554.2L947.6 559.3L950.1 564.3L953.1 569.1L956.6 573.9L960.6 578.5L965.0 582.9L969.8 587.2L975.0 591.2L980.6 595.0L986.6 598.6L992.8 601.9L999.4 604.9L1006.3 607.7L1013.4 610.2L1020.7 612.3L1028.2 614.2L1035.9 615.7L1043.7 616.9L1051.6 617.7L1059.5 618.2L1067.4 618.4L1075.3 618.2L1083.2 617.7L1091.0 616.9L1098.7 615.7L1106.2 614.2L1113.6 612.4L1120.7 610.2L1127.6 607.8L1134.2 605.0L1140.5 602.0L1146.5 598.7L1152.1 595.1L1157.4 591.3L1162.3 587.3L1166.7 583.0L1170.7 578.6L1174.2 574.0L1177.3 569.3L1179.9 564.4L1181.9 559.4L1183.5 554.3L1184.6 549.2L1185.1 544.0L1185.1 538.8L1184.7 533.5L1183.6 528.4L1182.1 523.2L1180.1 518.1L1177.6 513.1L1174.5 508.3L1171.1 503.5L1167.1 498.9L1162.7 494.5L1157.9 490.2L1152.7 486.2L1147.1 482.4M1156.1 483.7L1149.5 479.7L1142.5 476.0L1135.2 472.7L1127.5 469.6M1008.3 464.4L1000.4 466.8L992.8 469.5L985.4 472.6L978.4 476.0L971.7 479.6L965.5 483.6L959.6 487.8L954.2 492.3L949.3 497.0L944.9 501.9L940.9 507.0L937.5 512.3L934.7 517.7L932.4 523.3L930.6 528.9L929.4 534.6L928.8 540.4L928.8 546.2L929.4 552.0L930.5 557.7L932.2 563.5L934.4 569.1L937.2 574.7L940.6 580.1L944.5 585.4L948.8 590.5L953.7 595.4L959.1 600.1L964.9 604.6L971.1 608.8L977.7 612.8L984.7 616.5L992.0 619.9L999.6 622.9L1007.5 625.7L1015.7 628.1L1024.0 630.1L1032.5 631.8L1041.2 633.1L1049.9 634.1L1058.7 634.6L1067.6 634.8L1076.4 634.6L1085.1 634.1L1093.8 633.1L1102.3 631.8L1110.7 630.1L1118.8 628.1L1126.8 625.7L1134.4 623.0L1141.8 619.9L1148.8 616.6L1155.4 612.9L1161.7 608.9L1167.5 604.7L1172.9 600.2L1177.9 595.5L1182.3 590.6L1186.2 585.5L1189.6 580.2L1192.5 574.8L1194.8 569.3L1196.6 563.6L1197.7 557.9L1198.3 552.1L1198.4 546.3L1197.8 540.5L1196.7 534.8L1195.0 529.1L1192.7 523.4L1189.9 517.9L1186.6 512.4L1182.7 507.2L1178.3 502.0L1173.4 497.1L1168.1 492.4L1162.3 487.9L1156.1 483.7M933.1 512.8L929.5 518.4L926.5 524.2L924.0 530.1L922.1 536.0L920.9 542.1L920.2 548.2L920.2 554.4L920.8 560.5L922.0 566.7L923.8 572.7L926.2 578.7L929.2 584.6L932.7 590.4L936.8 596.0L941.5 601.4L946.7 606.6L952.3 611.6L958.5 616.4L965.1 620.9L972.1 625.1L979.5 629.0L987.3 632.6L995.4 635.9L1003.8 638.8L1012.4 641.3L1021.3 643.5L1030.3 645.3L1039.5 646.7L1048.8 647.7L1058.1 648.3L1067.5 648.5L1076.9 648.3L1086.2 647.7L1095.3 646.7L1104.4 645.3L1113.3 643.5L1121.9 641.4L1130.4 638.8L1138.5 635.9L1146.3 632.7L1153.7 629.1L1160.8 625.2L1167.5 621.0L1173.7 616.5L1179.4 611.8L1184.6 606.8L1189.3 601.5L1193.5 596.1L1197.1 590.5L1200.1 584.8L1202.6 578.9L1204.5 572.9L1205.7 566.8L1206.4 560.7L1206.4 554.5L1205.8 548.4L1204.6 542.3L1202.8 536.2L1200.4 530.2L1197.4 524.3L1193.9 518.6M917.1 562.9L917.7 569.2L918.9 575.4L920.8 581.6L923.2 587.7L926.2 593.7L929.9 599.6L934.1 605.3L938.8 610.9L944.1 616.2L949.9 621.3L956.2 626.1L962.9 630.7L970.0 635.0L977.6 639.0L985.5 642.7L993.8 646.0L1002.3 648.9L1011.1 651.5L1020.2 653.7L1029.4 655.6L1038.8 657.0L1048.2 658.0L1057.7 658.7L1067.3 658.9L1076.8 658.7L1086.3 658.1L1095.7 657.0L1104.9 655.6L1114.0 653.8L1122.8 651.6L1131.4 649.0L1139.7 646.1L1147.6 642.7L1155.2 639.1L1162.4 635.1L1169.2 630.8L1175.5 626.3L1181.4 621.4L1186.7 616.3L1191.5 611.0L1195.7 605.5L1199.4 599.8L1202.5 593.9L1205.0 587.9L1206.9 581.8L1208.2 575.6L1208.9 569.3M936.2 613.0L940.9 618.5L946.1 623.7L951.8 628.7L957.9 633.5L964.5 638.0L971.5 642.2L978.9 646.1L986.7 649.7L994.8 652.9L1003.2 655.8L1011.8 658.4L1020.7 660.5L1029.7 662.3L1038.9 663.7L1048.2 664.7L1057.6 665.3L1066.9 665.6L1076.3 665.4L1085.6 664.8L1094.8 663.8L1103.8 662.4L1112.7 660.6L1121.4 658.4L1129.8 655.9L1137.9 653.0L1145.7 649.8L1153.1 646.2L1160.2 642.3L1166.9 638.1L1173.1 633.6L1178.8 628.8L1184.0 623.8L1188.7 618.6M1006.4 659.1L1014.5 661.5L1022.9 663.6L1031.4 665.3L1040.0 666.6L1048.8 667.5L1057.6 668.1L1066.4 668.3L1075.2 668.1L1083.9 667.6L1092.6 666.6L1101.1 665.3L1109.5 663.6" fill="none" stroke="#118a55" stroke-width="0.9" clip-path="url(#cp3)"/><path d="M1059.3 668.2L1051.7 667.8L1044.1 667.1L1036.5 666.2L1029.1 664.9L1021.7 663.3L1014.4 661.5L1007.3 659.4L1000.3 657.1L993.5 654.5L986.9 651.6L980.4 648.5L974.3 645.2L968.3 641.6L962.6 637.8L957.2 633.8L952.1 629.6L947.3 625.3L942.8 620.7L938.6 616.0L934.8 611.2L931.3 606.2L928.2 601.2L925.5 596.0L923.1 590.7L921.1 585.3L919.5 579.9L918.3 574.4L917.5 568.9L917.1 563.4L917.1 557.9L917.5 552.4L918.3 546.9L919.5 541.5L921.0 536.1L923.0 530.8L925.4 525.6L928.1 520.5L931.2 515.5L934.7 510.7L938.5 506.0L942.6 501.4L947.1 497.0L951.9 492.8L957.0 488.8L962.4 485.0L968.1 481.4L974.0 478.0L980.2 474.9L986.6 472.0L993.2 469.3L1000.0 466.9L1007.0 464.8L1014.1 462.9L1021.4 461.3L1028.8 460.0L1036.3 459.0L1043.8 458.3L1051.4 457.8L1059.0 457.6L1066.7 457.8L1074.3 458.2L1081.9 458.9L1089.5 459.8L1096.9 461.1L1104.3 462.7L1111.6 464.5L1118.7 466.6L1125.7 468.9L1132.5 471.5L1139.1 474.4L1145.6 477.5L1151.7 480.8L1157.7 484.4L1163.4 488.2L1168.8 492.2L1173.9 496.4L1178.7 500.7L1183.2 505.3L1187.4 510.0L1191.2 514.8L1194.7 519.8L1197.8 524.8L1200.5 530.0L1202.9 535.3L1204.9 540.7L1206.5 546.1L1207.7 551.6L1208.5 557.1L1208.9 562.6L1208.9 568.1L1208.5 573.6L1207.7 579.1L1206.5 584.5L1205.0 589.9L1203.0 595.2L1200.6 600.4L1197.9 605.5L1194.8 610.5L1191.3 615.3L1187.5 620.0L1183.4 624.6L1178.9 629.0L1174.1 633.2L1169.0 637.2L1163.6 641.0L1157.9 644.6L1152.0 648.0L1145.8 651.1L1139.4 654.0L1132.8 656.7L1126.0 659.1L1119.0 661.2L1111.9 663.1L1104.6 664.7L1097.2 666.0L1089.7 667.0L1082.2 667.7L1074.6 668.2L1067.0 668.4Z" fill="none" stroke="#1d9960" stroke-width="1.2"/><clipPath id="cp4"><path d="M1237.5 643.0L1241.3 635.6L1245.3 628.3L1249.4 621.1L1253.6 614.1L1257.8 607.1L1262.2 600.4L1266.6 593.8L1271.0 587.4L1275.5 581.3L1280.1 575.4L1284.6 569.7L1289.2 564.3L1293.7 559.2L1298.3 554.4L1302.7 549.9L1307.2 545.8L1311.6 541.9L1315.9 538.4L1320.1 535.3L1324.3 532.5L1328.3 530.1L1332.2 528.1L1336.0 526.4L1339.7 525.2L1343.2 524.3L1346.5 523.8L1349.7 523.7L1352.7 524.0L1355.6 524.7L1358.2 525.8L1360.6 527.3L1362.9 529.2L1364.9 531.5L1366.7 534.1L1368.3 537.1L1369.7 540.4L1370.8 544.1L1371.7 548.1L1372.4 552.5L1372.8 557.2L1373.0 562.2L1372.9 567.4L1372.6 573.0L1372.1 578.8L1371.4 584.9L1370.4 591.1L1369.1 597.6L1367.7 604.3L1366.0 611.1L1364.1 618.2L1362.0 625.3L1359.7 632.6L1357.2 639.9L1354.5 647.3L1351.6 654.8L1348.5 662.4L1345.2 669.9L1341.8 677.4L1338.2 684.9L1334.5 692.4L1330.7 699.8L1326.7 707.1L1322.6 714.3L1318.4 721.3L1314.2 728.3L1309.8 735.0L1305.4 741.6L1301.0 748.0L1296.5 754.1L1291.9 760.0L1287.4 765.7L1282.8 771.1L1278.3 776.2L1273.7 781.0L1269.3 785.5L1264.8 789.6L1260.4 793.5L1256.1 797.0L1251.9 800.1L1247.7 802.9L1243.7 805.3L1239.8 807.3L1236.0 809.0L1232.3 810.2L1228.8 811.1L1225.5 811.6L1222.3 811.7L1219.3 811.4L1216.4 810.7L1213.8 809.6L1211.4 808.1L1209.1 806.2L1207.1 803.9L1205.3 801.3L1203.7 798.3L1202.3 795.0L1201.2 791.3L1200.3 787.3L1199.6 782.9L1199.2 778.2L1199.0 773.2L1199.1 768.0L1199.4 762.4L1199.9 756.6L1200.6 750.5L1201.6 744.3L1202.9 737.8L1204.3 731.1L1206.0 724.3L1207.9 717.2L1210.0 710.1L1212.3 702.8L1214.8 695.5L1217.5 688.1L1220.4 680.6L1223.5 673.0L1226.8 665.5L1230.2 658.0L1233.8 650.5Z"/></clipPath><path d="M1237.5 643.0L1241.3 635.6L1245.3 628.3L1249.4 621.1L1253.6 614.1L1257.8 607.1L1262.2 600.4L1266.6 593.8L1271.0 587.4L1275.5 581.3L1280.1 575.4L1284.6 569.7L1289.2 564.3L1293.7 559.2L1298.3 554.4L1302.7 549.9L1307.2 545.8L1311.6 541.9L1315.9 538.4L1320.1 535.3L1324.3 532.5L1328.3 530.1L1332.2 528.1L1336.0 526.4L1339.7 525.2L1343.2 524.3L1346.5 523.8L1349.7 523.7L1352.7 524.0L1355.6 524.7L1358.2 525.8L1360.6 527.3L1362.9 529.2L1364.9 531.5L1366.7 534.1L1368.3 537.1L1369.7 540.4L1370.8 544.1L1371.7 548.1L1372.4 552.5L1372.8 557.2L1373.0 562.2L1372.9 567.4L1372.6 573.0L1372.1 578.8L1371.4 584.9L1370.4 591.1L1369.1 597.6L1367.7 604.3L1366.0 611.1L1364.1 618.2L1362.0 625.3L1359.7 632.6L1357.2 639.9L1354.5 647.3L1351.6 654.8L1348.5 662.4L1345.2 669.9L1341.8 677.4L1338.2 684.9L1334.5 692.4L1330.7 699.8L1326.7 707.1L1322.6 714.3L1318.4 721.3L1314.2 728.3L1309.8 735.0L1305.4 741.6L1301.0 748.0L1296.5 754.1L1291.9 760.0L1287.4 765.7L1282.8 771.1L1278.3 776.2L1273.7 781.0L1269.3 785.5L1264.8 789.6L1260.4 793.5L1256.1 797.0L1251.9 800.1L1247.7 802.9L1243.7 805.3L1239.8 807.3L1236.0 809.0L1232.3 810.2L1228.8 811.1L1225.5 811.6L1222.3 811.7L1219.3 811.4L1216.4 810.7L1213.8 809.6L1211.4 808.1L1209.1 806.2L1207.1 803.9L1205.3 801.3L1203.7 798.3L1202.3 795.0L1201.2 791.3L1200.3 787.3L1199.6 782.9L1199.2 778.2L1199.0 773.2L1199.1 768.0L1199.4 762.4L1199.9 756.6L1200.6 750.5L1201.6 744.3L1202.9 737.8L1204.3 731.1L1206.0 724.3L1207.9 717.2L1210.0 710.1L1212.3 702.8L1214.8 695.5L1217.5 688.1L1220.4 680.6L1223.5 673.0L1226.8 665.5L1230.2 658.0L1233.8 650.5Z" fill="url(#g4)"/><path d="M1315.9 552.0L1320.7 546.8L1325.4 542.1L1329.8 537.9L1334.1 534.3L1338.2 531.3L1342.1 528.8L1345.7 526.9L1349.1 525.7L1352.2 525.0L1355.0 525.0L1357.5 525.6M1315.9 552.0L1320.2 546.6L1324.3 541.8L1328.3 537.5L1332.0 533.8L1335.6 530.6L1339.0 528.0L1342.1 526.0L1345.0 524.7L1347.7 523.9M1315.9 552.0L1319.5 546.7L1322.9 542.0L1326.2 537.8L1329.3 534.1L1332.2 531.0L1334.9 528.5L1337.5 526.6L1339.7 525.3M1315.9 552.0L1318.7 547.0L1321.3 542.6L1323.7 538.6L1326.0 535.3L1328.1 532.4L1330.1 530.2L1331.8 528.6L1333.4 527.5M1315.9 552.0L1317.7 547.5L1319.4 543.5L1320.9 540.1L1322.3 537.2L1323.5 534.9L1324.6 533.1L1325.5 531.9M1315.9 552.0L1316.7 548.2L1317.4 544.9L1317.9 542.1L1318.3 539.9L1318.5 538.2L1318.6 537.1L1318.6 536.5M1315.9 552.0L1315.7 549.0L1315.3 546.6L1314.8 544.6L1314.2 543.2L1313.4 542.3L1312.5 542.0L1311.6 542.1M1315.9 552.0L1314.6 550.0L1313.2 548.5L1311.7 547.5L1310.0 547.0L1308.3 547.0L1306.5 547.6L1304.5 548.6L1302.5 550.2M1315.9 552.0L1313.6 551.0L1311.2 550.6L1308.7 550.6L1306.1 551.1L1303.4 552.1L1300.7 553.7L1297.8 555.7L1295.0 558.2L1292.0 561.1M1315.9 552.0L1312.7 552.1L1309.4 552.7L1306.0 553.8L1302.5 555.4L1299.0 557.5L1295.4 560.0L1291.7 563.0L1288.0 566.5L1284.3 570.4L1280.7 574.7M1315.9 552.0L1311.9 553.2L1307.9 554.9L1303.7 557.1L1299.4 559.8L1295.1 562.9L1290.8 566.5L1286.4 570.5L1282.0 574.9L1277.7 579.7L1273.4 584.9L1269.1 590.4L1264.9 596.3M1315.9 552.0L1311.3 554.3L1306.6 557.0L1301.8 560.3L1296.9 564.0L1292.0 568.1L1287.1 572.7L1282.1 577.6L1277.2 583.0L1272.3 588.7L1267.4 594.7L1262.7 601.1L1258.0 607.8L1253.5 614.7L1249.1 621.8L1244.9 629.1M1315.9 552.0L1310.9 555.3L1305.7 559.0L1300.4 563.2L1295.1 567.8L1289.7 572.9L1284.4 578.4L1279.0 584.3L1273.7 590.5L1268.4 597.0L1263.2 603.9L1258.0 611.0L1253.0 618.4L1248.2 626.0L1243.5 633.7L1239.0 641.6L1234.7 649.6L1230.6 657.7L1226.8 665.9L1223.2 674.0M1315.9 552.0L1310.6 556.1L1305.1 560.7L1299.6 565.8L1294.0 571.3L1288.4 577.2L1282.8 583.5L1277.2 590.1L1271.6 597.1L1266.1 604.4L1260.7 611.9L1255.3 619.7L1250.1 627.7L1245.1 635.9L1240.3 644.2L1235.6 652.6L1231.1 661.1L1226.9 669.6L1223.0 678.1L1219.3 686.5L1215.9 694.9L1212.8 703.2L1210.0 711.3L1207.5 719.2L1205.4 726.9L1203.6 734.3M1315.9 552.0L1310.5 556.8L1305.0 562.2L1299.4 567.9L1293.8 574.1L1288.1 580.7L1282.4 587.7L1276.7 595.0L1271.1 602.6L1265.5 610.5L1260.0 618.6L1254.7 627.0L1249.4 635.5L1244.4 644.2L1239.5 652.9L1234.8 661.7L1230.3 670.6L1226.0 679.4L1222.0 688.2L1218.3 696.9L1214.9 705.5L1211.8 713.9L1209.0 722.1L1206.5 730.1L1204.4 737.8L1202.6 745.3L1201.2 752.3L1200.1 759.1L1199.4 765.4L1199.1 771.3L1199.1 776.8M1315.9 552.0L1310.7 557.4L1305.3 563.2L1299.8 569.5L1294.3 576.2L1288.8 583.3L1283.2 590.8L1277.7 598.6L1272.2 606.7L1266.7 615.1L1261.3 623.6L1256.1 632.4L1250.9 641.3L1246.0 650.4L1241.1 659.5L1236.5 668.6L1232.1 677.8L1227.9 686.9L1224.0 695.9L1220.3 704.8L1217.0 713.5L1213.9 722.0L1211.1 730.3L1208.6 738.4L1206.5 746.1L1204.7 753.5L1203.3 760.5L1202.2 767.2L1201.5 773.4L1201.1 779.1L1201.1 784.4L1201.5 789.2L1202.2 793.4L1203.3 797.2M1315.9 552.0L1311.0 557.7L1306.0 563.9L1300.9 570.5L1295.7 577.6L1290.4 585.0L1285.2 592.8L1280.0 600.9L1274.8 609.3L1269.6 618.0L1264.5 626.8L1259.5 635.9L1254.6 645.0L1249.9 654.3L1245.3 663.6L1240.8 673.0L1236.6 682.3L1232.6 691.6L1228.8 700.7L1225.3 709.7L1222.0 718.6L1219.0 727.2L1216.2 735.5L1213.8 743.6L1211.7 751.4L1209.9 758.7L1208.4 765.7L1207.3 772.3L1206.5 778.5L1206.0 784.1L1205.9 789.3L1206.1 793.9L1206.7 798.0L1207.6 801.5L1208.8 804.5L1210.4 806.9L1212.3 808.7M1315.9 552.0L1311.5 557.9L1307.0 564.2L1302.4 570.9L1297.8 578.1L1293.0 585.7L1288.3 593.6L1283.5 601.8L1278.8 610.4L1274.1 619.1L1269.4 628.1L1264.8 637.2L1260.3 646.5L1255.9 655.8L1251.6 665.3L1247.5 674.7L1243.6 684.1L1239.8 693.4L1236.2 702.6L1232.9 711.7L1229.7 720.5L1226.9 729.2L1224.2 737.6L1221.8 745.6L1219.7 753.4L1217.9 760.8L1216.4 767.8L1215.2 774.3L1214.3 780.4L1213.6 786.0L1213.3 791.2L1213.3 795.7L1213.7 799.8L1214.3 803.2L1215.2 806.1L1216.5 808.4L1218.0 810.1L1219.8 811.2L1221.9 811.7M1315.9 552.0L1312.2 557.8L1308.4 564.0L1304.5 570.7L1300.5 577.8L1296.4 585.3L1292.3 593.1L1288.2 601.3L1284.1 609.7L1280.0 618.4L1275.8 627.3L1271.8 636.4L1267.8 645.6L1263.9 654.9L1260.1 664.3L1256.3 673.6L1252.8 683.0L1249.3 692.3L1246.0 701.4L1242.9 710.5L1240.0 719.3L1237.2 728.0L1234.7 736.3L1232.4 744.4L1230.3 752.1L1228.5 759.5L1226.9 766.5L1225.6 773.1L1224.5 779.2L1223.7 784.9L1223.1 790.0L1222.8 794.6L1222.8 798.7L1223.1 802.2L1223.6 805.1L1224.4 807.5L1225.5 809.2L1226.8 810.4L1228.4 810.9L1230.2 810.8M1315.9 552.0L1313.0 557.5L1310.1 563.4L1307.0 569.8L1303.8 576.6L1300.5 583.8L1297.2 591.4L1293.8 599.3L1290.4 607.5L1287.0 615.9L1283.6 624.6L1280.2 633.4L1276.8 642.4L1273.4 651.5L1270.2 660.7L1266.9 669.9L1263.8 679.1L1260.7 688.2L1257.8 697.3L1255.0 706.2L1252.3 715.0L1249.7 723.5L1247.3 731.9L1245.1 739.9L1243.1 747.6L1241.2 755.0L1239.5 762.1L1238.1 768.7L1236.8 774.9L1235.7 780.6L1234.9 785.8L1234.3 790.6L1233.9 794.8L1233.7 798.4L1233.7 801.6L1234.0 804.1L1234.5 806.0L1235.2 807.4L1236.1 808.2L1237.3 808.3M1315.9 552.0L1314.0 557.0L1311.9 562.4L1309.8 568.3L1307.5 574.7L1305.2 581.4L1302.7 588.5L1300.2 595.9L1297.6 603.7L1295.0 611.7L1292.4 620.0L1289.7 628.4L1287.0 637.1L1284.3 645.8L1281.6 654.7L1278.9 663.6L1276.2 672.5L1273.6 681.4L1271.1 690.3L1268.6 699.0L1266.2 707.7L1263.8 716.1L1261.6 724.4L1259.5 732.4L1257.4 740.1L1255.5 747.5L1253.8 754.6L1252.2 761.3L1250.7 767.6L1249.3 773.4L1248.2 778.8L1247.2 783.8L1246.3 788.2L1245.6 792.2L1245.1 795.5L1244.8 798.4L1244.7 800.7L1244.7 802.4L1244.9 803.5L1245.3 804.1L1245.8 804.1M1315.9 552.0L1315.0 556.3L1314.0 561.1L1312.8 566.3L1311.5 572.0L1310.1 578.1L1308.6 584.5L1307.1 591.4L1305.4 598.5L1303.6 606.0L1301.8 613.7L1299.9 621.6L1297.9 629.7L1295.9 638.0L1293.8 646.5L1291.7 655.0L1289.6 663.6L1287.5 672.2L1285.4 680.7L1283.2 689.2L1281.1 697.7L1279.0 706.0L1276.9 714.1L1274.9 722.0L1272.9 729.7L1271.0 737.2L1269.1 744.3L1267.3 751.1L1265.6 757.6L1264.0 763.6L1262.5 769.3L1261.0 774.5L1259.7 779.3L1258.5 783.5L1257.4 787.3L1256.4 790.6L1255.6 793.4L1254.9 795.6L1254.3 797.2L1253.9 798.4L1253.5 798.9M1315.9 552.0L1316.0 555.5L1316.0 559.4L1315.9 563.8L1315.7 568.7L1315.3 574.0L1314.8 579.7L1314.1 585.7L1313.4 592.1L1312.5 598.9L1311.5 605.9L1310.4 613.2L1309.2 620.7L1307.9 628.5L1306.5 636.4L1305.0 644.4L1303.5 652.5L1301.8 660.7L1300.1 669.0L1298.4 677.2L1296.5 685.4L1294.7 693.5L1292.8 701.5L1290.9 709.3L1288.9 717.0L1286.9 724.4L1285.0 731.7L1283.0 738.6L1281.1 745.2L1279.1 751.6L1277.2 757.5L1275.4 763.1L1273.6 768.2L1271.8 773.0L1270.1 777.2L1268.5 781.0L1266.9 784.4L1265.4 787.2L1264.0 789.5L1262.7 791.3L1261.5 792.5M1315.9 552.0L1317.1 554.5L1318.1 557.5L1319.0 561.0L1319.8 564.9L1320.4 569.3L1320.8 574.1L1321.1 579.3L1321.3 584.8L1321.3 590.8L1321.2 597.0L1320.9 603.6L1320.4 610.4L1319.8 617.5L1319.1 624.8L1318.2 632.2L1317.2 639.9L1316.1 647.6L1314.8 655.4L1313.4 663.3L1311.9 671.2L1310.2 679.1L1308.5 687.0L1306.7 694.7L1304.8 702.4L1302.8 709.8L1300.7 717.2L1298.6 724.3L1296.4 731.1L1294.2 737.7L1291.9 744.0L1289.6 750.0L1287.3 755.6L1285.0 760.8L1282.7 765.6L1280.4 770.0L1278.1 774.0L1275.9 777.5L1273.7 780.6L1271.6 783.1M1315.9 552.0L1318.1 553.5L1320.1 555.4L1322.0 557.9L1323.7 560.8L1325.2 564.2L1326.6 568.0L1327.8 572.2L1328.9 576.9L1329.7 581.9L1330.4 587.3L1330.9 593.0L1331.1 599.1L1331.2 605.5L1331.1 612.1L1330.8 619.0L1330.3 626.0L1329.7 633.3L1328.8 640.7L1327.7 648.2L1326.5 655.8L1325.1 663.5L1323.5 671.1L1321.8 678.8L1319.9 686.4L1317.9 693.9L1315.7 701.3L1313.4 708.6L1311.0 715.7L1308.5 722.6L1305.9 729.2L1303.2 735.6L1300.4 741.7L1297.6 747.5L1294.7 753.0L1291.8 758.0L1288.8 762.7L1285.9 767.0L1282.9 770.9M1315.9 552.0L1319.0 552.4L1321.9 553.3L1324.7 554.6L1327.3 556.5L1329.7 558.8L1331.9 561.6L1334.0 564.8L1335.8 568.5L1337.4 572.6L1338.8 577.1L1340.0 582.0L1340.9 587.3L1341.6 592.9L1342.1 598.9L1342.3 605.1L1342.3 611.6L1342.1 618.3L1341.6 625.3L1340.8 632.4L1339.9 639.7L1338.7 647.1L1337.3 654.6L1335.6 662.1L1333.8 669.7L1331.7 677.3L1329.4 684.8L1327.0 692.2L1324.4 699.6L1321.6 706.8L1318.7 713.8L1315.6 720.7L1312.4 727.3L1309.1 733.6L1305.7 739.7L1302.2 745.5L1298.6 750.9L1295.0 756.0M1315.9 552.0L1319.8 551.3L1323.5 551.1L1327.0 551.4L1330.4 552.1L1333.5 553.4L1336.5 555.2L1339.3 557.4L1341.8 560.1L1344.1 563.3L1346.1 566.9L1347.9 571.0L1349.4 575.5L1350.7 580.3L1351.6 585.6L1352.3 591.2L1352.7 597.1L1352.8 603.3L1352.7 609.8L1352.2 616.5L1351.5 623.5L1350.5 630.7L1349.2 638.0L1347.6 645.4L1345.8 653.0L1343.7 660.6L1341.4 668.2L1338.8 675.8L1336.0 683.4L1333.0 690.9L1329.8 698.3L1326.4 705.6L1322.8 712.8L1319.1 719.7L1315.2 726.4L1311.2 732.9M1315.9 552.0L1320.4 550.2L1324.7 549.0L1328.9 548.2L1332.9 547.9L1336.7 548.2L1340.2 549.0L1343.6 550.3L1346.7 552.0L1349.5 554.3L1352.0 557.1L1354.3 560.3L1356.3 564.0L1358.0 568.2L1359.3 572.7L1360.4 577.7L1361.1 583.1L1361.6 588.8L1361.6 594.8L1361.4 601.2L1360.9 607.9L1360.0 614.8L1358.8 621.9L1357.3 629.3L1355.5 636.8L1353.4 644.4L1351.0 652.1L1348.3 659.9L1345.4 667.8L1342.2 675.6L1338.7 683.4L1335.1 691.1L1331.2 698.8M1315.9 552.0L1320.9 549.2L1325.7 547.0L1330.3 545.3L1334.7 544.1L1338.9 543.4L1342.9 543.2L1346.7 543.6L1350.2 544.5L1353.4 546.0L1356.3 547.9L1359.0 550.4L1361.3 553.4L1363.3 556.9L1364.9 560.8L1366.2 565.2L1367.2 570.1L1367.9 575.3L1368.1 581.0L1368.1 587.0L1367.7 593.4L1366.9 600.1L1365.8 607.1L1364.3 614.3L1362.5 621.8L1360.4 629.4L1358.0 637.3L1355.2 645.2L1352.2 653.3M1315.9 552.0L1321.1 548.4L1326.2 545.3L1331.1 542.7L1335.8 540.6L1340.2 539.1L1344.5 538.2L1348.5 537.8L1352.2 537.9L1355.7 538.6L1358.8 539.9L1361.7 541.7L1364.2 544.0L1366.3 546.9L1368.2 550.3L1369.7 554.2L1370.8 558.6L1371.5 563.5L1371.9 568.8L1372.0 574.5L1371.6 580.6L1370.9 587.1L1369.8 593.9M1315.9 552.0L1321.2 547.7L1326.3 543.8L1331.3 540.5L1336.0 537.8L1340.6 535.6L1344.9 534.0L1348.9 532.9L1352.7 532.4L1356.2 532.5L1359.4 533.2L1362.3 534.5L1364.9 536.3L1367.1 538.7L1369.0 541.6L1370.5 545.1L1371.7 549.1L1372.4 553.6M1315.9 552.0L1321.1 547.1L1326.0 542.8L1330.9 538.9L1335.5 535.7L1339.9 532.9L1344.1 530.8L1348.0 529.3L1351.7 528.3L1355.0 527.9L1358.1 528.2L1360.9 529.0L1363.4 530.4L1365.5 532.5L1367.3 535.1M1329.8 537.9L1329.4 537.7L1328.9 537.6L1328.3 537.5L1327.6 537.5L1326.9 537.6L1326.2 537.8L1325.4 538.0L1324.6 538.3L1323.7 538.6L1322.8 539.1L1321.9 539.6L1320.9 540.1L1319.9 540.7L1318.9 541.4L1317.9 542.1L1316.9 542.9L1315.8 543.7L1314.8 544.6L1313.7 545.5L1312.7 546.5L1311.7 547.5L1310.7 548.5L1309.7 549.5L1308.7 550.6L1307.8 551.7L1306.9 552.7L1306.0 553.8L1305.2 554.9L1304.4 556.0L1303.7 557.1L1303.0 558.2L1302.4 559.2L1301.8 560.3L1301.3 561.3L1300.8 562.2L1300.4 563.2L1300.1 564.1L1299.8 565.0L1299.6 565.8L1299.5 566.5L1299.4 567.3L1299.4 567.9L1299.5 568.5L1299.6 569.0L1299.8 569.5L1300.1 569.9L1300.4 570.3L1300.9 570.5L1301.3 570.8L1301.8 570.9L1302.4 570.9L1303.1 570.9L1303.7 570.9L1304.5 570.7L1305.3 570.5L1306.1 570.2L1307.0 569.8L1307.9 569.4L1308.8 568.9L1309.8 568.3L1310.8 567.7L1311.8 567.1L1312.8 566.3L1313.8 565.5L1314.9 564.7L1315.9 563.8L1317.0 562.9L1318.0 562.0L1319.0 561.0L1320.0 560.0L1321.0 558.9L1322.0 557.9L1322.9 556.8L1323.8 555.7L1324.7 554.6L1325.5 553.5L1326.3 552.4L1327.0 551.4L1327.7 550.3L1328.3 549.2L1328.9 548.2L1329.4 547.2L1329.9 546.2L1330.3 545.3L1330.6 544.4L1330.9 543.5L1331.1 542.7L1331.2 541.9L1331.3 541.2L1331.3 540.5L1331.2 539.9L1331.1 539.4L1330.9 538.9L1330.6 538.5L1330.2 538.2L1329.8 537.9M1342.1 528.8L1341.2 528.4L1340.1 528.1L1339.0 528.0L1337.7 528.0L1336.4 528.2L1334.9 528.5L1333.4 528.9L1331.8 529.5L1330.1 530.2L1328.3 531.1L1326.5 532.0L1324.6 533.1L1322.6 534.3L1320.7 535.6L1318.6 537.1L1316.6 538.6L1314.6 540.2L1312.5 542.0L1310.5 543.7L1308.5 545.6L1306.5 547.6L1304.5 549.5L1302.6 551.6L1300.7 553.7L1298.8 555.8L1297.1 557.9L1295.4 560.0L1293.7 562.2L1292.2 564.3L1290.8 566.5L1289.4 568.6L1288.2 570.6L1287.1 572.7L1286.0 574.6L1285.1 576.5L1284.4 578.4L1283.7 580.2L1283.2 581.9L1282.8 583.5L1282.5 585.0L1282.4 586.4L1282.4 587.7L1282.5 588.8L1282.8 589.9L1283.2 590.8L1283.8 591.6L1284.4 592.3L1285.2 592.8L1286.1 593.2L1287.1 593.5L1288.3 593.6L1289.5 593.6L1290.9 593.4L1292.3 593.1L1293.9 592.7L1295.5 592.1L1297.2 591.4L1299.0 590.6L1300.8 589.6L1302.7 588.5L1304.7 587.3L1306.6 586.0L1308.6 584.5L1310.7 583.0L1312.7 581.4L1314.8 579.7L1316.8 577.9L1318.8 576.0L1320.8 574.1L1322.8 572.1L1324.7 570.0L1326.6 568.0L1328.5 565.9L1330.2 563.7L1331.9 561.6L1333.5 559.4L1335.1 557.3L1336.5 555.2L1337.9 553.1L1339.1 551.0L1340.2 549.0L1341.3 547.0L1342.1 545.1L1342.9 543.2L1343.6 541.5L1344.1 539.8L1344.5 538.2L1344.8 536.7L1344.9 535.3L1344.9 534.0L1344.7 532.8L1344.5 531.7L1344.1 530.8L1343.5 530.0L1342.9 529.3L1342.1 528.8M1352.2 525.0L1350.8 524.4L1349.3 524.1L1347.7 523.9L1345.9 523.9L1343.9 524.2M1292.0 561.1L1289.4 564.2L1286.8 567.3L1284.3 570.4L1282.0 573.5L1279.8 576.6L1277.7 579.7L1275.7 582.7L1273.9 585.8L1272.3 588.7L1270.8 591.6L1269.5 594.3L1268.4 597.0L1267.4 599.6L1266.7 602.1L1266.1 604.4L1265.7 606.6L1265.5 608.6L1265.5 610.5L1265.7 612.2L1266.1 613.7L1266.7 615.1L1267.5 616.2L1268.5 617.2L1269.6 618.0L1270.9 618.6L1272.4 618.9L1274.1 619.1L1275.9 619.1L1277.8 618.9L1280.0 618.4L1282.2 617.8L1284.6 616.9L1287.0 615.9L1289.6 614.7L1292.3 613.3L1295.0 611.7L1297.8 610.0L1300.7 608.0L1303.6 606.0L1306.6 603.7L1309.5 601.4L1312.5 598.9L1315.5 596.3L1318.4 593.6L1321.3 590.8L1324.2 587.9L1327.0 584.9L1329.7 581.9L1332.4 578.8L1334.9 575.7L1337.4 572.6L1339.8 569.5L1342.0 566.4L1344.1 563.3L1346.0 560.3L1347.8 557.3L1349.5 554.3L1351.0 551.4L1352.3 548.7L1353.4 546.0L1354.3 543.4L1355.1 541.0L1355.7 538.6L1356.0 536.4L1356.2 534.4L1356.2 532.5L1356.0 530.8L1355.6 529.3L1355.0 527.9L1354.3 526.8L1353.3 525.8L1352.2 525.0M1264.9 596.3L1262.4 600.2L1260.1 604.0L1258.0 607.8L1256.1 611.4L1254.5 615.0L1253.0 618.4L1251.8 621.7L1250.9 624.8L1250.1 627.7L1249.7 630.5L1249.4 633.1L1249.4 635.5L1249.7 637.7L1250.2 639.6L1250.9 641.3L1251.9 642.8L1253.2 644.1L1254.6 645.0L1256.3 645.8L1258.2 646.3L1260.3 646.5L1262.6 646.5L1265.1 646.2L1267.8 645.6L1270.6 644.8L1273.6 643.7L1276.8 642.4L1280.1 640.9L1283.5 639.1L1287.0 637.1L1290.5 634.8L1294.2 632.4L1297.9 629.7L1301.7 626.9L1305.4 623.9L1309.2 620.7L1313.0 617.4L1316.7 614.0L1320.4 610.4L1324.1 606.7L1327.7 602.9L1331.1 599.1L1334.5 595.2L1337.8 591.3L1340.9 587.3L1343.9 583.3L1346.8 579.4L1349.4 575.5L1351.9 571.6L1354.2 567.8L1356.3 564.0L1358.2 560.4L1359.8 556.8L1361.3 553.4L1362.5 550.1L1363.4 547.0L1364.2 544.0L1364.6 541.3L1364.9 538.7L1364.9 536.3L1364.6 534.1L1364.1 532.2L1363.4 530.4L1362.4 529.0L1361.2 527.7M1244.9 629.1L1242.6 633.4L1240.7 637.6L1239.0 641.6L1237.6 645.5L1236.4 649.1L1235.6 652.6L1235.0 655.9L1234.7 658.9L1234.8 661.7L1235.1 664.3L1235.6 666.6L1236.5 668.6L1237.7 670.4L1239.1 671.8L1240.8 673.0L1242.8 673.9L1245.1 674.4L1247.5 674.7L1250.2 674.6L1253.2 674.3L1256.3 673.6L1259.7 672.7L1263.2 671.4L1266.9 669.9L1270.8 668.1L1274.8 666.0L1278.9 663.6L1283.1 661.0L1287.4 658.1L1291.7 655.0L1296.2 651.7L1300.6 648.1L1305.0 644.4L1309.5 640.5L1313.9 636.4L1318.2 632.2L1322.5 627.9L1326.7 623.5L1330.8 619.0L1334.8 614.4L1338.6 609.8L1342.3 605.1L1345.9 600.4L1349.2 595.8L1352.3 591.2L1355.2 586.6L1357.9 582.1L1360.4 577.7L1362.6 573.4L1364.6 569.2L1366.2 565.2L1367.7 561.4L1368.8 557.7L1369.7 554.2L1370.2 551.0L1370.5 547.9L1370.5 545.1L1370.2 542.5L1369.6 540.3M1228.6 661.4L1226.8 665.9L1225.2 670.2L1223.9 674.2L1223.0 678.1L1222.3 681.7L1222.0 685.1L1222.0 688.2L1222.4 691.1L1223.0 693.6L1224.0 695.9L1225.3 697.8L1226.9 699.4L1228.8 700.7L1231.0 701.7L1233.5 702.3L1236.2 702.6L1239.3 702.6L1242.5 702.2L1246.0 701.4L1249.7 700.4L1253.7 699.0L1257.8 697.3L1262.1 695.3L1266.5 692.9L1271.1 690.3L1275.7 687.4L1280.5 684.2L1285.4 680.7L1290.3 677.0L1295.2 673.1L1300.1 669.0L1305.1 664.6L1310.0 660.1L1314.8 655.4L1319.6 650.6L1324.2 645.7L1328.8 640.7L1333.2 635.6L1337.5 630.5L1341.6 625.3L1345.5 620.1L1349.2 614.9L1352.7 609.8L1355.9 604.7L1358.9 599.7L1361.6 594.8L1364.1 590.1L1366.3 585.4L1368.1 581.0L1369.7 576.7L1371.0 572.6L1371.9 568.8L1372.6 565.1L1372.9 561.7M1215.1 694.7L1213.8 699.1L1212.8 703.2L1212.1 707.0L1211.8 710.6L1211.8 713.9L1212.1 716.9L1212.8 719.6L1213.9 722.0L1215.2 724.1L1216.9 725.8L1219.0 727.2L1221.3 728.2L1223.9 728.9L1226.9 729.2L1230.1 729.1L1233.5 728.7L1237.2 728.0L1241.2 726.8L1245.4 725.4L1249.7 723.5L1254.3 721.4L1259.0 718.9L1263.8 716.1L1268.8 713.0L1273.9 709.6L1279.0 706.0L1284.2 702.0L1289.4 697.9L1294.7 693.5L1299.9 688.9L1305.1 684.1L1310.2 679.1L1315.3 674.0L1320.3 668.8L1325.1 663.5L1329.8 658.1L1334.3 652.6L1338.7 647.1L1342.8 641.6L1346.8 636.1L1350.5 630.7L1353.9 625.3L1357.1 620.0L1360.0 614.8L1362.6 609.7L1364.9 604.8L1366.9 600.1L1368.6 595.5L1369.9 591.2L1370.9 587.1L1371.6 583.2M1205.4 726.9L1204.7 730.8L1204.4 734.5L1204.4 737.8L1204.7 740.9L1205.5 743.7L1206.5 746.1L1207.9 748.2L1209.6 750.0L1211.7 751.4L1214.1 752.4L1216.8 753.1L1219.7 753.4L1223.0 753.3L1226.5 752.9L1230.3 752.1L1234.4 751.0L1238.6 749.5L1243.1 747.6L1247.7 745.5L1252.5 742.9L1257.4 740.1L1262.5 736.9L1267.7 733.5L1272.9 729.7L1278.2 725.7L1283.6 721.5L1288.9 717.0L1294.2 712.3L1299.5 707.4L1304.8 702.4L1309.9 697.2L1315.0 691.8L1319.9 686.4L1324.7 680.9L1329.3 675.3L1333.8 669.7L1338.0 664.1L1342.0 658.5L1345.8 653.0L1349.3 647.5L1352.5 642.1L1355.5 636.8L1358.1 631.6L1360.5 626.6L1362.5 621.8L1364.2 617.1L1365.6 612.7M1200.1 755.8L1200.1 759.1L1200.5 762.1L1201.2 764.8L1202.2 767.2L1203.6 769.2L1205.3 770.9L1207.3 772.3L1209.6 773.3L1212.3 774.0L1215.2 774.3L1218.4 774.3L1221.8 773.9L1225.6 773.1L1229.5 772.0L1233.7 770.5L1238.1 768.7L1242.6 766.5L1247.3 764.0L1252.2 761.3L1257.1 758.2L1262.2 754.8L1267.3 751.1L1272.5 747.2L1277.8 743.0L1283.0 738.6L1288.2 734.0L1293.4 729.2L1298.6 724.3L1303.6 719.2L1308.6 713.9L1313.4 708.6L1318.1 703.2L1322.7 697.7L1327.0 692.2L1331.2 686.7L1335.1 681.3L1338.8 675.8L1342.2 670.4L1345.4 665.1L1348.3 659.9L1350.9 654.9L1353.2 650.0L1355.2 645.2M1199.1 776.8L1199.5 779.6L1200.1 782.2L1201.1 784.4L1202.4 786.4L1204.0 788.0L1205.9 789.3L1208.1 790.2L1210.6 790.9L1213.3 791.2L1216.4 791.1L1219.6 790.7L1223.1 790.0L1226.8 788.9L1230.8 787.5L1234.9 785.8L1239.2 783.8L1243.6 781.5L1248.2 778.8L1252.8 775.9L1257.6 772.7L1262.5 769.3L1267.4 765.6L1272.3 761.6L1277.2 757.5L1282.2 753.2L1287.1 748.7L1291.9 744.0L1296.7 739.2L1301.3 734.3L1305.9 729.2L1310.3 724.2L1314.6 719.0L1318.7 713.8L1322.6 708.6L1326.3 703.5L1329.8 698.3L1333.0 693.3L1336.0 688.3L1338.7 683.4L1341.2 678.6M1203.3 797.2L1204.4 798.9L1205.9 800.4L1207.6 801.5L1209.6 802.4L1211.8 803.0L1214.3 803.2L1217.0 803.2L1219.9 802.8L1223.1 802.2L1226.4 801.2L1230.0 800.0L1233.7 798.4L1237.5 796.6L1241.5 794.5L1245.6 792.2L1249.8 789.5L1254.1 786.7L1258.5 783.5L1262.9 780.2L1267.3 776.7L1271.8 773.0L1276.2 769.1L1280.6 765.0L1285.0 760.8L1289.3 756.5L1293.5 752.0L1297.6 747.5L1301.6 742.9L1305.4 738.3L1309.1 733.6L1312.6 729.0L1315.9 724.3L1319.1 719.7L1322.0 715.1L1324.7 710.7M1212.3 808.7L1214.0 809.4L1215.9 809.9L1218.0 810.1L1220.3 810.1L1222.8 809.8L1225.5 809.2L1228.3 808.4L1231.3 807.3L1234.5 806.0L1237.8 804.5L1241.2 802.7L1244.7 800.7L1248.2 798.5L1251.9 796.0L1255.6 793.4L1259.3 790.5L1263.1 787.5L1266.9 784.4L1270.7 781.0L1274.4 777.6L1278.1 774.0L1281.8 770.3L1285.3 766.6L1288.8 762.7L1292.2 758.8L1295.5 754.9L1298.6 750.9L1301.6 747.0L1304.4 743.0M1230.2 810.8L1232.4 810.2L1234.8 809.3L1237.3 808.3L1239.8 807.1L1242.5 805.7L1245.3 804.1L1248.1 802.3L1250.9 800.4L1253.9 798.4L1256.8 796.1L1259.8 793.8L1262.7 791.3L1265.7 788.7L1268.6 786.0L1271.6 783.1L1274.4 780.3L1277.2 777.3" fill="none" stroke="#118a55" stroke-width="0.9" clip-path="url(#cp4)"/><path d="M1237.5 643.0L1241.3 635.6L1245.3 628.3L1249.4 621.1L1253.6 614.1L1257.8 607.1L1262.2 600.4L1266.6 593.8L1271.0 587.4L1275.5 581.3L1280.1 575.4L1284.6 569.7L1289.2 564.3L1293.7 559.2L1298.3 554.4L1302.7 549.9L1307.2 545.8L1311.6 541.9L1315.9 538.4L1320.1 535.3L1324.3 532.5L1328.3 530.1L1332.2 528.1L1336.0 526.4L1339.7 525.2L1343.2 524.3L1346.5 523.8L1349.7 523.7L1352.7 524.0L1355.6 524.7L1358.2 525.8L1360.6 527.3L1362.9 529.2L1364.9 531.5L1366.7 534.1L1368.3 537.1L1369.7 540.4L1370.8 544.1L1371.7 548.1L1372.4 552.5L1372.8 557.2L1373.0 562.2L1372.9 567.4L1372.6 573.0L1372.1 578.8L1371.4 584.9L1370.4 591.1L1369.1 597.6L1367.7 604.3L1366.0 611.1L1364.1 618.2L1362.0 625.3L1359.7 632.6L1357.2 639.9L1354.5 647.3L1351.6 654.8L1348.5 662.4L1345.2 669.9L1341.8 677.4L1338.2 684.9L1334.5 692.4L1330.7 699.8L1326.7 707.1L1322.6 714.3L1318.4 721.3L1314.2 728.3L1309.8 735.0L1305.4 741.6L1301.0 748.0L1296.5 754.1L1291.9 760.0L1287.4 765.7L1282.8 771.1L1278.3 776.2L1273.7 781.0L1269.3 785.5L1264.8 789.6L1260.4 793.5L1256.1 797.0L1251.9 800.1L1247.7 802.9L1243.7 805.3L1239.8 807.3L1236.0 809.0L1232.3 810.2L1228.8 811.1L1225.5 811.6L1222.3 811.7L1219.3 811.4L1216.4 810.7L1213.8 809.6L1211.4 808.1L1209.1 806.2L1207.1 803.9L1205.3 801.3L1203.7 798.3L1202.3 795.0L1201.2 791.3L1200.3 787.3L1199.6 782.9L1199.2 778.2L1199.0 773.2L1199.1 768.0L1199.4 762.4L1199.9 756.6L1200.6 750.5L1201.6 744.3L1202.9 737.8L1204.3 731.1L1206.0 724.3L1207.9 717.2L1210.0 710.1L1212.3 702.8L1214.8 695.5L1217.5 688.1L1220.4 680.6L1223.5 673.0L1226.8 665.5L1230.2 658.0L1233.8 650.5Z" fill="none" stroke="#1d9960" stroke-width="1.2"/></g><g font-size="11" fill="#dcdcdc"><text x="332" y="143" textLength="19" lengthAdjust="spacing">[+]</text><text x="354.500" y="143" textLength="66.500" lengthAdjust="spacing">[Perspective ]</text><text x="426" y="143" textLength="68" lengthAdjust="spacing">[High Quality ]</text><text x="499" y="143" textLength="70" lengthAdjust="spacing">[Edged Faces ]</text></g><rect x="844.5" y="407.5" width="62" height="17" fill="#ffffff" stroke="#767676"/><text x="849" y="420" font-size="11" fill="#444" letter-spacing="-0.2">Sphere002</text><g stroke-width="1.2"><path d="M353.500 905L334 894" stroke="#1f9a1f"/><path d="M353.500 905L372 890" stroke="#c02020"/><path d="M353.500 905V882" stroke="#2030d0"/></g><text x="334" y="896" font-size="10" fill="#1f9a1f">y</text><text x="369" y="891" font-size="10" fill="#c02020">x</text><text x="353" y="886" font-size="10" fill="#2030d0">z</text></svg>
<div style="left:1548px;top:159px;width:372px;height:773px;border:1.5px solid #383838;border-radius:5px;background:#444;"></div>
<div style="left:1549px;top:134px;width:31px;height:25px;background:#494949;border-radius:4px 4px 0 0;"></div>
<div style="left:1581px;top:133px;width:31px;height:27px;background:#444;border:1.5px solid #383838;border-bottom:none;border-radius:4px 4px 0 0;"></div>
<div style="left:1613px;top:134px;width:31px;height:25px;background:#494949;border-radius:4px 4px 0 0;"></div>
<div style="left:1645px;top:134px;width:31px;height:25px;background:#494949;border-radius:4px 4px 0 0;"></div>
<div style="left:1677px;top:134px;width:31px;height:25px;background:#494949;border-radius:4px 4px 0 0;"></div>
<div style="left:1709px;top:134px;width:31px;height:25px;background:#494949;border-radius:4px 4px 0 0;"></div>
<svg style="left:1554px;top:136px;" width="22" height="22" viewBox="0 0 22 22"><path d="M11 3v16M3 11h16" stroke="#d6d6d6" stroke-width="1.800"/></svg>
<svg style="left:1586px;top:136px;" width="22" height="22" viewBox="0 0 22 22"><rect x="4" y="4" width="14" height="14" fill="none" stroke="#3fc1c5" stroke-width="1.200"/><path d="M5 17c0 -7 4 -12 12 -12" fill="none" stroke="#d6d6d6" stroke-width="2"/><g fill="#444" stroke="#3fc1c5" stroke-width="1.200"><rect x="2.500" y="2.500" width="3" height="3"/><rect x="16.500" y="2.500" width="3" height="3"/><rect x="2.500" y="16.500" width="3" height="3"/><rect x="16.500" y="16.500" width="3" height="3"/></g></svg>
<svg style="left:1618px;top:136px;" width="22" height="22" viewBox="0 0 22 22"><rect x="5" y="3.500" width="12" height="5" fill="#d6d6d6"/><path d="M11 8.500v4M5 16v-3.500h12v3.500" fill="none" stroke="#3fc1c5" stroke-width="1.500"/><rect x="3.500" y="15.500" width="3.500" height="3.500" fill="#3fc1c5"/><rect x="15" y="15.500" width="3.500" height="3.500" fill="#3fc1c5"/></svg>
<svg style="left:1650px;top:136px;" width="22" height="22" viewBox="0 0 22 22"><circle cx="8" cy="11" r="6" fill="none" stroke="#3fc1c5" stroke-width="1"/><circle cx="10" cy="11" r="6" fill="none" stroke="#3fc1c5" stroke-width="1"/><circle cx="14" cy="11" r="6" fill="#d6d6d6"/></svg>
<svg style="left:1682px;top:136px;" width="22" height="22" viewBox="0 0 22 22"><rect x="3" y="4.500" width="16" height="10" fill="#d6d6d6"/><rect x="9" y="14.500" width="4" height="2.500" fill="#d6d6d6"/><rect x="7" y="17" width="8" height="1.500" fill="#d6d6d6"/></svg>
<svg style="left:1714px;top:136px;" width="22" height="22" viewBox="0 0 22 22"><path d="M4 4.500a4.200 4.200 0 0 1 5.500 5l9 8.500l-1.800 1.800l-9 -8.500a4.200 4.200 0 0 1 -5.200 -5.300l2.800 2.700l2.300 -0.700l0.500 -2.300z" fill="#d6d6d6"/></svg>
<div style="left:1554px;top:168px;width:156px;height:18px;background:#646464;border-radius:2px;"></div>
<div style="left:1558px;top:169.0px;height:16px;line-height:16px;font-size:11px;color:#e1e1e1;white-space:nowrap;">Sphere001</div>
<div style="left:1715px;top:168px;width:17px;height:18px;background:#ccf2f2;border:1px solid #2b2b2b;"></div>
<div style="left:1554px;top:198px;width:179px;height:18px;background:#646464;border-radius:2px;"></div>
<div style="left:1556px;top:199.0px;height:16px;line-height:16px;font-size:11px;color:#e1e1e1;white-space:nowrap;">Modifier List</div>
<svg style="left:1719px;top:205px;" width="8" height="5" viewBox="0 0 8 5"><path d="M0 0h7l-3.500 4.500z" fill="#e1e1e1"/></svg>
<div style="left:1554px;top:222px;width:179px;height:127px;border:1.500px solid #f0f0f0;background:#444;"></div>
<div style="left:1555px;top:223px;width:177px;height:17px;background:#444;border-bottom:1px solid #707070;"></div>
<div style="left:1575px;top:223px;width:157px;height:17px;background:#5c89c2;"></div>
<svg style="left:1559px;top:226px;" width="16" height="11" viewBox="0 0 16 11"><path d="M1 5.500c3.500 -6 10.500 -6 14 0c-3.500 6 -10.500 6 -14 0z" fill="#d6d6d6" stroke="#2e2e2e" stroke-width="0.600"/><circle cx="8" cy="5" r="2.800" fill="#333"/><circle cx="8.800" cy="4.200" r="1" fill="#d6d6d6"/></svg>
<div style="left:1596px;top:223.5px;height:16px;line-height:16px;font-size:11px;color:#ffffff;white-space:nowrap;">Morpher</div>
<div style="left:1555px;top:240px;width:177px;height:17px;border-bottom:1px solid #707070;"></div>
<svg style="left:1561px;top:244px;" width="8" height="9" viewBox="0 0 8 9"><path d="M1 0.500l5.500 4l-5.500 4z" fill="#d6d6d6"/></svg>
<div style="left:1576px;top:240.5px;height:16px;line-height:16px;font-size:11px;color:#ffffff;white-space:nowrap;">Editable Mesh</div>
<svg style="left:1556px;top:357px;" width="20" height="20" viewBox="0 0 20 20"><g transform="rotate(45 10 10)"><rect x="7" y="2" width="6" height="2" fill="#d6d6d6"/><rect x="8" y="4" width="4" height="6" fill="#d6d6d6"/><path d="M6 10h8v2h-8z" fill="#d6d6d6"/><path d="M10 12v6" stroke="#d6d6d6" stroke-width="1.200"/></g></svg>
<div style="left:1583px;top:357px;width:1.5px;height:18px;background:#1e1e1e;"></div>
<div style="left:1590px;top:355px;width:22px;height:22px;background:#5c89c2;border-radius:3px;"></div>
<svg style="left:1594px;top:357px;" width="14" height="18" viewBox="0 0 14 18"><path d="M2.500 2.500h9" stroke="#d6d6d6" stroke-width="1.600"/><path d="M5 3v12a2 2 0 0 0 4 0v-12z" fill="#d6d6d6" stroke="#2a2a2a" stroke-width="0.700"/><rect x="6" y="8" width="2" height="7" fill="#3fc1c5"/></svg>
<div style="left:1619px;top:357px;width:1.5px;height:18px;background:#1e1e1e;"></div>
<svg style="left:1628px;top:356px;" width="20" height="20" viewBox="0 0 20 20"><g fill="none" stroke="#5c5c5c" stroke-width="1.400"><circle cx="6" cy="6" r="4"/><circle cx="13" cy="10" r="4"/><circle cx="9" cy="14" r="4"/></g></svg>
<svg style="left:1654px;top:357px;" width="14" height="18" viewBox="0 0 14 18"><path d="M2 4h10M5 4v-1.500h4v1.500" stroke="#d6d6d6" stroke-width="1.400" fill="none"/><path d="M3 5.500h8l-0.600 10.500h-6.800z" fill="none" stroke="#d6d6d6" stroke-width="1.400"/><path d="M5.600 7.500v6.500M8.400 7.500v6.500" stroke="#d6d6d6" stroke-width="1.100"/></svg>
<div style="left:1679px;top:357px;width:1.5px;height:18px;background:#1e1e1e;"></div>
<svg style="left:1688px;top:356px;" width="18" height="20" viewBox="0 0 18 20"><rect x="2" y="4" width="12" height="14" fill="#333" stroke="#d6d6d6" stroke-width="1.400"/><g fill="#d6d6d6"><rect x="4" y="7" width="3" height="3"/><rect x="9" y="7" width="3" height="3"/><rect x="4" y="12" width="3" height="3"/><rect x="9" y="12" width="3" height="3"/></g><path d="M8 9l7 -8l2 1.700l-7 8l-2.800 1z" fill="#f5a81c"/></svg>
<div style="left:1558px;top:395px;width:75px;height:1px;background:#5c5c5c;"></div>
<div style="left:1653px;top:395px;width:75px;height:1px;background:#5c5c5c;"></div>
<svg style="left:1636px;top:393px;" width="14" height="4" viewBox="0 0 14 4"><g fill="#b0b0b0"><rect x="1" y="0" width="1" height="1"/><rect x="1" y="2" width="1" height="1"/><rect x="3" y="0" width="1" height="1"/><rect x="3" y="2" width="1" height="1"/><rect x="5" y="0" width="1" height="1"/><rect x="5" y="2" width="1" height="1"/><rect x="7" y="0" width="1" height="1"/><rect x="7" y="2" width="1" height="1"/><rect x="9" y="0" width="1" height="1"/><rect x="9" y="2" width="1" height="1"/><rect x="11" y="0" width="1" height="1"/><rect x="11" y="2" width="1" height="1"/></g></svg>
<div style="left:1728px;top:400px;width:7px;height:526px;background:#3b3b3b;border-radius:3px;"></div>
<div style="left:1553px;top:404px;width:172px;height:18px;background:#515151;border-radius:2px;"></div>
<svg style="left:1561px;top:409px;" width="6" height="9" viewBox="0 0 6 9"><path d="M0.500 0.500l4.500 3.800l-4.500 3.800z" fill="#b4b4b4"/></svg>
<div style="left:1571px;top:405.5px;height:16px;line-height:16px;font-size:12px;color:#ffffff;white-space:nowrap;font-weight:bold;letter-spacing:-0.35px;">Channel Color Legend</div>
<svg style="left:1711px;top:409px;" width="7" height="7" viewBox="0 0 7 7"><g fill="#7c7c7c"><rect x="0" y="0" width="1" height="1"/><rect x="0" y="2" width="1" height="1"/><rect x="0" y="4" width="1" height="1"/><rect x="2" y="0" width="1" height="1"/><rect x="2" y="2" width="1" height="1"/><rect x="2" y="4" width="1" height="1"/><rect x="4" y="0" width="1" height="1"/><rect x="4" y="2" width="1" height="1"/><rect x="4" y="4" width="1" height="1"/></g></svg>
<div style="left:1553px;top:426px;width:172px;height:18px;background:#515151;border-radius:2px;"></div>
<svg style="left:1561px;top:431px;" width="6" height="9" viewBox="0 0 6 9"><path d="M0.500 0.500l4.500 3.800l-4.500 3.800z" fill="#b4b4b4"/></svg>
<div style="left:1571px;top:427.5px;height:16px;line-height:16px;font-size:12px;color:#ffffff;white-space:nowrap;font-weight:bold;letter-spacing:-0.35px;">Global Parameters</div>
<svg style="left:1711px;top:431px;" width="7" height="7" viewBox="0 0 7 7"><g fill="#7c7c7c"><rect x="0" y="0" width="1" height="1"/><rect x="0" y="2" width="1" height="1"/><rect x="0" y="4" width="1" height="1"/><rect x="2" y="0" width="1" height="1"/><rect x="2" y="2" width="1" height="1"/><rect x="2" y="4" width="1" height="1"/><rect x="4" y="0" width="1" height="1"/><rect x="4" y="2" width="1" height="1"/><rect x="4" y="4" width="1" height="1"/></g></svg>
<div style="left:1553px;top:448px;width:172px;height:434px;background:#515151;border-radius:2px;"></div>
<svg style="left:1560px;top:455px;" width="8" height="6" viewBox="0 0 8 6"><path d="M0.500 0.500h7l-3.500 4.500z" fill="#b4b4b4"/></svg>
<div style="left:1571px;top:449.5px;height:16px;line-height:16px;font-size:12px;color:#ffffff;white-space:nowrap;font-weight:bold;letter-spacing:-0.35px;">Channel List</div>
<svg style="left:1711px;top:453px;" width="7" height="7" viewBox="0 0 7 7"><g fill="#7c7c7c"><rect x="0" y="0" width="1" height="1"/><rect x="0" y="2" width="1" height="1"/><rect x="0" y="4" width="1" height="1"/><rect x="2" y="0" width="1" height="1"/><rect x="2" y="2" width="1" height="1"/><rect x="2" y="4" width="1" height="1"/><rect x="4" y="0" width="1" height="1"/><rect x="4" y="2" width="1" height="1"/><rect x="4" y="4" width="1" height="1"/></g></svg>
<div style="left:1564px;top:472px;width:151px;height:19px;background:#646464;border-radius:2px;"></div>
<svg style="left:1700px;top:480px;" width="8" height="5" viewBox="0 0 8 5"><path d="M0 0h7l-3.500 4.500z" fill="#e1e1e1"/></svg>
<div style="left:1564px;top:498px;width:72px;height:18px;background:#585858;border-radius:3px;text-align:center;line-height:19.5px;color:#8a8a8a;font-size:11px;letter-spacing:-0.1px;white-space:nowrap;">Save Marker</div>
<div style="left:1642px;top:498px;width:72px;height:18px;background:#585858;border-radius:3px;text-align:center;line-height:19.5px;color:#8a8a8a;font-size:11px;letter-spacing:-0.1px;white-space:nowrap;">Del Marker</div>
<div style="left:1558px;top:524px;width:161px;height:1.5px;background:#e8e8e8;"></div>
<div style="left:1563px;top:531px;width:15px;height:208px;background:#404040;"></div>
<div style="left:1563px;top:531px;width:15px;height:19px;background:#f0f0f0;"></div>
<svg style="left:1566px;top:537px;" width="9" height="7" viewBox="0 0 9 7"><path d="M1 5.500l3.500 -4l3.500 4" fill="none" stroke="#333" stroke-width="1.400"/></svg>
<div style="left:1563px;top:550px;width:15px;height:15px;background:#cdcdcd;"></div>
<div style="left:1563px;top:722px;width:15px;height:17px;background:#f0f0f0;"></div>
<svg style="left:1566px;top:727px;" width="9" height="7" viewBox="0 0 9 7"><path d="M1 1.500l3.500 4l3.500 -4" fill="none" stroke="#333" stroke-width="1.400"/></svg>
<div style="left:1583px;top:533px;width:4px;height:16px;background:#00f000;border:1px solid #222;"></div>
<div style="left:1589px;top:533px;width:73px;height:16px;background:#5c89c2;border-radius:3px;text-align:center;line-height:17.5px;color:#ffffff;font-size:11px;letter-spacing:-0.1px;white-space:nowrap;">Sphere002</div>
<div style="left:1666px;top:533px;width:49px;height:16px;background:#646464;border-radius:2px;"></div>
<div style="left:1669px;top:533.0px;height:16px;line-height:16px;font-size:11px;color:#e1e1e1;white-space:nowrap;">0,0</div>
<svg style="left:1706px;top:536.0px;" width="6" height="10" viewBox="0 0 6 10"><path d="M0.500 4l2.500 -3.500l2.500 3.500zM0.500 6l2.500 3.500l2.500 -3.500z" fill="#e6e6e6"/></svg>
<div style="left:1583px;top:554px;width:4px;height:16px;background:#555;border:1px solid #2a2a2a;"></div>
<div style="left:1589px;top:554px;width:73px;height:16px;background:#646464;border-radius:3px;text-align:center;line-height:17.5px;color:#d6d6d6;font-size:11px;letter-spacing:-0.1px;white-space:nowrap;">- empty -</div>
<div style="left:1666px;top:554px;width:49px;height:16px;background:#646464;border-radius:2px;"></div>
<div style="left:1669px;top:554.0px;height:16px;line-height:16px;font-size:11px;color:#e1e1e1;white-space:nowrap;">0,0</div>
<svg style="left:1706px;top:557.0px;" width="6" height="10" viewBox="0 0 6 10"><path d="M0.500 4l2.500 -3.500l2.500 3.500zM0.500 6l2.500 3.500l2.500 -3.500z" fill="#e6e6e6"/></svg>
<div style="left:1583px;top:575px;width:4px;height:16px;background:#555;border:1px solid #2a2a2a;"></div>
<div style="left:1589px;top:575px;width:73px;height:16px;background:#646464;border-radius:3px;text-align:center;line-height:17.5px;color:#d6d6d6;font-size:11px;letter-spacing:-0.1px;white-space:nowrap;">- empty -</div>
<div style="left:1666px;top:575px;width:49px;height:16px;background:#646464;border-radius:2px;"></div>
<div style="left:1669px;top:575.0px;height:16px;line-height:16px;font-size:11px;color:#e1e1e1;white-space:nowrap;">0,0</div>
<svg style="left:1706px;top:578.0px;" width="6" height="10" viewBox="0 0 6 10"><path d="M0.500 4l2.500 -3.500l2.500 3.500zM0.500 6l2.500 3.500l2.500 -3.500z" fill="#e6e6e6"/></svg>
<div style="left:1583px;top:596px;width:4px;height:16px;background:#555;border:1px solid #2a2a2a;"></div>
<div style="left:1589px;top:596px;width:73px;height:16px;background:#646464;border-radius:3px;text-align:center;line-height:17.5px;color:#d6d6d6;font-size:11px;letter-spacing:-0.1px;white-space:nowrap;">- empty -</div>
<div style="left:1666px;top:596px;width:49px;height:16px;background:#646464;border-radius:2px;"></div>
<div style="left:1669px;top:596.0px;height:16px;line-height:16px;font-size:11px;color:#e1e1e1;white-space:nowrap;">0,0</div>
<svg style="left:1706px;top:599.0px;" width="6" height="10" viewBox="0 0 6 10"><path d="M0.500 4l2.500 -3.500l2.500 3.500zM0.500 6l2.500 3.500l2.500 -3.500z" fill="#e6e6e6"/></svg>
<div style="left:1583px;top:617px;width:4px;height:16px;background:#555;border:1px solid #2a2a2a;"></div>
<div style="left:1589px;top:617px;width:73px;height:16px;background:#646464;border-radius:3px;text-align:center;line-height:17.5px;color:#d6d6d6;font-size:11px;letter-spacing:-0.1px;white-space:nowrap;">- empty -</div>
<div style="left:1666px;top:617px;width:49px;height:16px;background:#646464;border-radius:2px;"></div>
<div style="left:1669px;top:617.0px;height:16px;line-height:16px;font-size:11px;color:#e1e1e1;white-space:nowrap;">0,0</div>
<svg style="left:1706px;top:620.0px;" width="6" height="10" viewBox="0 0 6 10"><path d="M0.500 4l2.500 -3.500l2.500 3.500zM0.500 6l2.500 3.500l2.500 -3.500z" fill="#e6e6e6"/></svg>
<div style="left:1583px;top:638px;width:4px;height:16px;background:#555;border:1px solid #2a2a2a;"></div>
<div style="left:1589px;top:638px;width:73px;height:16px;background:#646464;border-radius:3px;text-align:center;line-height:17.5px;color:#d6d6d6;font-size:11px;letter-spacing:-0.1px;white-space:nowrap;">- empty -</div>
<div style="left:1666px;top:638px;width:49px;height:16px;background:#646464;border-radius:2px;"></div>
<div style="left:1669px;top:638.0px;height:16px;line-height:16px;font-size:11px;color:#e1e1e1;white-space:nowrap;">0,0</div>
<svg style="left:1706px;top:641.0px;" width="6" height="10" viewBox="0 0 6 10"><path d="M0.500 4l2.500 -3.500l2.500 3.500zM0.500 6l2.500 3.500l2.500 -3.500z" fill="#e6e6e6"/></svg>
<div style="left:1583px;top:660px;width:4px;height:16px;background:#555;border:1px solid #2a2a2a;"></div>
<div style="left:1589px;top:660px;width:73px;height:16px;background:#646464;border-radius:3px;text-align:center;line-height:17.5px;color:#d6d6d6;font-size:11px;letter-spacing:-0.1px;white-space:nowrap;">- empty -</div>
<div style="left:1666px;top:660px;width:49px;height:16px;background:#646464;border-radius:2px;"></div>
<div style="left:1669px;top:660.0px;height:16px;line-height:16px;font-size:11px;color:#e1e1e1;white-space:nowrap;">0,0</div>
<svg style="left:1706px;top:663.0px;" width="6" height="10" viewBox="0 0 6 10"><path d="M0.500 4l2.500 -3.500l2.500 3.500zM0.500 6l2.500 3.500l2.500 -3.500z" fill="#e6e6e6"/></svg>
<div style="left:1583px;top:681px;width:4px;height:16px;background:#555;border:1px solid #2a2a2a;"></div>
<div style="left:1589px;top:681px;width:73px;height:16px;background:#646464;border-radius:3px;text-align:center;line-height:17.5px;color:#d6d6d6;font-size:11px;letter-spacing:-0.1px;white-space:nowrap;">- empty -</div>
<div style="left:1666px;top:681px;width:49px;height:16px;background:#646464;border-radius:2px;"></div>
<div style="left:1669px;top:681.0px;height:16px;line-height:16px;font-size:11px;color:#e1e1e1;white-space:nowrap;">0,0</div>
<svg style="left:1706px;top:684.0px;" width="6" height="10" viewBox="0 0 6 10"><path d="M0.500 4l2.500 -3.500l2.500 3.500zM0.500 6l2.500 3.500l2.500 -3.500z" fill="#e6e6e6"/></svg>
<div style="left:1583px;top:702px;width:4px;height:16px;background:#555;border:1px solid #2a2a2a;"></div>
<div style="left:1589px;top:702px;width:73px;height:16px;background:#646464;border-radius:3px;text-align:center;line-height:17.5px;color:#d6d6d6;font-size:11px;letter-spacing:-0.1px;white-space:nowrap;">- empty -</div>
<div style="left:1666px;top:702px;width:49px;height:16px;background:#646464;border-radius:2px;"></div>
<div style="left:1669px;top:702.0px;height:16px;line-height:16px;font-size:11px;color:#e1e1e1;white-space:nowrap;">0,0</div>
<svg style="left:1706px;top:705.0px;" width="6" height="10" viewBox="0 0 6 10"><path d="M0.500 4l2.500 -3.500l2.500 3.500zM0.500 6l2.500 3.500l2.500 -3.500z" fill="#e6e6e6"/></svg>
<div style="left:1583px;top:723px;width:4px;height:16px;background:#555;border:1px solid #2a2a2a;"></div>
<div style="left:1589px;top:723px;width:73px;height:16px;background:#646464;border-radius:3px;text-align:center;line-height:17.5px;color:#d6d6d6;font-size:11px;letter-spacing:-0.1px;white-space:nowrap;">- empty -</div>
<div style="left:1666px;top:723px;width:49px;height:16px;background:#646464;border-radius:2px;"></div>
<div style="left:1669px;top:723.0px;height:16px;line-height:16px;font-size:11px;color:#e1e1e1;white-space:nowrap;">0,0</div>
<svg style="left:1706px;top:726.0px;" width="6" height="10" viewBox="0 0 6 10"><path d="M0.500 4l2.500 -3.500l2.500 3.500zM0.500 6l2.500 3.500l2.500 -3.500z" fill="#e6e6e6"/></svg>
<div style="left:1563px;top:744px;width:152px;height:29px;border:1.500px solid #2e2e2e;border-radius:3px;background:#4b4b4b;"></div>
<div style="left:1584px;top:752.0px;height:16px;line-height:16px;font-size:11px;color:#ffffff;white-space:nowrap;">List Range :</div>
<div style="left:1656px;top:752.0px;height:16px;line-height:16px;font-size:11px;color:#ffffff;white-space:nowrap;">1 - 10</div>
<div style="left:1564px;top:779px;width:150px;height:22px;background:#646464;border-radius:3px;text-align:center;line-height:23.5px;color:#e1e1e1;font-size:11px;letter-spacing:-0.1px;white-space:nowrap;">Load Multiple Targets...</div>
<div style="left:1564px;top:805px;width:150px;height:22px;background:#646464;border-radius:3px;text-align:center;line-height:23.5px;color:#e1e1e1;font-size:11px;letter-spacing:-0.1px;white-space:nowrap;">Reload All Morph Targets</div>
<div style="left:1564px;top:831px;width:150px;height:22px;background:#646464;border-radius:3px;text-align:center;line-height:23.5px;color:#e1e1e1;font-size:11px;letter-spacing:-0.1px;white-space:nowrap;">Zero Active Channel Values</div>
<div style="left:1561px;top:862px;width:10px;height:10px;background:#5e5e5e;"></div>
<div style="left:1574px;top:859.5px;height:16px;line-height:16px;font-size:11px;color:#ffffff;white-space:nowrap;">Automatically reload targets</div>
<div style="left:1909px;top:163px;width:8px;height:763px;background:#3b3b3b;border-radius:3px;"></div>
<div style="left:1736px;top:163px;width:171px;height:544px;background:#515151;border-radius:2px;"></div>
<svg style="left:1743px;top:170px;" width="8" height="6" viewBox="0 0 8 6"><path d="M0.500 0.500h7l-3.500 4.500z" fill="#b4b4b4"/></svg>
<div style="left:1754px;top:165.5px;height:16px;line-height:16px;font-size:12px;color:#ffffff;white-space:nowrap;font-weight:bold;letter-spacing:-0.35px;">Channel Parameters</div>
<svg style="left:1893px;top:168px;" width="7" height="7" viewBox="0 0 7 7"><g fill="#7c7c7c"><rect x="0" y="0" width="1" height="1"/><rect x="0" y="2" width="1" height="1"/><rect x="0" y="4" width="1" height="1"/><rect x="2" y="0" width="1" height="1"/><rect x="2" y="2" width="1" height="1"/><rect x="2" y="4" width="1" height="1"/><rect x="4" y="0" width="1" height="1"/><rect x="4" y="2" width="1" height="1"/><rect x="4" y="4" width="1" height="1"/></g></svg>
<div style="left:1745px;top:188px;width:29px;height:20px;border:1.500px solid #e8e8e8;background:#444;text-align:center;line-height:18px;color:#e1e1e1;">1</div>
<div style="left:1776px;top:189px;width:120px;height:18px;background:#646464;border-radius:2px;"></div>
<div style="left:1780px;top:190.0px;height:16px;line-height:16px;font-size:11px;color:#e1e1e1;white-space:nowrap;">Sphere002</div>
<div style="left:1777px;top:212px;width:10px;height:10px;background:#646464;"></div>
<svg style="left:1778px;top:212px;" width="10" height="10" viewBox="0 0 10 10"><path d="M1.500 5l2.500 3l4.500 -6.500" fill="none" stroke="#fff" stroke-width="1.600"/></svg>
<div style="left:1789px;top:209.5px;height:16px;line-height:16px;font-size:11px;color:#ffffff;white-space:nowrap;">Channel is Active</div>
<div style="left:1746px;top:237px;width:151px;height:107px;border:1.500px solid #3a3a3a;border-radius:3px;"></div>
<div style="left:1749px;top:231px;width:104px;height:12px;background:#515151;"></div>
<div style="left:1750px;top:228.5px;height:16px;line-height:16px;font-size:11px;color:#ffffff;white-space:nowrap;">Create Morph Target</div>
<div style="left:1756px;top:254px;width:130px;height:22px;background:#5c89c2;border-radius:3px;text-align:center;line-height:23.5px;color:#ffffff;font-size:11px;letter-spacing:-0.25px;white-space:nowrap;">Pick Object from Scene</div>
<div style="left:1756px;top:282px;width:130px;height:22px;background:#585858;border-radius:3px;text-align:center;line-height:23.5px;color:#8a8a8a;font-size:11px;letter-spacing:-0.1px;white-space:nowrap;">Capture Current State</div>
<div style="left:1756px;top:315px;width:63px;height:21px;background:#646464;border-radius:3px;text-align:center;line-height:22.5px;color:#e1e1e1;font-size:11px;letter-spacing:-0.1px;white-space:nowrap;">Delete</div>
<div style="left:1824px;top:315px;width:63px;height:21px;background:#585858;border-radius:3px;text-align:center;line-height:22.5px;color:#8a8a8a;font-size:11px;letter-spacing:-0.1px;white-space:nowrap;">Extract</div>
<div style="left:1746px;top:357px;width:151px;height:103px;border:1.500px solid #3a3a3a;border-radius:3px;"></div>
<div style="left:1749px;top:351px;width:84px;height:12px;background:#515151;"></div>
<div style="left:1750px;top:348.5px;height:16px;line-height:16px;font-size:11px;color:#ffffff;white-space:nowrap;">Channel Settings</div>
<div style="left:1818px;top:372px;width:10px;height:10px;background:#5a5a5a;"></div>
<div style="left:1830px;top:368.8px;height:16px;line-height:16px;font-size:11px;color:#8c8c8c;white-space:nowrap;">Use Limits</div>
<div style="left:1746px;top:386.7px;height:16px;line-height:16px;font-size:11px;color:#ffffff;white-space:nowrap;width:70px;text-align:right;">Minimum :</div>
<div style="left:1746px;top:404.7px;height:16px;line-height:16px;font-size:11px;color:#ffffff;white-space:nowrap;width:70px;text-align:right;">Maximum :</div>
<div style="left:1818px;top:389px;width:64px;height:14px;background:#595959;border-radius:2px;"></div>
<div style="left:1821px;top:388.0px;height:16px;line-height:16px;font-size:11px;color:#8c8c8c;white-space:nowrap;">0,0</div>
<svg style="left:1873px;top:391.0px;" width="6" height="10" viewBox="0 0 6 10"><path d="M0.500 4l2.500 -3.500l2.500 3.500zM0.500 6l2.500 3.500l2.500 -3.500z" fill="#9a9a9a"/></svg>
<div style="left:1818px;top:407px;width:64px;height:14px;background:#595959;border-radius:2px;"></div>
<div style="left:1821px;top:406.0px;height:16px;line-height:16px;font-size:11px;color:#8c8c8c;white-space:nowrap;">100,0</div>
<svg style="left:1873px;top:409.0px;" width="6" height="10" viewBox="0 0 6 10"><path d="M0.500 4l2.500 -3.500l2.500 3.500zM0.500 6l2.500 3.500l2.500 -3.500z" fill="#9a9a9a"/></svg>
<div style="left:1756px;top:429px;width:130px;height:22px;background:#646464;border-radius:3px;text-align:center;line-height:23.5px;color:#e1e1e1;font-size:11px;letter-spacing:-0.1px;white-space:nowrap;">Use Vertex Selection</div>
<div style="left:1746px;top:474px;width:151px;height:195px;border:1.500px solid #3a3a3a;border-radius:3px;"></div>
<div style="left:1749px;top:468px;width:93px;height:12px;background:#515151;"></div>
<div style="left:1750px;top:465.5px;height:16px;line-height:16px;font-size:11px;color:#ffffff;white-space:nowrap;">Progressive Morph</div>
<div style="left:1757px;top:492.0px;height:16px;line-height:16px;font-size:11px;color:#ffffff;white-space:nowrap;">Target List</div>
<div style="left:1835px;top:485px;width:48px;height:23px;background:#474747;"></div>
<svg style="left:1838px;top:488px;" width="42" height="17" viewBox="0 0 42 17"><g fill="none" stroke="#000" stroke-width="1.500"><path d="M8 15v-12M3.500 7.500l4.500 -5l4.500 5"/><path d="M33 2v12M28.500 9.500l4.500 5l4.500 -5"/></g></svg>
<div style="left:1749px;top:511px;width:143px;height:80px;border:1.500px solid #f0f0f0;background:#444;"></div>
<div style="left:1751px;top:512px;width:139px;height:13px;background:#0078d7;"></div>
<div style="left:1751px;top:512.5px;height:13px;line-height:13px;font-size:11px;color:#ffffff;white-space:nowrap;">Sphere002</div>
<div style="left:1751px;top:525.5px;height:13px;line-height:13px;font-size:11px;color:#ffffff;white-space:nowrap;">Sphere003</div>
<div style="left:1751px;top:538.5px;height:13px;line-height:13px;font-size:11px;color:#ffffff;white-space:nowrap;">Sphere004</div>
<div style="left:1752px;top:593.0px;height:16px;line-height:16px;font-size:11px;color:#ffffff;white-space:nowrap;width:70px;text-align:right;">Target %:</div>
<div style="left:1752px;top:612.5px;height:16px;line-height:16px;font-size:11px;color:#ffffff;white-space:nowrap;width:66px;text-align:right;">Tension :</div>
<div style="left:1824px;top:595.5px;width:64px;height:14px;background:#646464;border-radius:2px;"></div>
<div style="left:1827px;top:594.5px;height:16px;line-height:16px;font-size:11px;color:#e1e1e1;white-space:nowrap;">33,333</div>
<svg style="left:1879px;top:597.5px;" width="6" height="10" viewBox="0 0 6 10"><path d="M0.500 4l2.500 -3.500l2.500 3.500zM0.500 6l2.500 3.500l2.500 -3.500z" fill="#e6e6e6"/></svg>
<div style="left:1824px;top:615.5px;width:64px;height:14px;background:#646464;border-radius:2px;"></div>
<div style="left:1827px;top:614.5px;height:16px;line-height:16px;font-size:11px;color:#e1e1e1;white-space:nowrap;">0,5</div>
<svg style="left:1879px;top:617.5px;" width="6" height="10" viewBox="0 0 6 10"><path d="M0.500 4l2.500 -3.500l2.500 3.500zM0.500 6l2.500 3.500l2.500 -3.500z" fill="#e6e6e6"/></svg>
<div style="left:1758px;top:639px;width:127px;height:17px;background:#646464;border-radius:3px;text-align:center;line-height:18.5px;color:#e1e1e1;font-size:11px;letter-spacing:-0.1px;white-space:nowrap;">Delete Target</div>
<div style="left:1746px;top:676px;width:151px;height:22px;background:#646464;border-radius:3px;text-align:center;line-height:23.5px;color:#e1e1e1;font-size:11px;letter-spacing:-0.1px;white-space:nowrap;">Reload Morph Target</div>
<div style="left:1736px;top:711px;width:171px;height:18px;background:#515151;border-radius:2px;"></div>
<svg style="left:1744px;top:716px;" width="6" height="9" viewBox="0 0 6 9"><path d="M0.500 0.500l4.500 3.800l-4.500 3.800z" fill="#b4b4b4"/></svg>
<div style="left:1754px;top:712.5px;height:16px;line-height:16px;font-size:12px;color:#ffffff;white-space:nowrap;font-weight:bold;letter-spacing:-0.35px;">Advanced Parameters</div>
<svg style="left:1893px;top:716px;" width="7" height="7" viewBox="0 0 7 7"><g fill="#7c7c7c"><rect x="0" y="0" width="1" height="1"/><rect x="0" y="2" width="1" height="1"/><rect x="0" y="4" width="1" height="1"/><rect x="2" y="0" width="1" height="1"/><rect x="2" y="2" width="1" height="1"/><rect x="2" y="4" width="1" height="1"/><rect x="4" y="0" width="1" height="1"/><rect x="4" y="2" width="1" height="1"/><rect x="4" y="4" width="1" height="1"/></g></svg>
<div style="left:2px;top:937px;width:3px;height:48px;background:linear-gradient(#b4b4b4 50%,transparent 50%) 0 0/1px 2px repeat-y,linear-gradient(#b4b4b4 50%,transparent 50%) 2px 1px/1px 2px repeat-y;"></div>
<div style="left:10px;top:937px;width:15px;height:16px;background:#646464;border-radius:2px;text-align:center;line-height:15px;color:#d0d0d0;font-size:11px;">&lt;</div>
<div style="left:26px;top:937px;width:123px;height:16px;background:#646464;border-radius:3px;text-align:center;line-height:18px;color:#e1e1e1;font-size:11px;">0 / 100</div>
<div style="left:151px;top:937px;width:15px;height:16px;background:#646464;border-radius:2px;text-align:center;line-height:15px;color:#d0d0d0;font-size:11px;">&gt;</div>
<div style="left:9px;top:957px;width:1911px;height:1.5px;background:#111;"></div>
<div style="left:59px;top:958px;width:1811px;height:26px;background:#2a2a2a;"></div>
<svg style="left:0px;top:0px;" width="1920" height="1040" viewBox="0 0 1920 1040"><rect x="65.8" y="958" width="1" height="26" fill="#8a8a8a" fill-opacity="0.55"/><rect x="65.8" y="958" width="1" height="12" fill="#8a8a8a"/><rect x="83.8" y="958" width="1" height="12" fill="#8a8a8a"/><rect x="101.7" y="958" width="1" height="12" fill="#8a8a8a"/><rect x="119.7" y="958" width="1" height="12" fill="#8a8a8a"/><rect x="137.7" y="958" width="1" height="12" fill="#8a8a8a"/><rect x="155.6" y="958" width="1" height="26" fill="#8a8a8a" fill-opacity="0.55"/><rect x="155.6" y="958" width="1" height="12" fill="#8a8a8a"/><text x="155.6" y="981" font-size="11" fill="#d8d8d8" text-anchor="middle" letter-spacing="-0.2">5</text><rect x="173.6" y="958" width="1" height="12" fill="#8a8a8a"/><rect x="191.6" y="958" width="1" height="12" fill="#8a8a8a"/><rect x="209.6" y="958" width="1" height="12" fill="#8a8a8a"/><rect x="227.5" y="958" width="1" height="12" fill="#8a8a8a"/><rect x="245.5" y="958" width="1" height="26" fill="#8a8a8a" fill-opacity="0.55"/><rect x="245.5" y="958" width="1" height="12" fill="#8a8a8a"/><text x="245.5" y="981" font-size="11" fill="#d8d8d8" text-anchor="middle" letter-spacing="-0.2">10</text><rect x="263.5" y="958" width="1" height="12" fill="#8a8a8a"/><rect x="281.4" y="958" width="1" height="12" fill="#8a8a8a"/><rect x="299.4" y="958" width="1" height="12" fill="#8a8a8a"/><rect x="317.4" y="958" width="1" height="12" fill="#8a8a8a"/><rect x="335.3" y="958" width="1" height="26" fill="#8a8a8a" fill-opacity="0.55"/><rect x="335.3" y="958" width="1" height="12" fill="#8a8a8a"/><text x="335.3" y="981" font-size="11" fill="#d8d8d8" text-anchor="middle" letter-spacing="-0.2">15</text><rect x="353.3" y="958" width="1" height="12" fill="#8a8a8a"/><rect x="371.3" y="958" width="1" height="12" fill="#8a8a8a"/><rect x="389.3" y="958" width="1" height="12" fill="#8a8a8a"/><rect x="407.2" y="958" width="1" height="12" fill="#8a8a8a"/><rect x="425.2" y="958" width="1" height="26" fill="#8a8a8a" fill-opacity="0.55"/><rect x="425.2" y="958" width="1" height="12" fill="#8a8a8a"/><text x="425.2" y="981" font-size="11" fill="#d8d8d8" text-anchor="middle" letter-spacing="-0.2">20</text><rect x="443.2" y="958" width="1" height="12" fill="#8a8a8a"/><rect x="461.1" y="958" width="1" height="12" fill="#8a8a8a"/><rect x="479.1" y="958" width="1" height="12" fill="#8a8a8a"/><rect x="497.1" y="958" width="1" height="12" fill="#8a8a8a"/><rect x="515.0" y="958" width="1" height="26" fill="#8a8a8a" fill-opacity="0.55"/><rect x="515.0" y="958" width="1" height="12" fill="#8a8a8a"/><text x="515.0" y="981" font-size="11" fill="#d8d8d8" text-anchor="middle" letter-spacing="-0.2">25</text><rect x="533.0" y="958" width="1" height="12" fill="#8a8a8a"/><rect x="551.0" y="958" width="1" height="12" fill="#8a8a8a"/><rect x="569.0" y="958" width="1" height="12" fill="#8a8a8a"/><rect x="586.9" y="958" width="1" height="12" fill="#8a8a8a"/><rect x="604.9" y="958" width="1" height="26" fill="#8a8a8a" fill-opacity="0.55"/><rect x="604.9" y="958" width="1" height="12" fill="#8a8a8a"/><text x="604.9" y="981" font-size="11" fill="#d8d8d8" text-anchor="middle" letter-spacing="-0.2">30</text><rect x="622.9" y="958" width="1" height="12" fill="#8a8a8a"/><rect x="640.8" y="958" width="1" height="12" fill="#8a8a8a"/><rect x="658.8" y="958" width="1" height="12" fill="#8a8a8a"/><rect x="676.8" y="958" width="1" height="12" fill="#8a8a8a"/><rect x="694.7" y="958" width="1" height="26" fill="#8a8a8a" fill-opacity="0.55"/><rect x="694.7" y="958" width="1" height="12" fill="#8a8a8a"/><text x="694.7" y="981" font-size="11" fill="#d8d8d8" text-anchor="middle" letter-spacing="-0.2">35</text><rect x="712.7" y="958" width="1" height="12" fill="#8a8a8a"/><rect x="730.7" y="958" width="1" height="12" fill="#8a8a8a"/><rect x="748.7" y="958" width="1" height="12" fill="#8a8a8a"/><rect x="766.6" y="958" width="1" height="12" fill="#8a8a8a"/><rect x="784.6" y="958" width="1" height="26" fill="#8a8a8a" fill-opacity="0.55"/><rect x="784.6" y="958" width="1" height="12" fill="#8a8a8a"/><text x="784.6" y="981" font-size="11" fill="#d8d8d8" text-anchor="middle" letter-spacing="-0.2">40</text><rect x="802.6" y="958" width="1" height="12" fill="#8a8a8a"/><rect x="820.5" y="958" width="1" height="12" fill="#8a8a8a"/><rect x="838.5" y="958" width="1" height="12" fill="#8a8a8a"/><rect x="856.5" y="958" width="1" height="12" fill="#8a8a8a"/><rect x="874.4" y="958" width="1" height="26" fill="#8a8a8a" fill-opacity="0.55"/><rect x="874.4" y="958" width="1" height="12" fill="#8a8a8a"/><text x="874.4" y="981" font-size="11" fill="#d8d8d8" text-anchor="middle" letter-spacing="-0.2">45</text><rect x="892.4" y="958" width="1" height="12" fill="#8a8a8a"/><rect x="910.4" y="958" width="1" height="12" fill="#8a8a8a"/><rect x="928.4" y="958" width="1" height="12" fill="#8a8a8a"/><rect x="946.3" y="958" width="1" height="12" fill="#8a8a8a"/><rect x="964.3" y="958" width="1" height="26" fill="#8a8a8a" fill-opacity="0.55"/><rect x="964.3" y="958" width="1" height="12" fill="#8a8a8a"/><text x="964.3" y="981" font-size="11" fill="#d8d8d8" text-anchor="middle" letter-spacing="-0.2">50</text><rect x="982.3" y="958" width="1" height="12" fill="#8a8a8a"/><rect x="1000.2" y="958" width="1" height="12" fill="#8a8a8a"/><rect x="1018.2" y="958" width="1" height="12" fill="#8a8a8a"/><rect x="1036.2" y="958" width="1" height="12" fill="#8a8a8a"/><rect x="1054.1" y="958" width="1" height="26" fill="#8a8a8a" fill-opacity="0.55"/><rect x="1054.1" y="958" width="1" height="12" fill="#8a8a8a"/><text x="1054.1" y="981" font-size="11" fill="#d8d8d8" text-anchor="middle" letter-spacing="-0.2">55</text><rect x="1072.1" y="958" width="1" height="12" fill="#8a8a8a"/><rect x="1090.1" y="958" width="1" height="12" fill="#8a8a8a"/><rect x="1108.1" y="958" width="1" height="12" fill="#8a8a8a"/><rect x="1126.0" y="958" width="1" height="12" fill="#8a8a8a"/><rect x="1144.0" y="958" width="1" height="26" fill="#8a8a8a" fill-opacity="0.55"/><rect x="1144.0" y="958" width="1" height="12" fill="#8a8a8a"/><text x="1144.0" y="981" font-size="11" fill="#d8d8d8" text-anchor="middle" letter-spacing="-0.2">60</text><rect x="1162.0" y="958" width="1" height="12" fill="#8a8a8a"/><rect x="1179.9" y="958" width="1" height="12" fill="#8a8a8a"/><rect x="1197.9" y="958" width="1" height="12" fill="#8a8a8a"/><rect x="1215.9" y="958" width="1" height="12" fill="#8a8a8a"/><rect x="1233.8" y="958" width="1" height="26" fill="#8a8a8a" fill-opacity="0.55"/><rect x="1233.8" y="958" width="1" height="12" fill="#8a8a8a"/><text x="1233.8" y="981" font-size="11" fill="#d8d8d8" text-anchor="middle" letter-spacing="-0.2">65</text><rect x="1251.8" y="958" width="1" height="12" fill="#8a8a8a"/><rect x="1269.8" y="958" width="1" height="12" fill="#8a8a8a"/><rect x="1287.8" y="958" width="1" height="12" fill="#8a8a8a"/><rect x="1305.7" y="958" width="1" height="12" fill="#8a8a8a"/><rect x="1323.7" y="958" width="1" height="26" fill="#8a8a8a" fill-opacity="0.55"/><rect x="1323.7" y="958" width="1" height="12" fill="#8a8a8a"/><text x="1323.7" y="981" font-size="11" fill="#d8d8d8" text-anchor="middle" letter-spacing="-0.2">70</text><rect x="1341.7" y="958" width="1" height="12" fill="#8a8a8a"/><rect x="1359.6" y="958" width="1" height="12" fill="#8a8a8a"/><rect x="1377.6" y="958" width="1" height="12" fill="#8a8a8a"/><rect x="1395.6" y="958" width="1" height="12" fill="#8a8a8a"/><rect x="1413.5" y="958" width="1" height="26" fill="#8a8a8a" fill-opacity="0.55"/><rect x="1413.5" y="958" width="1" height="12" fill="#8a8a8a"/><text x="1413.5" y="981" font-size="11" fill="#d8d8d8" text-anchor="middle" letter-spacing="-0.2">75</text><rect x="1431.5" y="958" width="1" height="12" fill="#8a8a8a"/><rect x="1449.5" y="958" width="1" height="12" fill="#8a8a8a"/><rect x="1467.5" y="958" width="1" height="12" fill="#8a8a8a"/><rect x="1485.4" y="958" width="1" height="12" fill="#8a8a8a"/><rect x="1503.4" y="958" width="1" height="26" fill="#8a8a8a" fill-opacity="0.55"/><rect x="1503.4" y="958" width="1" height="12" fill="#8a8a8a"/><text x="1503.4" y="981" font-size="11" fill="#d8d8d8" text-anchor="middle" letter-spacing="-0.2">80</text><rect x="1521.4" y="958" width="1" height="12" fill="#8a8a8a"/><rect x="1539.3" y="958" width="1" height="12" fill="#8a8a8a"/><rect x="1557.3" y="958" width="1" height="12" fill="#8a8a8a"/><rect x="1575.3" y="958" width="1" height="12" fill="#8a8a8a"/><rect x="1593.2" y="958" width="1" height="26" fill="#8a8a8a" fill-opacity="0.55"/><rect x="1593.2" y="958" width="1" height="12" fill="#8a8a8a"/><text x="1593.2" y="981" font-size="11" fill="#d8d8d8" text-anchor="middle" letter-spacing="-0.2">85</text><rect x="1611.2" y="958" width="1" height="12" fill="#8a8a8a"/><rect x="1629.2" y="958" width="1" height="12" fill="#8a8a8a"/><rect x="1647.2" y="958" width="1" height="12" fill="#8a8a8a"/><rect x="1665.1" y="958" width="1" height="12" fill="#8a8a8a"/><rect x="1683.1" y="958" width="1" height="26" fill="#8a8a8a" fill-opacity="0.55"/><rect x="1683.1" y="958" width="1" height="12" fill="#8a8a8a"/><text x="1683.1" y="981" font-size="11" fill="#d8d8d8" text-anchor="middle" letter-spacing="-0.2">90</text><rect x="1701.1" y="958" width="1" height="12" fill="#8a8a8a"/><rect x="1719.0" y="958" width="1" height="12" fill="#8a8a8a"/><rect x="1737.0" y="958" width="1" height="12" fill="#8a8a8a"/><rect x="1755.0" y="958" width="1" height="12" fill="#8a8a8a"/><rect x="1772.9" y="958" width="1" height="26" fill="#8a8a8a" fill-opacity="0.55"/><rect x="1772.9" y="958" width="1" height="12" fill="#8a8a8a"/><text x="1772.9" y="981" font-size="11" fill="#d8d8d8" text-anchor="middle" letter-spacing="-0.2">95</text><rect x="1790.9" y="958" width="1" height="12" fill="#8a8a8a"/><rect x="1808.9" y="958" width="1" height="12" fill="#8a8a8a"/><rect x="1826.9" y="958" width="1" height="12" fill="#8a8a8a"/><rect x="1844.8" y="958" width="1" height="12" fill="#8a8a8a"/><rect x="1862.8" y="958" width="1" height="26" fill="#8a8a8a" fill-opacity="0.55"/><rect x="1862.8" y="958" width="1" height="12" fill="#8a8a8a"/><text x="1862.8" y="981" font-size="11" fill="#d8d8d8" text-anchor="middle" letter-spacing="-0.2">100</text><rect x="63" y="958" width="7" height="26" fill="#8d7a25"/><rect x="64" y="959" width="5" height="24" fill="#a89330" fill-opacity="0.6"/><text x="65.500" y="981" font-size="11" fill="#c9b44a" text-anchor="middle">0</text></svg>
<svg style="left:22px;top:963px;" width="18" height="16" viewBox="0 0 18 16"><g fill="#bbb"><rect x="0" y="2" width="3" height="1"/><rect x="0" y="4" width="3" height="1"/><rect x="0" y="6" width="3" height="1"/><rect x="0" y="8" width="3" height="1"/><rect x="0" y="10" width="3" height="1"/></g><path d="M5 8c2 -8 4 -8 6 0s3 6 5 0" fill="none" stroke="#3fc1c5" stroke-width="1.300"/></svg>
<div style="left:4px;top:989px;width:99px;height:24px;background:#dcc6c6;border:2px solid #e8e8e8;border-right-color:#9a9a9a;"></div>
<div style="left:4px;top:1013px;width:99px;height:24px;background:#555;border:2px solid #cfcfcf;"></div>
<div style="left:106px;top:987px;width:1.5px;height:50px;background:#222;"></div>
<div style="left:112px;top:994.0px;height:16px;line-height:16px;font-size:11px;color:#ffffff;white-space:nowrap;">1 Object Selected</div>
<div style="left:144px;top:1019.0px;height:16px;line-height:16px;font-size:11px;color:#e1e1e1;white-space:nowrap;">Click</div>
<div style="left:8px;top:1013px;width:144px;height:27px;background:#ffffff;"></div>
<div style="left:15px;top:1013px;width:45px;height:27px;background:#e5e5e5;"></div>
<svg style="left:17px;top:1017px;" width="16" height="17" viewBox="0 0 16 17"><rect x="0" y="0" width="15" height="16" fill="#cfe9ec"/><text x="7.500" y="12" font-size="12" font-weight="bold" fill="#1e8a96" text-anchor="middle">3</text></svg>
<svg style="left:33px;top:1020px;" width="12" height="12" viewBox="0 0 12 12"><path d="M0.500 3.500h7v7h-7z M2.500 3.500v-2h7v7h-2" stroke="#000" stroke-width="1" fill="none"/></svg>
<svg style="left:78px;top:1020px;" width="12" height="12" viewBox="0 0 12 12"><rect x="1" y="1" width="9" height="9" fill="none" stroke="#666" stroke-width="1"/></svg>
<svg style="left:123px;top:1020px;" width="12" height="12" viewBox="0 0 12 12"><path d="M1 1l9 9M10 1l-9 9" stroke="#666" stroke-width="1"/></svg>
<div style="left:168px;top:1013px;width:144px;height:27px;background:#ffffff;"></div>
<svg style="left:177px;top:1017px;" width="16" height="17" viewBox="0 0 16 17"><rect x="0" y="0" width="15" height="16" fill="#cfe9ec"/><text x="7.500" y="12" font-size="12" font-weight="bold" fill="#1e8a96" text-anchor="middle">3</text></svg>
<svg style="left:193px;top:1020px;" width="12" height="12" viewBox="0 0 12 12"><path d="M0.500 3.500h7v7h-7z M2.500 3.500v-2h7v7h-2" stroke="#8a8a8a" stroke-width="1" fill="none"/></svg>
<svg style="left:238px;top:1020px;" width="12" height="12" viewBox="0 0 12 12"><rect x="1" y="1" width="9" height="9" fill="none" stroke="#666" stroke-width="1"/></svg>
<svg style="left:283px;top:1020px;" width="12" height="12" viewBox="0 0 12 12"><path d="M1 1l9 9M10 1l-9 9" stroke="#666" stroke-width="1"/></svg>
<svg style="left:1024px;top:993px;" width="16" height="16" viewBox="0 0 16 16"><path d="M1 4v-3h3M12 1h3v3M15 12v3h-3M4 15h-3v-3" fill="none" stroke="#d6d6d6" stroke-width="1.200"/><rect x="4.500" y="4.500" width="7" height="7" fill="#3fc1c5"/></svg>
<svg style="left:1053px;top:992px;" width="12" height="18" viewBox="0 0 12 18"><rect x="1.500" y="8" width="9" height="8" rx="1" fill="#d6d6d6"/><path d="M3.500 8v-3a2.500 2.500 0 0 1 5 0v3" fill="none" stroke="#d6d6d6" stroke-width="1.600"/><rect x="5.200" y="10.500" width="1.600" height="3.500" fill="#444"/></svg>
<svg style="left:1078px;top:993px;" width="16" height="16" viewBox="0 0 16 16"><rect x="1" y="1" width="14" height="14" fill="#333" stroke="#d6d6d6" stroke-width="1.400"/><circle cx="8" cy="8" r="3.500" fill="#d6d6d6"/><path d="M8 1v14M1 8h14" stroke="#d6d6d6" stroke-width="1.200"/></svg>
<div style="left:1101px;top:994.0px;height:16px;line-height:16px;font-size:11px;color:#ffffff;white-space:nowrap;">X:</div>
<div style="left:1115px;top:993px;width:57px;height:17px;background:#5a5a5a;border-radius:2px;"></div>
<div style="left:1118px;top:994.5px;height:16px;line-height:16px;font-size:11px;color:#8c8c8c;white-space:nowrap;">24,453</div>
<div style="left:1185px;top:994.0px;height:16px;line-height:16px;font-size:11px;color:#ffffff;white-space:nowrap;">Y:</div>
<div style="left:1199px;top:993px;width:57px;height:17px;background:#5a5a5a;border-radius:2px;"></div>
<div style="left:1202px;top:994.5px;height:16px;line-height:16px;font-size:11px;color:#8c8c8c;white-space:nowrap;">-0,483</div>
<div style="left:1269px;top:994.0px;height:16px;line-height:16px;font-size:11px;color:#ffffff;white-space:nowrap;">Z:</div>
<div style="left:1283px;top:993px;width:57px;height:17px;background:#5a5a5a;border-radius:2px;"></div>
<div style="left:1286px;top:994.5px;height:16px;line-height:16px;font-size:11px;color:#8c8c8c;white-space:nowrap;">0,0</div>
<div style="left:1355px;top:994.0px;height:16px;line-height:16px;font-size:11px;color:#ffffff;white-space:nowrap;">Grid = 10,0</div>
<div style="left:1328px;top:1014px;width:1.5px;height:24px;background:#222;"></div>
<div style="left:1330px;top:1016px;width:20px;height:20px;background:#5c89c2;border-radius:3px;"></div>
<svg style="left:1333px;top:1019px;" width="14" height="14" viewBox="0 0 14 14"><path d="M7 1l5.500 3v6l-5.500 3l-5.500 -3v-6z M1.500 4l5.500 3l5.500 -3M7 7v6" fill="none" stroke="#d6d6d6" stroke-width="1.200"/></svg>
<div style="left:1355px;top:1019.0px;height:16px;line-height:16px;font-size:11px;color:#e1e1e1;white-space:nowrap;">Add Time Tag</div>
<svg style="left:1466px;top:993px;" width="20" height="16" viewBox="-10 -8 20 16"><rect x="-7.500" y="-5" width="1.800" height="10" fill="#d6d6d6"/><path d="M-5.500 0l6 -4.500v9zM0.500 0l6 -4.500v9z" fill="#d6d6d6" transform="translate(0.500 0)"/></svg>
<div style="left:1489px;top:993px;width:1.5px;height:17px;background:#1e1e1e;"></div>
<svg style="left:1492px;top:993px;" width="20" height="16" viewBox="-10 -8 20 16"><path d="M-1.500 -4.500v9l-6 -4.500z" fill="#d6d6d6"/><rect x="0.500" y="-5" width="1.800" height="10" fill="#d6d6d6"/><rect x="4" y="-5" width="1.800" height="10" fill="#d6d6d6"/></svg>
<svg style="left:1514px;top:993px;" width="20" height="16" viewBox="-10 -8 20 16"><path d="M-5 -6.500v13l10.500 -6.500z" fill="#d6d6d6"/></svg>
<svg style="left:1531px;top:1007px;" width="4" height="4" viewBox="0 0 4 4"><path d="M4 0v4h-4z" fill="#e6e6e6"/></svg>
<svg style="left:1536px;top:993px;" width="20" height="16" viewBox="-10 -8 20 16"><path d="M1.500 -4.500v9l6 -4.500z" fill="#d6d6d6"/><rect x="-2.300" y="-5" width="1.800" height="10" fill="#d6d6d6"/><rect x="-5.800" y="-5" width="1.800" height="10" fill="#d6d6d6"/></svg>
<div style="left:1561px;top:993px;width:1.5px;height:17px;background:#1e1e1e;"></div>
<svg style="left:1564px;top:993px;" width="20" height="16" viewBox="-10 -8 20 16"><rect x="5.700" y="-5" width="1.800" height="10" fill="#d6d6d6"/><path d="M0.500 0l5 -4.500v9zM-6.500 0l6 -4.500v9z" fill="#d6d6d6" transform="translate(-0.500 0) scale(-1 1)"/></svg>
<svg style="left:1466px;top:1015px;" width="20" height="16" viewBox="-10 -8 20 16"><path d="M-1 -4v8l-5.500 -4zM1 -4v8l5.500 -4z" fill="#d6d6d6"/></svg>
<div style="left:1489px;top:1015px;width:1.5px;height:17px;background:#1e1e1e;"></div>
<div style="left:1492px;top:1015px;width:69px;height:17px;background:#646464;border-radius:2px;"></div>
<div style="left:1495px;top:1016.0px;height:16px;line-height:16px;font-size:11px;color:#e1e1e1;white-space:nowrap;">0</div>
<svg style="left:1551px;top:1018.5px;" width="6" height="10" viewBox="0 0 6 10"><path d="M0.500 4l2.500 -3.500l2.500 3.500zM0.500 6l2.500 3.500l2.500 -3.500z" fill="#e6e6e6"/></svg>
<div style="left:1562px;top:1015px;width:1.5px;height:17px;background:#1e1e1e;"></div>
<svg style="left:1567px;top:1015px;" width="16" height="17" viewBox="0 0 16 17"><circle cx="6.500" cy="6.500" r="5.500" fill="#d6d6d6"/><path d="M6.500 3v4h3" stroke="#333" stroke-width="1.200" fill="none"/><g transform="translate(10.500 11.500) scale(0.650)"><g fill="#f5a81c"><circle r="3.6" fill="none" stroke="#f5a81c" stroke-width="2.2"/><rect x="-1.1" y="-6.2" width="2.2" height="2.6" transform="rotate(0)"/><rect x="-1.1" y="-6.2" width="2.2" height="2.6" transform="rotate(45)"/><rect x="-1.1" y="-6.2" width="2.2" height="2.6" transform="rotate(90)"/><rect x="-1.1" y="-6.2" width="2.2" height="2.6" transform="rotate(135)"/><rect x="-1.1" y="-6.2" width="2.2" height="2.6" transform="rotate(180)"/><rect x="-1.1" y="-6.2" width="2.2" height="2.6" transform="rotate(225)"/><rect x="-1.1" y="-6.2" width="2.2" height="2.6" transform="rotate(270)"/><rect x="-1.1" y="-6.2" width="2.2" height="2.6" transform="rotate(315)"/></g></g></svg>
<div style="left:1597px;top:991px;width:43px;height:44px;background:#646464;border-radius:3px;"></div>
<svg style="left:1600px;top:994px;" width="37" height="38" viewBox="0 0 37 38"><path d="M15 5h5.500v9.500h9.500v5.500h-9.500v9.500h-5.500v-9.500h-9.500v-5.500h9.500z" fill="#d6d6d6"/><g transform="translate(27 28) rotate(-40)" fill="none" stroke="#3fc1c5" stroke-width="1.800"><circle cx="-4" cy="0" r="3"/><path d="M-1 0h9M5 0v3M8 0v2.500"/></g></svg>
<div style="left:1644px;top:991px;width:46px;height:19px;background:#646464;border-radius:3px;text-align:center;line-height:20px;font-size:11px;color:#e1e1e1;white-space:nowrap;">Auto Key</div>
<div style="left:1644px;top:1014px;width:46px;height:19px;background:#646464;border-radius:3px;text-align:center;line-height:20px;font-size:11px;color:#e1e1e1;white-space:nowrap;">Set Key</div>
<div style="left:1695px;top:991px;width:114px;height:19px;background:#646464;border-radius:2px;"></div>
<div style="left:1699px;top:993.0px;height:16px;line-height:16px;font-size:11px;color:#e1e1e1;white-space:nowrap;">Selected</div>
<svg style="left:1795px;top:999px;" width="8" height="5" viewBox="0 0 8 5"><path d="M0 0h7l-3.500 4.500z" fill="#e1e1e1"/></svg>
<svg style="left:1697px;top:1015px;" width="18" height="18" viewBox="0 0 18 18"><g fill="none" stroke="#3fc1c5" stroke-width="1.600"><path d="M5 5c0 5 -1 8 -3 11M13 5c0 5 1 8 3 11"/></g><rect x="7" y="1.500" width="4" height="4" fill="#333" stroke="#d6d6d6" stroke-width="1"/><circle cx="3" cy="3.500" r="1.300" fill="#d6d6d6"/><circle cx="15" cy="3.500" r="1.300" fill="#d6d6d6"/></svg>
<svg style="left:1712px;top:1030px;" width="4" height="4" viewBox="0 0 4 4"><path d="M4 0v4h-4z" fill="#e6e6e6"/></svg>
<div style="left:1721px;top:1014px;width:88px;height:20px;background:#646464;border-radius:3px;text-align:center;line-height:21px;font-size:11px;color:#e1e1e1;white-space:nowrap;">Key Filters...</div>
<svg style="left:1819px;top:991px;" width="20" height="20" viewBox="-10 -10 20 20"><circle cx="2" cy="-2" r="5" fill="none" stroke="#d6d6d6" stroke-width="1.800"/><path d="M-1.500 1.500l-6 6" stroke="#d6d6d6" stroke-width="2.200"/></svg>
<svg style="left:1842px;top:991px;" width="20" height="20" viewBox="-10 -10 20 20"><g fill="#3fc1c5"><rect x="-2" y="-9" width="5" height="5"/><rect x="4" y="-9" width="5" height="5"/><rect x="4" y="-3" width="5" height="5"/></g><circle cx="-1" cy="0" r="3.500" fill="#444" stroke="#d6d6d6" stroke-width="1.500"/><path d="M-3.500 2.500l-5 5" stroke="#d6d6d6" stroke-width="1.800"/></svg>
<svg style="left:1865px;top:991px;" width="20" height="20" viewBox="-10 -10 20 20"><path d="M-8 -4v-4h4M4 -8h4v4M8 4v4h-4M-4 8h-4v-4" fill="none" stroke="#d6d6d6" stroke-width="1.200"/><path d="M0 -5.500l5 2.500v5l-5 2.500l-5 -2.500v-5z" fill="#3fc1c5"/><path d="M-5 -3l5 2.500l5 -2.500M0 -0.500v5" stroke="#444" stroke-width="0.700" fill="none"/></svg>
<svg style="left:1884px;top:1008px;" width="4" height="4" viewBox="0 0 4 4"><path d="M4 0v4h-4z" fill="#e6e6e6"/></svg>
<svg style="left:1888px;top:991px;" width="20" height="20" viewBox="-10 -10 20 20"><path d="M-9 2l4 -3l4 3l-4 3zM-4 6l4 -3l4 3l-4 3z" fill="#d6d6d6" transform="translate(-0.500 -1.500) scale(0.850)"/><path d="M0 -6a3.500 1.800 0 0 1 7 0v8a3.500 1.800 0 0 1 -7 0z" fill="#3fc1c5"/><ellipse cx="3.500" cy="-6" rx="3.500" ry="1.800" fill="#7fe0e3"/></svg>
<svg style="left:1907px;top:1008px;" width="4" height="4" viewBox="0 0 4 4"><path d="M4 0v4h-4z" fill="#e6e6e6"/></svg>
<svg style="left:1819px;top:1013px;" width="20" height="20" viewBox="-10 -10 20 20"><path d="M-7 -7l13 7l-13 7M6 0l-9 -2.500" fill="none" stroke="#d6d6d6" stroke-width="1.500"/><path d="M-3 -2.500a4 4 0 0 0 0 6" fill="none" stroke="#d6d6d6" stroke-width="1.300"/></svg>
<svg style="left:1838px;top:1030px;" width="4" height="4" viewBox="0 0 4 4"><path d="M4 0v4h-4z" fill="#e6e6e6"/></svg>
<svg style="left:1842px;top:1013px;" width="20" height="20" viewBox="-10 -10 20 20"><path d="M-5 8c-2 -3 -3.500 -5 -4 -7c1 -1 2 0 3 1.500v-8.500c0 -1.300 1.800 -1.300 1.800 0v-2c0 -1.300 1.800 -1.300 1.800 0v0.500c0 -1.300 1.800 -1.300 1.800 0v1.500c0 -1.300 1.800 -1.300 1.800 0v9c0 2 -0.500 3.500 -1.500 5z" fill="#d6d6d6"/></svg>
<svg style="left:1861px;top:1030px;" width="4" height="4" viewBox="0 0 4 4"><path d="M4 0v4h-4z" fill="#e6e6e6"/></svg>
<svg style="left:1865px;top:1013px;" width="20" height="20" viewBox="-10 -10 20 20"><ellipse cx="0" cy="1" rx="9" ry="3.500" fill="none" stroke="#d6d6d6" stroke-width="1.500" transform="rotate(-25)"/><circle cx="0" cy="-1" r="5" fill="#d6d6d6"/><path d="M0 -1v-5a5 5 0 0 0 -5 5z" fill="#3fc1c5"/></svg>
<svg style="left:1884px;top:1030px;" width="4" height="4" viewBox="0 0 4 4"><path d="M4 0v4h-4z" fill="#e6e6e6"/></svg>
<svg style="left:1888px;top:1013px;" width="20" height="20" viewBox="-10 -10 20 20"><rect x="-8" y="-8" width="16" height="16" fill="#d6d6d6"/><rect x="-6.500" y="0.500" width="6" height="6" fill="#444"/><path d="M-1 1l7 -7M2 -6.500h4.500v4.500" stroke="#444" stroke-width="1.600" fill="none"/></svg>
<svg style="left:0px;top:0px;z-index:2;" width="1920" height="1040" viewBox="0 0 1920 1040"><ellipse cx="1487.300" cy="197.600" rx="34.400" ry="22.500" fill="#6d7278"/><ellipse cx="1487.300" cy="196.800" rx="27.400" ry="17" fill="#1f1f1f" stroke="#4a4e52" stroke-width="1"/><path d="M1484.900 157.700L1507.800 168.300L1490.600 179.300L1467 171.100Z" fill="#868686"/><path d="M1467 171.100L1490.600 179.300L1489.400 203.800L1469 192Z" fill="#808080"/><path d="M1490.600 179.300L1507.800 168.300L1506.200 188.300L1489.400 203.800Z" fill="#7a7a7a"/><circle cx="1490" cy="182.500" r="3.800" fill="#767c84" fill-opacity="0.8"/><g font-size="4.500" fill="#6a7078" font-weight="bold"><text transform="translate(1482 171.500) rotate(-30) skewX(-30)">TOP</text><text transform="translate(1473.500 186) rotate(22)">LEFT</text><text transform="translate(1493.500 192) rotate(-40)">FRONT</text></g><g font-size="7" fill="#979da3" font-weight="bold"><text transform="translate(1459 182) rotate(-50)">N</text><text transform="translate(1458 212) rotate(35) scale(1 0.700)">W</text><text transform="translate(1512 212) rotate(-35) scale(1 0.700)">S</text><text transform="translate(1508 178) rotate(50) scale(0.600)">E</text></g></svg>
<svg style="left:0px;top:0px;z-index:5;" width="1920" height="1040" viewBox="0 0 1920 1040"><g fill="none" stroke="#22b14c" stroke-width="4.200" stroke-linecap="round" stroke-linejoin="round"><path d="M1740.600 262.200L936.500 365"/><path d="M957 343L936.500 365L961.500 380.800"/><path d="M1743.300 272.200L1169 451.500"/><path d="M1177 431.500L1169 451.500L1194 460"/><path d="M1746 280.800L1540 400L1370 504"/><path d="M1366 474L1370 504L1399 509"/><path d="M1723 505L1758 287.500"/><path d="M1743 294L1758 287.500L1774 299"/><path d="M1815 506Q1822 505 1822 512L1822 524Q1822 529.500 1829 529.500Q1822 529.500 1822 535L1822 550Q1822 557 1815 556"/></g><rect x="1552.500" y="521.600" width="169" height="34.200" fill="none" stroke="#22b14c" stroke-width="4.800"/></svg>
</body></html>
